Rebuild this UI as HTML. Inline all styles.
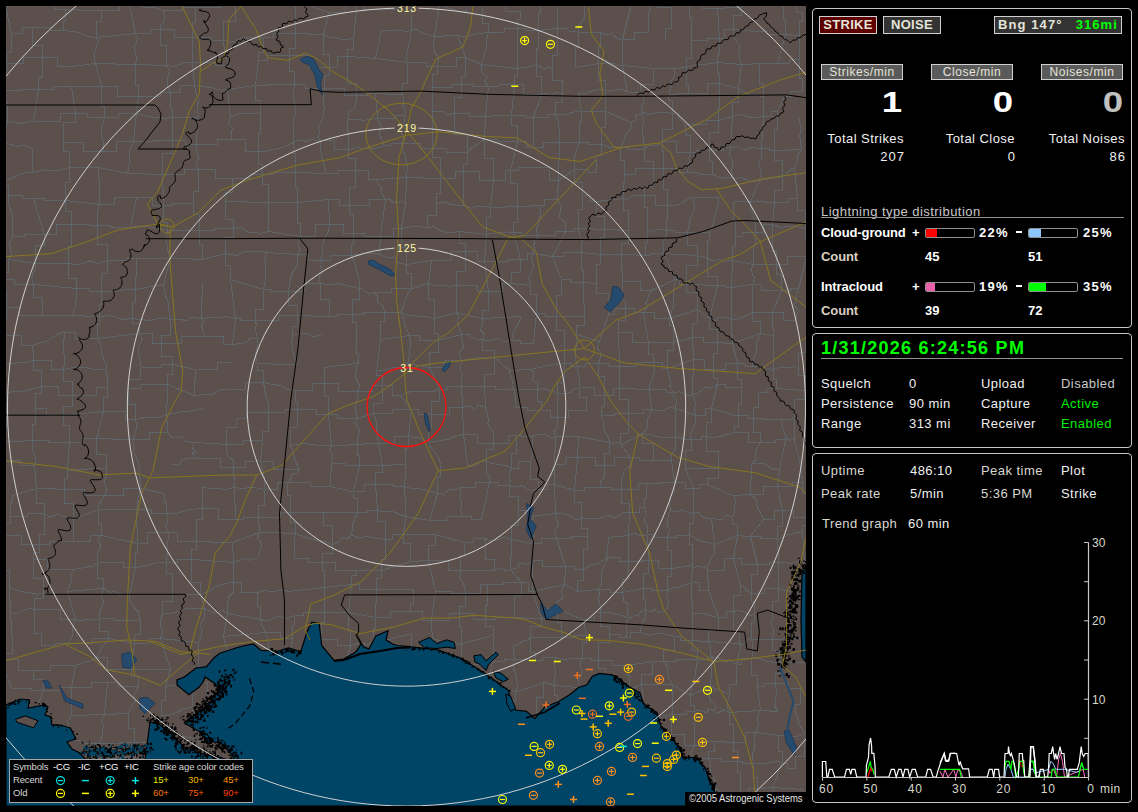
<!DOCTYPE html><html><head><meta charset="utf-8"><style>
*{margin:0;padding:0}
body{background:#000;width:1138px;height:812px;overflow:hidden;position:relative;font-family:"Liberation Sans",sans-serif}
.box{position:absolute;border:1px solid #c8c8c8;border-radius:4px;box-sizing:border-box}
.btn{position:absolute;border:1px solid #d0d0d0;box-sizing:border-box;color:#e4e4d8;text-align:center;font-size:13px;line-height:16px}
.btn.b{font-weight:bold;letter-spacing:0.3px}
.btn.s{font-size:12px;line-height:14px;letter-spacing:0.55px}
.big{position:absolute;width:60px;text-align:right;font-weight:bold;font-size:30px;line-height:30px;transform:scaleX(1.22);transform-origin:100% 0}
.t{position:absolute;font-size:13px;line-height:13px;color:#f0f0f0;letter-spacing:0.45px;white-space:nowrap}
.t.r{text-align:right}
.t.b{font-weight:bold;letter-spacing:-0.1px}
.bar{position:absolute;width:50px;height:10px;border:1px solid #909090;border-radius:2px;box-sizing:border-box;overflow:hidden}
.bar div{height:100%}
.date{position:absolute;font-size:18px;line-height:18px;font-weight:bold;color:#00ff00;letter-spacing:1.25px;white-space:nowrap}
.lg{position:absolute;font-size:9.5px;line-height:10px;white-space:nowrap;letter-spacing:-0.15px}
.gl{font-family:"Liberation Sans",sans-serif;font-size:12px;fill:#d8d8c8}
</style></head><body>
<svg width="1138" height="812" style="position:absolute;left:0;top:0">
<defs><clipPath id="mc"><rect x="6" y="6" width="800" height="800"/></clipPath></defs>
<g clip-path="url(#mc)">
<rect x="6" y="6" width="800" height="800" fill="#5c504c"/>
<path d="M5.5 6.5L32.5 2.5M5.5 6.5L11.5 33.5M11.5 33.5H22.5V27.5H32.5M11.5 33.5V52.5H6.5V63.5M6.5 63.5H23.5V57.5H42.5M6.5 63.5L7.4 70.2L4.9 76.4L4.1 81.8L1.5 90.5M1.5 90.5H21.5V89.5H38.5M1.5 90.5V102.5H7.5V122.5M7.5 122.5L14.1 121.7L20.9 123.7L26.3 122.2L33.5 121.5M7.5 122.5L0.5 143.5M0.5 143.5L7.2 143.6L17.7 146.4L23.3 145.1L32.5 148.5M0.5 143.5V164.5H0.5V178.5M0.5 178.5L8.8 179.4L18.5 175.3L24.4 172.7L32.5 172.5M0.5 178.5V185.5H8.5V195.5M8.5 195.5H22.5V198.5H33.5M8.5 195.5L8.7 204.0L12.8 217.3L13.0 224.2L12.5 236.5M12.5 236.5H24.5V234.5H44.5M12.5 236.5L9.6 243.6L10.9 250.0L11.6 254.7L8.5 259.5M8.5 259.5L35.5 263.5M8.5 259.5V272.5H1.5V279.5M1.5 279.5H14.5V284.5H33.5M1.5 279.5V290.5H6.5V307.5M6.5 307.5H19.5V315.5H42.5M6.5 307.5V319.5H1.5V335.5M1.5 335.5H21.5V345.5H32.5M1.5 335.5L0.5 363.5M0.5 363.5L9.0 363.9L17.2 362.8L27.3 362.6L33.5 360.5M0.5 363.5V383.5H5.5V393.5M5.5 393.5L13.2 391.5L22.9 391.1L34.7 388.3L41.5 386.5M5.5 393.5V402.5H6.5V415.5M6.5 415.5L5.5 441.5M5.5 441.5H23.5V440.5H32.5M5.5 441.5L3.6 448.7L4.5 452.9L3.3 456.6L5.5 460.5M5.5 460.5H20.5V465.5H34.5M12.5 495.5L36.5 488.5M12.5 495.5V502.5H10.5V516.5M10.5 516.5H27.5V513.5H44.5M10.5 516.5V523.5H3.5V535.5M3.5 535.5H21.5V544.5H39.5M3.5 535.5V547.5H3.5V557.5M3.5 557.5V570.5H9.5V587.5M9.5 587.5L20.2 591.4L28.7 592.6L36.8 594.2L43.5 593.5M9.5 587.5V600.5H10.5V612.5M10.5 612.5L17.1 613.9L20.4 611.1L30.8 607.9L34.5 609.5M10.5 612.5L12.5 643.5M12.5 643.5V653.5H0.5V659.5M0.5 659.5H18.5V670.5H33.5M0.5 659.5L11.5 688.5M11.5 688.5H31.5V690.5H43.5M12.5 712.5H22.5V708.5H36.5M12.5 712.5V729.5H0.5V740.5M0.5 740.5L8.4 740.9L16.9 742.8L22.4 746.2L31.5 745.5M0.5 740.5V748.5H9.5V760.5M9.5 760.5L14.9 760.7L22.8 762.3L28.4 763.8L34.5 766.5M9.5 760.5V770.5H0.5V786.5M0.5 786.5H20.5V793.5H34.5M0.5 786.5L3.7 792.1L7.8 800.7L8.1 809.3L12.5 817.5M32.5 2.5H54.5V9.5H65.5M32.5 27.5H51.5V30.5H63.5M32.5 27.5V45.5H42.5V57.5M42.5 57.5H57.5V66.5H70.5M42.5 57.5V77.5H38.5V89.5M38.5 89.5H53.5V86.5H71.5M38.5 89.5L33.5 121.5M33.5 121.5H60.5V113.5H75.5M32.5 148.5L32.5 172.5M32.5 172.5L44.0 169.7L49.2 170.9L62.2 169.9L69.5 167.5M33.5 198.5H44.5V200.5H65.5M33.5 198.5L44.5 234.5M44.5 234.5H56.5V224.5H71.5M44.5 234.5V245.5H35.5V263.5M35.5 263.5H52.5V263.5H68.5M35.5 263.5L35.1 271.0L32.4 272.6L31.9 278.3L33.5 284.5M33.5 284.5L76.5 288.5M33.5 284.5V297.5H42.5V315.5M42.5 315.5H61.5V315.5H72.5M32.5 345.5L42.2 342.1L47.0 341.2L58.9 333.4L64.5 332.5M32.5 345.5V350.5H33.5V360.5M33.5 360.5H51.5V369.5H63.5M33.5 360.5V370.5H41.5V386.5M41.5 386.5H58.5V395.5H72.5M41.5 386.5V393.5H35.5V408.5M35.5 408.5H46.5V415.5H63.5M35.5 408.5V424.5H32.5V440.5M32.5 440.5H48.5V442.5H69.5M32.5 440.5L32.6 447.0L33.3 452.2L36.1 457.9L34.5 465.5M34.5 465.5L36.5 488.5M36.5 488.5H55.5V489.5H64.5M36.5 488.5V503.5H44.5V513.5M44.5 513.5L50.0 517.2L57.9 514.5L67.2 517.2L73.5 519.5M44.5 513.5V534.5H39.5V544.5M39.5 544.5H49.5V541.5H73.5M39.5 544.5V552.5H33.5V559.5M33.5 559.5H47.5V569.5H74.5M33.5 559.5V578.5H43.5V593.5M43.5 593.5V598.5H34.5V609.5M34.5 609.5H60.5V619.5H75.5M34.5 609.5V633.5H41.5V645.5M41.5 645.5H55.5V643.5H68.5M33.5 670.5H50.5V665.5H75.5M33.5 670.5V679.5H43.5V690.5M43.5 690.5H61.5V687.5H71.5M43.5 690.5L36.5 708.5M36.5 708.5L36.3 719.3L35.5 725.4L34.3 735.3L31.5 745.5M31.5 745.5L64.5 740.5M31.5 745.5V754.5H34.5V766.5M34.5 766.5L47.1 769.4L56.2 765.8L66.8 766.8L76.5 769.5M34.5 793.5H49.5V787.5H73.5M34.5 793.5L38.2 798.6L35.1 803.6L36.0 808.8L39.5 811.5M39.5 811.5L49.9 812.8L58.7 814.2L65.0 813.9L73.5 815.5M65.5 9.5H78.5V10.5H101.5M65.5 9.5V21.5H63.5V30.5M63.5 30.5L71.8 31.3L78.9 32.4L89.0 36.7L96.5 37.5M70.5 66.5L95.5 63.5M71.5 86.5L101.5 86.5M71.5 86.5L75.5 113.5M75.5 113.5H87.5V117.5H104.5M75.5 113.5V122.5H63.5V142.5M63.5 142.5H83.5V151.5H103.5M63.5 142.5V151.5H69.5V167.5M69.5 167.5H81.5V167.5H98.5M69.5 167.5V182.5H65.5V200.5M65.5 200.5L99.5 204.5M65.5 200.5V211.5H71.5V224.5M71.5 224.5H89.5V225.5H97.5M71.5 224.5V246.5H68.5V263.5M68.5 263.5L79.0 264.9L90.0 260.8L98.0 263.7L107.5 260.5M68.5 263.5V278.5H76.5V288.5M76.5 288.5H89.5V291.5H101.5M76.5 288.5L76.6 294.3L75.8 302.7L74.5 308.5L72.5 315.5M72.5 315.5H85.5V316.5H99.5M64.5 332.5H75.5V338.5H97.5M64.5 332.5L63.9 339.9L63.6 351.4L65.0 359.8L63.5 369.5M63.5 369.5L74.8 367.2L86.1 367.6L93.5 369.4L106.5 369.5M63.5 369.5V381.5H72.5V395.5M72.5 395.5H96.5V387.5H107.5M72.5 395.5V406.5H63.5V415.5M63.5 415.5L103.5 411.5M63.5 415.5V425.5H69.5V442.5M69.5 442.5H82.5V438.5H96.5M69.5 442.5L67.5 470.5M67.5 470.5L78.3 469.7L86.3 469.2L96.5 468.1L106.5 468.5M67.5 470.5V478.5H64.5V489.5M64.5 489.5H84.5V495.5H104.5M64.5 489.5V503.5H73.5V519.5M73.5 519.5L98.5 509.5M73.5 519.5V532.5H73.5V541.5M73.5 541.5H90.5V535.5H101.5M74.5 569.5L79.9 568.5L84.6 567.4L91.9 566.6L97.5 562.5M74.5 569.5L70.3 574.6L72.3 579.3L69.8 584.6L67.5 591.5M67.5 591.5L103.5 588.5M67.5 591.5L75.5 619.5M75.5 619.5L83.1 620.9L87.0 619.5L94.6 620.1L99.5 618.5M75.5 619.5L72.5 626.5L72.3 631.7L72.7 635.7L68.5 643.5M68.5 643.5H92.5V638.5H108.5M75.5 665.5L80.9 663.5L84.3 662.1L93.2 660.3L96.5 657.5M75.5 665.5L71.5 687.5M71.5 687.5H91.5V682.5H107.5M71.5 687.5V707.5H71.5V715.5M71.5 715.5L104.5 714.5M71.5 715.5L67.6 720.8L69.0 729.0L67.9 733.7L64.5 740.5M64.5 740.5H82.5V743.5H99.5M64.5 740.5V756.5H76.5V769.5M76.5 769.5H88.5V758.5H95.5M73.5 787.5H83.5V782.5H101.5M73.5 787.5L74.7 793.3L73.4 802.5L71.1 810.1L73.5 815.5M73.5 815.5H92.5V810.5H106.5M101.5 10.5H119.5V0.5H128.5M101.5 10.5V21.5H96.5V37.5M96.5 37.5L135.5 33.5M96.5 37.5L98.7 42.6L94.6 51.1L94.0 59.3L95.5 63.5M95.5 63.5H114.5V64.5H135.5M95.5 63.5L101.5 86.5M101.5 86.5H117.5V96.5H138.5M101.5 86.5V106.5H104.5V117.5M104.5 117.5H118.5V113.5H136.5M104.5 117.5L102.0 127.0L101.8 136.2L104.0 143.4L103.5 151.5M103.5 151.5H116.5V141.5H133.5M98.5 167.5L127.5 173.5M98.5 167.5V178.5H99.5V204.5M99.5 204.5H114.5V197.5H136.5M99.5 204.5L98.1 209.6L97.4 215.3L97.3 219.5L97.5 225.5M97.5 225.5H110.5V227.5H130.5M97.5 225.5V244.5H107.5V260.5M107.5 260.5H126.5V258.5H136.5M107.5 260.5V273.5H101.5V291.5M101.5 291.5L110.6 291.8L119.5 290.5L126.6 289.5L135.5 289.5M101.5 291.5V304.5H99.5V316.5M99.5 316.5L109.7 315.6L113.6 316.5L121.9 319.5L132.5 318.5M99.5 316.5V324.5H97.5V338.5M97.5 338.5L139.5 333.5M97.5 338.5L101.0 346.0L101.5 354.3L106.2 364.2L106.5 369.5M106.5 369.5V376.5H107.5V387.5M107.5 387.5V397.5H103.5V411.5M103.5 411.5H125.5V419.5H135.5M103.5 411.5L96.5 438.5M96.5 438.5H112.5V439.5H132.5M96.5 438.5V454.5H106.5V468.5M106.5 468.5L106.5 475.7L103.9 481.8L107.0 489.6L104.5 495.5M104.5 495.5H123.5V488.5H140.5M104.5 495.5L103.7 496.6L100.1 503.3L98.6 503.9L98.5 509.5M98.5 509.5H124.5V509.5H136.5M98.5 509.5V523.5H101.5V535.5M101.5 535.5L137.5 543.5M101.5 535.5L98.3 539.9L101.0 547.2L97.0 553.4L97.5 562.5M97.5 562.5H123.5V567.5H135.5M97.5 562.5V578.5H103.5V588.5M103.5 588.5L110.6 592.2L114.2 591.8L122.4 594.6L129.5 594.5M103.5 588.5L100.9 596.0L103.8 602.2L99.4 613.1L99.5 618.5M99.5 618.5H114.5V620.5H140.5M99.5 618.5V631.5H108.5V638.5M108.5 638.5L134.5 643.5M108.5 638.5L104.9 644.3L102.5 645.8L99.5 652.2L96.5 657.5M96.5 657.5H107.5V669.5H131.5M107.5 682.5H118.5V686.5H138.5M107.5 682.5L104.5 714.5M104.5 714.5H116.5V713.5H128.5M104.5 714.5L101.9 720.2L103.1 726.9L102.6 733.9L99.5 743.5M99.5 743.5H121.5V742.5H134.5M99.5 743.5L99.8 748.4L95.3 752.6L94.7 753.1L95.5 758.5M95.5 758.5H120.5V757.5H133.5M95.5 758.5V766.5H101.5V782.5M101.5 782.5L112.8 780.2L118.1 781.4L127.7 780.6L138.5 782.5M101.5 782.5L101.1 787.8L104.2 795.9L103.5 803.8L106.5 810.5M106.5 810.5H122.5V809.5H138.5M128.5 0.5L135.7 2.2L143.5 7.4L155.2 7.5L163.5 10.5M128.5 0.5L135.5 33.5M135.5 33.5H150.5V29.5H160.5M135.5 33.5L137.5 39.0L134.4 48.0L136.8 58.2L135.5 64.5M135.5 64.5L166.5 65.5M135.5 64.5V85.5H138.5V96.5M138.5 96.5H160.5V92.5H170.5M138.5 96.5L136.5 113.5M136.5 113.5L147.8 116.5L154.9 117.4L166.0 118.2L172.5 117.5M136.5 113.5L133.5 141.5M133.5 141.5H153.5V140.5H172.5M133.5 141.5L129.8 150.1L129.4 156.6L129.5 164.0L127.5 173.5M127.5 173.5L162.5 174.5M136.5 197.5H152.5V205.5H163.5M136.5 197.5L130.5 227.5M130.5 227.5L138.9 225.8L146.5 226.5L157.4 228.6L167.5 230.5M136.5 258.5H156.5V258.5H170.5M136.5 258.5V276.5H135.5V289.5M135.5 289.5L163.5 284.5M135.5 289.5V302.5H132.5V318.5M132.5 318.5L141.8 319.7L149.8 320.4L163.3 317.8L170.5 319.5M132.5 318.5V323.5H139.5V333.5M139.5 333.5H152.5V343.5H161.5M139.5 333.5L142.1 339.8L138.0 348.2L140.0 360.6L140.5 367.5M140.5 367.5H161.5V364.5H172.5M140.5 367.5V379.5H128.5V388.5M128.5 388.5H140.5V384.5H167.5M128.5 388.5V404.5H135.5V419.5M135.5 419.5L144.9 417.5L149.1 417.9L159.9 417.7L166.5 414.5M135.5 419.5L136.6 425.4L136.4 428.4L134.6 435.2L132.5 439.5M132.5 439.5H149.5V432.5H167.5M132.5 439.5L134.3 446.8L133.8 452.2L138.3 462.2L139.5 468.5M139.5 468.5V478.5H140.5V488.5M140.5 488.5L164.5 493.5M140.5 488.5L136.5 509.5M136.5 509.5H151.5V513.5H166.5M136.5 509.5L137.5 543.5M137.5 543.5H147.5V532.5H168.5M137.5 543.5V552.5H135.5V567.5M135.5 567.5L144.6 566.0L150.0 564.3L160.7 562.3L166.5 562.5M135.5 567.5L129.5 594.5M129.5 594.5H144.5V594.5H172.5M129.5 594.5L130.1 601.9L133.6 607.2L138.3 611.8L140.5 620.5M140.5 620.5V634.5H134.5V643.5M134.5 643.5H149.5V638.5H160.5M134.5 643.5L131.5 669.5M131.5 669.5H143.5V669.5H170.5M131.5 669.5V676.5H138.5V686.5M138.5 686.5L133.9 695.4L135.7 700.6L130.1 707.9L128.5 713.5M128.5 713.5V728.5H134.5V742.5M134.5 742.5H159.5V733.5H171.5M134.5 742.5V750.5H133.5V757.5M133.5 757.5H155.5V757.5H169.5M133.5 757.5V769.5H138.5V782.5M138.5 782.5L144.1 781.3L148.0 782.3L157.4 784.7L161.5 785.5M138.5 782.5V794.5H138.5V809.5M138.5 809.5L168.5 811.5M163.5 10.5H182.5V7.5H195.5M163.5 10.5L164.1 15.8L163.9 22.3L160.8 25.5L160.5 29.5M160.5 29.5H174.5V37.5H192.5M160.5 29.5V45.5H166.5V65.5M166.5 65.5L173.9 66.5L178.9 64.7L184.8 62.3L192.5 62.5M166.5 65.5L169.6 71.3L167.9 77.1L167.7 86.4L170.5 92.5M170.5 92.5H180.5V85.5H194.5M170.5 92.5V108.5H172.5V117.5M172.5 117.5H182.5V117.5H198.5M172.5 117.5V126.5H172.5V140.5M172.5 140.5H185.5V144.5H196.5M172.5 140.5V153.5H162.5V174.5M162.5 174.5H184.5V169.5H198.5M162.5 174.5V189.5H163.5V205.5M163.5 205.5H172.5V203.5H193.5M163.5 205.5V222.5H167.5V230.5M167.5 230.5L199.5 230.5M167.5 230.5L166.4 239.0L167.0 244.8L167.7 249.5L170.5 258.5M170.5 258.5H192.5V259.5H202.5M170.5 258.5L163.5 284.5M163.5 284.5L165.1 294.6L167.8 300.3L168.9 310.3L170.5 319.5M170.5 319.5L179.2 319.6L187.4 320.6L191.7 317.0L201.5 318.5M170.5 319.5V335.5H161.5V343.5M161.5 343.5H181.5V336.5H203.5M161.5 343.5V356.5H172.5V364.5M172.5 364.5L195.5 369.5M172.5 364.5V374.5H167.5V384.5M167.5 384.5L194.5 395.5M167.5 384.5V402.5H166.5V414.5M166.5 414.5L175.3 413.1L183.5 411.3L193.0 410.9L203.5 408.5M166.5 414.5V421.5H167.5V432.5M167.5 432.5L171.8 437.4L182.7 436.9L186.0 441.6L194.5 442.5M172.5 464.5L179.6 465.2L182.0 459.6L187.3 458.7L194.5 458.5M164.5 493.5V502.5H166.5V513.5M166.5 513.5L176.6 513.6L184.2 510.8L193.3 509.1L202.5 508.5M166.5 513.5L168.1 517.4L167.8 521.2L165.7 527.2L168.5 532.5M168.5 532.5H177.5V541.5H196.5M168.5 532.5L166.5 562.5M166.5 562.5H177.5V559.5H191.5M166.5 562.5V573.5H172.5V594.5M172.5 594.5L200.5 594.5M172.5 594.5V601.5H162.5V613.5M162.5 613.5L171.7 613.4L185.0 608.9L192.4 608.8L204.5 608.5M162.5 613.5L161.0 619.5L160.8 625.9L162.5 631.1L160.5 638.5M160.5 638.5L198.5 642.5M160.5 638.5L170.5 669.5M170.5 669.5L165.5 686.5M165.5 686.5L193.5 682.5M165.5 686.5V700.5H161.5V715.5M161.5 715.5L167.8 715.5L178.8 711.5L182.5 708.4L192.5 707.5M161.5 715.5V727.5H171.5V733.5M171.5 733.5L198.5 739.5M171.5 733.5V747.5H169.5V757.5M169.5 757.5H178.5V759.5H198.5M169.5 757.5V772.5H161.5V785.5M161.5 785.5L168.5 782.8L178.4 784.2L185.5 784.1L193.5 784.5M161.5 785.5V796.5H168.5V811.5M168.5 811.5H179.5V820.5H202.5M195.5 7.5H221.5V0.5H235.5M195.5 7.5V22.5H192.5V37.5M192.5 37.5H211.5V40.5H223.5M192.5 37.5V48.5H192.5V62.5M192.5 62.5H215.5V65.5H229.5M192.5 62.5L194.5 85.5M194.5 85.5L202.6 86.7L211.4 87.6L220.8 90.3L227.5 89.5M194.5 85.5L196.1 94.0L198.5 99.2L197.4 108.9L198.5 117.5M198.5 117.5L196.2 125.5L197.4 132.2L196.0 139.7L196.5 144.5M196.5 144.5H217.5V139.5H231.5M196.5 144.5L195.9 148.7L198.5 158.2L195.8 165.4L198.5 169.5M198.5 169.5H215.5V178.5H232.5M198.5 169.5V191.5H193.5V203.5M193.5 203.5V214.5H199.5V230.5M199.5 230.5H214.5V228.5H233.5M199.5 230.5V244.5H202.5V259.5M202.5 259.5L225.5 253.5M202.5 282.5V296.5H201.5V318.5M201.5 318.5L210.5 317.7L221.0 317.6L224.6 316.5L235.5 318.5M201.5 318.5L203.7 320.7L201.2 326.2L204.4 334.0L203.5 336.5M203.5 336.5H223.5V344.5H232.5M195.5 369.5H217.5V362.5H231.5M195.5 369.5V380.5H194.5V395.5M194.5 395.5L202.9 394.7L211.2 394.9L220.8 389.6L231.5 389.5M194.5 442.5L226.5 444.5M194.5 442.5L192.4 447.7L196.2 452.2L192.2 452.3L194.5 458.5M194.5 458.5H220.5V467.5H233.5M202.5 487.5L211.3 488.5L217.8 488.2L224.3 489.5L234.5 487.5M202.5 487.5L202.5 508.5M202.5 508.5H218.5V519.5H235.5M202.5 508.5V519.5H196.5V541.5M196.5 541.5H210.5V542.5H232.5M196.5 541.5V549.5H191.5V559.5M191.5 559.5L233.5 562.5M191.5 559.5V582.5H200.5V594.5M200.5 594.5L209.3 590.8L216.2 586.4L226.1 583.3L233.5 582.5M200.5 594.5L204.5 608.5M204.5 608.5L211.8 612.0L217.6 613.5L221.5 609.8L227.5 613.5M204.5 608.5L204.8 617.6L200.8 623.0L201.7 634.6L198.5 642.5M198.5 642.5L198.5 666.5M198.5 666.5L231.5 665.5M198.5 666.5L193.5 682.5M193.5 682.5H207.5V695.5H226.5M193.5 682.5L192.5 707.5M192.5 707.5H215.5V711.5H232.5M192.5 707.5V722.5H198.5V739.5M198.5 739.5L206.6 741.0L214.7 741.9L222.5 739.7L232.5 739.5M198.5 739.5V747.5H198.5V759.5M198.5 759.5H214.5V762.5H230.5M198.5 759.5V772.5H193.5V784.5M193.5 784.5H211.5V790.5H236.5M193.5 784.5L196.8 794.0L199.8 803.7L198.0 809.7L202.5 820.5M202.5 820.5L232.5 817.5M235.5 0.5V21.5H223.5V40.5M223.5 40.5L231.7 42.1L243.6 37.8L255.9 37.7L263.5 37.5M223.5 40.5L223.8 45.3L225.5 53.5L227.1 60.1L229.5 65.5M227.5 89.5L255.5 85.5M227.5 89.5L230.5 117.5M230.5 117.5L235.9 114.2L247.7 113.1L254.1 113.9L260.5 112.5M230.5 117.5L228.6 124.9L232.6 128.5L231.0 131.6L231.5 139.5M231.5 139.5H245.5V151.5H258.5M232.5 178.5H250.5V174.5H262.5M232.5 178.5V192.5H225.5V201.5M225.5 201.5H247.5V202.5H268.5M225.5 201.5V219.5H233.5V228.5M233.5 228.5L241.6 227.7L248.5 232.3L261.0 233.2L268.5 231.5M233.5 228.5V237.5H225.5V253.5M225.5 253.5L236.4 255.5L245.0 251.7L254.9 251.0L266.5 252.5M225.5 253.5V265.5H230.5V279.5M230.5 279.5L263.5 289.5M230.5 279.5L235.5 318.5M235.5 318.5H241.5V320.5H255.5M235.5 318.5L232.5 344.5M232.5 344.5L237.4 343.9L246.7 342.6L250.0 338.3L257.5 338.5M231.5 389.5H245.5V382.5H263.5M236.5 418.5H246.5V412.5H268.5M236.5 418.5V427.5H226.5V444.5M226.5 444.5H243.5V440.5H262.5M226.5 444.5L226.2 450.4L227.8 455.7L233.3 460.6L233.5 467.5M233.5 467.5H245.5V461.5H260.5M233.5 467.5V477.5H234.5V487.5M234.5 487.5L244.2 489.0L248.1 487.0L256.9 487.9L264.5 489.5M234.5 487.5V505.5H235.5V519.5M235.5 519.5H243.5V517.5H258.5M232.5 542.5L259.5 532.5M232.5 542.5L233.5 562.5M233.5 562.5L242.0 559.8L243.5 558.1L250.2 560.3L258.5 557.5M233.5 562.5V569.5H233.5V582.5M233.5 582.5H241.5V592.5H257.5M233.5 582.5L233.5 591.9L228.7 597.0L227.2 605.7L227.5 613.5M227.5 613.5L260.5 619.5M227.5 613.5L223.5 636.5M223.5 636.5L265.5 632.5M223.5 636.5L231.5 665.5M231.5 665.5H247.5V670.5H268.5M231.5 665.5L230.1 675.4L227.9 680.2L229.6 690.3L226.5 695.5M226.5 695.5L256.5 694.5M232.5 711.5L237.6 712.9L249.3 712.5L252.5 713.3L261.5 713.5M232.5 711.5V720.5H232.5V739.5M232.5 739.5L268.5 735.5M232.5 739.5L230.5 762.5M230.5 762.5H240.5V770.5H262.5M230.5 762.5L231.5 767.7L233.3 774.3L233.1 781.4L236.5 790.5M236.5 790.5H254.5V788.5H265.5M236.5 790.5L232.5 817.5M232.5 817.5H247.5V818.5H268.5M268.5 0.5L276.0 1.2L279.7 -1.0L288.4 2.2L295.5 0.5M263.5 37.5H273.5V33.5H295.5M263.5 37.5V52.5H258.5V60.5M258.5 60.5H267.5V55.5H289.5M258.5 60.5L255.5 85.5M255.5 85.5H267.5V84.5H294.5M255.5 85.5V100.5H260.5V112.5M260.5 112.5V133.5H258.5V151.5M258.5 151.5L266.0 151.1L276.9 149.0L284.0 147.0L293.5 142.5M258.5 151.5V164.5H262.5V174.5M262.5 174.5H272.5V172.5H295.5M262.5 174.5V184.5H268.5V202.5M268.5 202.5H285.5V202.5H297.5M268.5 202.5V222.5H268.5V231.5M268.5 231.5L300.5 236.5M266.5 252.5L297.5 254.5M266.5 252.5L264.9 261.1L265.3 269.7L265.0 282.1L263.5 289.5M263.5 289.5H271.5V291.5H288.5M263.5 289.5V309.5H255.5V320.5M255.5 320.5H278.5V315.5H297.5M255.5 320.5L256.3 325.3L255.2 327.6L256.7 335.9L257.5 338.5M257.5 338.5L257.6 344.5L255.9 352.4L255.4 355.9L257.5 363.5M257.5 363.5H272.5V364.5H296.5M257.5 363.5V370.5H263.5V382.5M263.5 382.5L272.1 384.4L280.1 385.5L287.3 389.4L295.5 390.5M263.5 382.5L265.2 392.4L266.6 397.7L268.6 403.9L268.5 412.5M268.5 412.5H285.5V409.5H297.5M268.5 412.5V431.5H262.5V440.5M262.5 440.5L260.5 461.5M260.5 461.5H273.5V469.5H299.5M260.5 461.5L262.6 469.1L263.9 475.2L264.7 483.0L264.5 489.5M264.5 489.5H277.5V482.5H287.5M264.5 489.5V505.5H258.5V517.5M258.5 517.5H280.5V512.5H290.5M258.5 517.5V525.5H259.5V532.5M259.5 532.5H283.5V533.5H295.5M259.5 532.5L257.6 538.8L261.5 542.9L260.5 548.8L258.5 557.5M257.5 592.5L265.0 590.6L272.3 591.7L282.6 589.8L288.5 591.5M257.5 592.5V606.5H260.5V619.5M260.5 619.5L268.1 620.8L278.0 616.4L286.2 618.3L294.5 615.5M260.5 619.5L261.7 621.7L261.3 624.7L263.9 628.9L265.5 632.5M265.5 632.5H280.5V638.5H292.5M265.5 632.5L267.8 640.7L269.4 651.7L266.9 659.8L268.5 670.5M268.5 670.5H280.5V661.5H289.5M268.5 670.5L256.5 694.5M256.5 694.5L297.5 693.5M256.5 694.5V704.5H261.5V713.5M261.5 713.5H275.5V708.5H288.5M268.5 735.5H289.5V740.5H298.5M268.5 735.5V757.5H262.5V770.5M262.5 770.5H275.5V759.5H297.5M262.5 770.5L265.5 788.5M265.5 788.5H273.5V785.5H292.5M265.5 788.5V803.5H268.5V818.5M295.5 0.5L328.5 12.5M295.5 0.5L295.5 33.5M295.5 33.5H308.5V34.5H323.5M295.5 33.5V48.5H289.5V55.5M289.5 55.5H309.5V67.5H329.5M289.5 55.5V71.5H294.5V84.5M294.5 84.5H305.5V88.5H324.5M294.5 84.5L292.9 94.4L294.4 103.8L296.2 110.7L293.5 120.5M293.5 120.5V128.5H293.5V142.5M293.5 142.5L298.3 139.7L304.9 141.7L312.2 139.8L320.5 140.5M293.5 142.5V153.5H295.5V172.5M295.5 172.5L326.5 173.5M295.5 172.5V187.5H297.5V202.5M297.5 202.5L328.5 199.5M297.5 202.5V223.5H300.5V236.5M300.5 236.5H315.5V224.5H329.5M300.5 236.5L298.7 243.2L298.7 247.1L300.5 249.8L297.5 254.5M297.5 254.5H308.5V260.5H321.5M297.5 254.5L297.4 264.7L292.1 273.1L290.0 281.7L288.5 291.5M288.5 291.5H304.5V283.5H320.5M288.5 291.5V305.5H297.5V315.5M297.5 315.5H310.5V316.5H329.5M297.5 315.5V326.5H292.5V335.5M292.5 335.5L300.3 333.3L307.5 333.8L314.0 337.0L322.5 334.5M292.5 335.5L291.8 343.4L292.6 348.6L293.6 354.9L296.5 364.5M295.5 390.5H312.5V383.5H324.5M295.5 390.5V402.5H297.5V409.5M297.5 409.5H316.5V414.5H328.5M297.5 409.5V427.5H290.5V445.5M290.5 445.5L300.9 443.9L308.8 443.9L321.4 446.0L331.5 445.5M290.5 445.5L293.1 452.2L294.6 459.2L297.4 465.4L299.5 469.5M299.5 469.5L297.5 473.0L292.2 474.0L291.3 478.0L287.5 482.5M287.5 482.5H310.5V486.5H330.5M287.5 482.5V495.5H290.5V512.5M290.5 512.5L323.5 512.5M290.5 512.5V522.5H295.5V533.5M295.5 533.5L306.0 537.6L315.5 540.1L325.6 541.5L332.5 544.5M295.5 533.5L294.3 541.4L294.6 546.3L294.8 551.6L294.5 558.5M294.5 558.5H308.5V562.5H322.5M288.5 591.5L324.5 587.5M294.5 615.5H303.5V612.5H324.5M294.5 615.5V625.5H292.5V638.5M292.5 638.5L289.5 661.5M289.5 661.5H310.5V664.5H330.5M289.5 661.5V677.5H297.5V693.5M297.5 693.5H316.5V689.5H330.5M297.5 693.5V698.5H288.5V708.5M288.5 708.5L297.8 710.3L307.2 714.1L313.6 717.1L321.5 717.5M288.5 708.5V725.5H298.5V740.5M298.5 740.5L331.5 735.5M298.5 740.5V753.5H297.5V759.5M297.5 759.5H310.5V764.5H319.5M297.5 759.5L292.5 785.5M292.5 785.5H309.5V789.5H326.5M292.5 785.5V799.5H298.5V812.5M298.5 812.5H310.5V816.5H332.5M328.5 12.5H345.5V0.5H357.5M328.5 12.5L323.5 34.5M323.5 34.5L329.9 37.5L337.7 38.2L344.7 39.8L353.5 38.5M323.5 34.5V54.5H329.5V67.5M329.5 67.5H337.5V56.5H347.5M329.5 67.5V75.5H324.5V88.5M324.5 88.5H344.5V95.5H356.5M324.5 88.5L323.1 99.6L324.4 107.0L323.2 116.8L320.5 123.5M320.5 123.5L318.3 127.1L319.6 132.6L318.0 137.5L320.5 140.5M320.5 140.5H334.5V149.5H348.5M320.5 140.5L320.2 149.6L322.2 157.6L324.6 167.5L326.5 173.5M326.5 173.5H338.5V170.5H355.5M328.5 199.5H339.5V205.5H349.5M328.5 199.5L329.5 224.5M329.5 224.5H343.5V233.5H353.5M329.5 224.5L328.4 231.5L323.3 240.9L322.5 249.9L321.5 260.5M321.5 260.5H330.5V255.5H351.5M321.5 260.5L319.5 264.2L322.1 269.9L319.0 277.7L320.5 283.5M320.5 283.5L330.3 284.9L339.4 283.6L351.4 286.7L359.5 288.5M320.5 283.5V299.5H329.5V316.5M329.5 316.5H337.5V314.5H352.5M324.5 367.5L333.5 366.1L339.9 365.7L349.7 364.6L358.5 362.5M324.5 367.5V373.5H324.5V383.5M324.5 383.5H338.5V391.5H357.5M324.5 383.5V396.5H328.5V414.5M328.5 414.5H337.5V418.5H357.5M328.5 414.5L331.5 445.5M331.5 445.5H349.5V444.5H357.5M331.5 445.5L329.5 449.7L332.1 454.0L332.3 458.2L331.5 463.5M331.5 463.5H345.5V465.5H359.5M331.5 463.5V470.5H330.5V486.5M330.5 486.5L334.6 487.6L344.5 489.5L348.9 491.6L353.5 491.5M323.5 512.5H343.5V512.5H357.5M323.5 512.5V525.5H332.5V544.5M332.5 544.5L339.1 542.0L343.0 537.4L347.5 539.1L351.5 534.5M332.5 544.5V553.5H322.5V562.5M322.5 562.5H335.5V570.5H356.5M322.5 562.5V570.5H324.5V587.5M324.5 587.5L351.5 584.5M324.5 587.5V604.5H324.5V612.5M324.5 612.5H336.5V612.5H348.5M324.5 612.5V622.5H321.5V639.5M321.5 639.5H337.5V645.5H350.5M321.5 639.5V656.5H330.5V664.5M330.5 664.5H341.5V661.5H346.5M330.5 664.5V679.5H330.5V689.5M330.5 689.5H336.5V691.5H347.5M330.5 689.5L328.8 694.6L327.2 701.9L325.2 711.1L321.5 717.5M321.5 717.5H337.5V709.5H356.5M321.5 717.5V723.5H331.5V735.5M331.5 735.5L346.5 738.5M331.5 735.5V745.5H319.5V764.5M319.5 764.5L354.5 769.5M319.5 764.5V779.5H326.5V789.5M326.5 789.5H335.5V783.5H346.5M332.5 816.5H341.5V810.5H348.5M357.5 0.5H363.5V9.5H376.5M357.5 0.5L353.5 38.5M353.5 38.5V49.5H347.5V56.5M347.5 56.5L375.5 58.5M347.5 56.5V83.5H356.5V95.5M356.5 95.5H367.5V93.5H375.5M356.5 95.5L356.5 100.4L354.0 109.4L349.0 111.1L347.5 119.5M347.5 119.5L357.3 119.5L363.6 120.3L368.3 119.6L377.5 118.5M347.5 119.5V131.5H348.5V149.5M348.5 149.5L357.8 147.6L364.3 148.9L376.8 148.2L384.5 145.5M348.5 149.5V158.5H355.5V170.5M355.5 170.5H368.5V179.5H376.5M355.5 170.5V187.5H349.5V205.5M349.5 205.5H369.5V199.5H385.5M349.5 205.5V214.5H353.5V233.5M353.5 233.5H364.5V236.5H380.5M353.5 233.5V244.5H351.5V255.5M351.5 255.5L359.4 254.1L366.0 253.8L373.7 253.3L379.5 254.5M351.5 255.5L355.0 263.9L357.6 274.4L359.0 279.5L359.5 288.5M359.5 288.5L361.1 287.9L364.5 291.3L369.4 293.6L373.5 292.5M359.5 288.5V299.5H352.5V314.5M352.5 314.5H363.5V312.5H384.5M352.5 314.5V322.5H356.5V341.5M356.5 341.5L356.8 349.1L355.4 351.9L358.7 354.9L358.5 362.5M358.5 362.5L356.1 367.6L355.9 378.4L360.0 386.3L357.5 391.5M357.5 391.5H372.5V385.5H382.5M357.5 391.5L358.2 398.6L355.9 403.2L355.4 411.4L357.5 418.5M357.5 418.5L373.5 413.5M357.5 418.5L355.6 423.0L359.6 430.1L358.0 438.4L357.5 444.5M357.5 444.5H364.5V443.5H378.5M357.5 444.5V455.5H359.5V465.5M359.5 465.5H370.5V465.5H382.5M359.5 465.5L353.5 491.5M353.5 491.5H364.5V484.5H375.5M353.5 491.5V498.5H357.5V512.5M357.5 512.5H367.5V510.5H377.5M357.5 512.5L355.1 519.0L352.3 525.2L352.7 527.4L351.5 534.5M351.5 534.5L358.0 537.8L367.1 536.6L374.9 538.0L385.5 539.5M356.5 570.5H369.5V570.5H381.5M356.5 570.5V575.5H351.5V584.5M351.5 584.5H359.5V589.5H376.5M351.5 584.5L348.5 612.5M348.5 612.5L375.5 617.5M348.5 612.5V630.5H350.5V645.5M350.5 645.5L356.5 643.7L360.7 642.4L365.5 644.4L373.5 643.5M350.5 645.5L346.5 661.5M346.5 661.5L347.5 691.5M347.5 691.5H359.5V685.5H374.5M347.5 691.5V697.5H356.5V709.5M356.5 709.5H369.5V708.5H383.5M356.5 709.5V728.5H346.5V738.5M346.5 738.5H366.5V738.5H379.5M346.5 738.5L349.9 745.5L351.7 753.3L350.9 761.3L354.5 769.5M354.5 769.5L361.3 768.5L372.0 768.0L380.5 767.6L386.5 765.5M354.5 769.5L353.5 775.1L351.0 777.3L348.7 780.2L346.5 783.5M346.5 783.5V797.5H348.5V810.5M348.5 810.5L358.2 808.5L365.0 812.1L375.0 812.9L384.5 812.5M376.5 9.5H397.5V0.5H412.5M381.5 30.5L389.6 30.8L396.5 30.0L406.4 31.6L411.5 29.5M381.5 30.5L375.5 58.5M375.5 58.5L407.5 62.5M375.5 93.5H386.5V94.5H402.5M375.5 93.5L377.5 118.5M377.5 118.5H395.5V115.5H404.5M377.5 118.5L381.2 127.4L379.0 134.3L381.7 139.3L384.5 145.5M384.5 145.5H391.5V143.5H401.5M376.5 179.5L406.5 177.5M376.5 179.5L379.9 186.8L382.1 188.4L381.3 192.9L385.5 199.5M385.5 199.5L389.6 199.0L393.4 202.9L402.1 201.4L405.5 204.5M385.5 199.5L380.5 236.5M380.5 236.5H393.5V228.5H401.5M380.5 236.5L379.5 254.5M379.5 254.5L385.5 257.0L395.2 257.3L397.7 262.7L406.5 264.5M373.5 292.5H391.5V288.5H411.5M373.5 292.5L377.0 295.3L377.5 302.9L382.9 305.5L384.5 312.5M384.5 312.5H391.5V312.5H400.5M384.5 312.5V321.5H380.5V339.5M380.5 339.5L409.5 335.5M380.5 339.5L376.5 370.5M376.5 370.5L383.6 370.5L392.5 367.6L401.8 367.5L407.5 363.5M376.5 370.5V375.5H382.5V385.5M382.5 385.5H392.5V395.5H400.5M382.5 385.5V403.5H373.5V413.5M373.5 413.5H392.5V409.5H411.5M373.5 413.5L375.8 419.1L376.6 426.6L377.4 434.0L378.5 443.5M378.5 443.5H394.5V436.5H408.5M378.5 443.5L382.5 465.5M382.5 465.5H391.5V464.5H405.5M382.5 465.5V472.5H375.5V484.5M375.5 484.5H393.5V486.5H404.5M375.5 484.5L377.5 510.5M377.5 510.5L383.3 511.5L392.6 511.4L398.3 513.8L405.5 516.5M377.5 510.5V521.5H385.5V539.5M385.5 539.5H392.5V534.5H403.5M385.5 539.5V559.5H381.5V570.5M381.5 570.5L410.5 561.5M381.5 570.5V578.5H376.5V589.5M376.5 589.5L413.5 589.5M376.5 589.5L375.5 617.5M375.5 617.5H390.5V611.5H410.5M375.5 617.5V628.5H373.5V643.5M373.5 643.5L411.5 633.5M373.5 643.5V652.5H384.5V668.5M384.5 668.5H392.5V658.5H401.5M384.5 668.5V680.5H374.5V685.5M374.5 685.5L382.5 689.4L394.3 689.2L399.4 687.7L409.5 691.5M374.5 685.5V700.5H383.5V708.5M383.5 708.5V729.5H379.5V738.5M379.5 738.5H391.5V740.5H411.5M386.5 765.5L391.1 761.9L396.2 762.0L399.1 761.9L401.5 760.5M386.5 765.5V779.5H385.5V786.5M385.5 786.5H396.5V783.5H402.5M385.5 786.5V797.5H384.5V812.5M384.5 812.5H390.5V808.5H405.5M412.5 0.5V9.5H411.5V29.5M411.5 29.5L416.2 29.2L422.6 33.4L426.9 34.1L434.5 36.5M411.5 29.5L410.0 40.2L408.3 47.3L406.4 56.3L407.5 62.5M407.5 62.5H426.5V66.5H437.5M407.5 62.5V83.5H402.5V94.5M402.5 94.5L404.1 100.1L402.9 104.1L405.6 111.7L404.5 115.5M404.5 115.5L404.8 121.1L400.6 131.5L403.7 137.6L401.5 143.5M401.5 143.5H420.5V148.5H432.5M401.5 143.5L403.8 151.8L406.3 161.2L407.2 167.5L406.5 177.5M406.5 177.5H423.5V178.5H440.5M406.5 177.5L405.5 204.5M405.5 204.5L401.5 228.5M401.5 228.5L406.0 227.8L414.4 226.0L423.0 227.1L427.5 227.5M401.5 228.5V247.5H406.5V264.5M406.5 264.5L431.5 260.5M406.5 264.5V273.5H411.5V288.5M411.5 288.5L416.3 287.5L420.0 286.1L426.3 283.3L428.5 284.5M411.5 288.5L407.8 293.7L405.7 299.5L404.5 304.5L400.5 312.5M400.5 312.5L408.2 315.1L416.8 316.1L424.0 316.1L434.5 318.5M400.5 312.5L402.6 315.9L405.2 325.8L406.1 328.3L409.5 335.5M409.5 335.5H419.5V340.5H438.5M409.5 335.5L410.9 343.9L408.9 351.4L409.7 355.3L407.5 363.5M407.5 363.5L429.5 367.5M400.5 395.5L409.5 392.0L419.1 391.2L430.4 391.8L439.5 389.5M400.5 395.5L411.5 409.5M411.5 409.5H418.5V414.5H431.5M411.5 409.5L408.5 436.5M408.5 436.5L411.9 437.0L420.0 438.0L424.7 440.7L428.5 441.5M408.5 436.5V448.5H405.5V464.5M405.5 464.5V479.5H404.5V486.5M404.5 486.5L412.7 488.9L420.4 488.9L428.2 490.4L437.5 493.5M404.5 486.5V496.5H405.5V516.5M405.5 516.5L429.5 520.5M405.5 516.5L406.2 519.5L404.6 523.1L404.1 527.7L403.5 534.5M403.5 534.5H417.5V534.5H435.5M403.5 534.5V543.5H410.5V561.5M410.5 561.5L428.5 560.5M413.5 589.5V603.5H410.5V611.5M410.5 611.5H422.5V620.5H431.5M411.5 633.5V648.5H401.5V658.5M401.5 658.5L409.5 691.5M409.5 691.5L415.3 691.9L419.4 695.1L424.1 691.4L428.5 694.5M409.5 691.5L402.5 712.5M402.5 712.5H424.5V714.5H434.5M402.5 712.5V728.5H411.5V740.5M411.5 740.5H427.5V735.5H434.5M411.5 740.5L401.5 760.5M401.5 760.5H417.5V770.5H439.5M401.5 760.5L403.2 767.0L404.0 770.1L401.2 777.3L402.5 783.5M402.5 783.5L414.0 787.1L420.7 788.2L431.1 788.9L438.5 790.5M402.5 783.5L405.5 808.5M405.5 808.5H412.5V818.5H428.5M439.5 4.5L458.5 11.5M439.5 4.5L434.5 36.5M434.5 36.5H442.5V35.5H457.5M434.5 36.5L433.5 46.0L434.6 53.2L439.0 57.1L437.5 66.5M437.5 66.5H456.5V57.5H465.5M437.5 66.5V74.5H432.5V87.5M432.5 87.5H451.5V84.5H461.5M432.5 87.5L432.5 111.5M432.5 111.5L440.2 111.1L444.0 112.1L446.8 114.7L454.5 113.5M432.5 111.5L432.5 148.5M432.5 148.5H446.5V152.5H467.5M432.5 148.5V157.5H440.5V178.5M440.5 178.5H455.5V171.5H463.5M440.5 178.5V193.5H436.5V203.5M436.5 203.5L444.0 201.9L449.8 204.1L456.5 205.3L463.5 205.5M436.5 203.5V215.5H427.5V227.5M427.5 227.5L434.0 226.7L442.4 231.8L450.9 232.4L459.5 231.5M431.5 260.5H451.5V251.5H465.5M431.5 260.5L428.5 284.5M428.5 284.5L436.4 285.4L440.9 285.3L449.1 286.2L456.5 285.5M428.5 284.5V299.5H434.5V318.5M434.5 318.5L456.5 312.5M434.5 318.5V333.5H438.5V340.5M438.5 340.5L461.5 334.5M438.5 340.5V352.5H429.5V367.5M429.5 367.5H444.5V360.5H461.5M429.5 367.5L439.5 389.5M439.5 389.5H447.5V386.5H461.5M439.5 389.5V401.5H431.5V414.5M431.5 414.5H449.5V407.5H462.5M431.5 414.5V427.5H428.5V441.5M428.5 441.5L437.1 441.1L448.3 439.2L455.3 436.3L463.5 434.5M428.5 441.5L430.0 446.6L434.9 451.8L439.3 459.0L440.5 464.5M440.5 464.5V476.5H437.5V493.5M437.5 493.5L443.7 494.2L448.7 489.9L456.0 489.3L460.5 487.5M437.5 493.5L429.5 520.5M429.5 520.5H446.5V516.5H462.5M435.5 534.5L464.5 542.5M435.5 534.5V545.5H428.5V560.5M428.5 560.5H448.5V570.5H460.5M428.5 560.5L435.5 591.5M435.5 591.5H451.5V593.5H465.5M435.5 591.5L431.5 620.5M431.5 620.5H449.5V613.5H459.5M431.5 620.5V631.5H432.5V638.5M432.5 638.5L439.8 640.7L449.1 643.5L454.2 642.4L461.5 644.5M432.5 638.5L429.5 646.5L429.4 655.2L427.8 661.5L428.5 670.5M428.5 670.5H445.5V664.5H461.5M428.5 670.5L429.2 677.8L428.0 682.1L429.3 687.0L428.5 694.5M428.5 694.5L460.5 694.5M428.5 694.5V707.5H434.5V714.5M434.5 714.5H447.5V707.5H458.5M434.5 714.5V725.5H434.5V735.5M434.5 735.5H449.5V744.5H464.5M434.5 735.5L436.9 745.3L438.6 752.9L438.9 759.8L439.5 770.5M439.5 770.5H453.5V765.5H464.5M439.5 770.5L438.5 790.5M438.5 790.5H451.5V786.5H464.5M428.5 818.5H447.5V807.5H462.5M458.5 11.5H466.5V5.5H482.5M457.5 35.5L464.0 36.9L471.0 35.0L478.6 33.4L488.5 32.5M457.5 35.5L465.5 57.5M465.5 57.5L481.5 64.5M465.5 57.5V76.5H461.5V84.5M461.5 84.5H472.5V86.5H488.5M461.5 84.5V97.5H454.5V113.5M454.5 113.5H469.5V116.5H485.5M454.5 113.5V134.5H467.5V152.5M467.5 152.5L471.5 147.8L478.2 144.1L479.3 142.3L484.5 139.5M467.5 152.5V164.5H463.5V171.5M463.5 171.5H479.5V180.5H493.5M463.5 171.5V183.5H463.5V205.5M463.5 205.5L472.0 208.2L475.1 206.3L484.6 206.4L490.5 207.5M459.5 231.5L486.5 234.5M459.5 231.5V243.5H465.5V251.5M465.5 251.5H477.5V261.5H484.5M465.5 251.5V271.5H456.5V285.5M456.5 285.5H477.5V291.5H488.5M456.5 285.5L456.5 312.5M456.5 312.5L460.7 314.0L468.5 315.5L475.4 317.2L482.5 318.5M456.5 312.5L458.5 316.9L457.5 322.2L459.4 328.6L461.5 334.5M461.5 334.5L469.2 334.6L471.0 337.1L474.8 338.9L482.5 339.5M461.5 334.5L461.9 340.4L464.0 346.6L459.1 352.0L461.5 360.5M461.5 360.5L470.9 359.0L479.9 357.3L484.9 358.6L494.5 357.5M461.5 360.5L460.5 369.0L462.2 374.4L461.9 378.6L461.5 386.5M461.5 386.5L484.5 386.5M461.5 386.5V395.5H462.5V407.5M462.5 407.5L469.0 405.7L475.0 409.4L477.6 405.1L485.5 407.5M462.5 407.5L463.5 434.5M463.5 434.5H477.5V443.5H493.5M463.5 434.5L467.5 465.5M467.5 465.5L472.1 466.4L478.3 463.5L480.8 461.5L486.5 461.5M460.5 487.5H475.5V482.5H489.5M460.5 487.5L459.9 496.8L461.4 503.6L460.8 511.2L462.5 516.5M462.5 516.5H471.5V519.5H481.5M464.5 542.5H473.5V538.5H485.5M464.5 542.5V555.5H460.5V570.5M460.5 570.5H475.5V570.5H494.5M460.5 570.5L459.7 578.3L462.1 580.9L464.5 586.7L465.5 593.5M465.5 593.5H480.5V584.5H487.5M465.5 593.5V606.5H459.5V613.5M459.5 613.5H473.5V619.5H485.5M459.5 613.5V626.5H461.5V644.5M461.5 644.5L471.2 640.8L477.8 639.8L487.4 636.9L493.5 634.5M461.5 644.5L461.5 664.5M461.5 664.5H482.5V661.5H492.5M461.5 664.5V682.5H460.5V694.5M460.5 694.5H475.5V684.5H487.5M460.5 694.5V698.5H458.5V707.5M458.5 707.5L493.5 720.5M458.5 707.5L464.5 744.5M464.5 744.5H472.5V740.5H483.5M464.5 765.5L483.5 769.5M464.5 765.5V773.5H464.5V786.5M464.5 786.5L466.4 785.9L471.4 786.8L477.4 781.8L481.5 783.5M464.5 786.5V800.5H462.5V807.5M462.5 807.5L467.3 810.7L475.8 810.3L485.6 810.8L491.5 811.5M482.5 5.5H505.5V11.5H520.5M482.5 5.5V23.5H488.5V32.5M488.5 32.5H504.5V28.5H517.5M488.5 32.5L486.1 42.1L486.6 46.9L483.5 56.2L481.5 64.5M481.5 64.5L517.5 68.5M481.5 64.5L481.1 72.3L487.4 76.4L484.9 81.8L488.5 86.5M488.5 86.5H498.5V84.5H514.5M488.5 86.5L485.5 116.5M485.5 116.5L493.2 115.8L498.7 115.0L505.8 115.4L511.5 115.5M485.5 116.5V126.5H484.5V139.5M484.5 139.5H497.5V141.5H517.5M484.5 139.5V158.5H493.5V180.5M493.5 180.5H505.5V170.5H510.5M493.5 180.5L490.5 207.5M490.5 207.5H505.5V206.5H517.5M490.5 207.5V217.5H486.5V234.5M486.5 234.5L495.7 232.8L501.3 232.7L506.8 231.9L513.5 232.5M486.5 234.5L484.5 261.5M484.5 261.5H508.5V259.5H520.5M484.5 261.5L488.5 291.5M488.5 291.5H502.5V283.5H511.5M488.5 291.5V310.5H482.5V318.5M482.5 318.5L520.5 316.5M482.5 318.5L482.4 325.0L480.2 329.9L484.3 333.8L482.5 339.5M482.5 339.5L489.8 341.1L496.9 338.1L504.4 341.5L511.5 340.5M482.5 339.5V350.5H494.5V357.5M494.5 357.5L509.5 370.5M494.5 357.5V374.5H484.5V386.5M484.5 386.5H495.5V389.5H514.5M484.5 386.5L485.5 407.5M485.5 407.5L488.4 418.6L487.8 423.7L493.2 432.1L493.5 443.5M493.5 443.5H508.5V435.5H516.5M493.5 443.5V449.5H486.5V461.5M486.5 461.5L492.6 463.7L496.8 464.3L506.9 465.7L511.5 468.5M486.5 461.5V475.5H489.5V482.5M489.5 482.5H498.5V485.5H509.5M489.5 482.5L481.5 519.5M485.5 538.5L490.1 541.0L496.8 540.2L504.3 536.9L511.5 539.5M485.5 538.5V559.5H494.5V570.5M494.5 570.5L498.2 568.0L501.4 569.0L507.9 571.1L510.5 569.5M487.5 584.5H502.5V582.5H521.5M487.5 584.5V605.5H485.5V619.5M485.5 619.5H495.5V617.5H514.5M485.5 619.5V626.5H493.5V634.5M493.5 634.5V653.5H492.5V661.5M492.5 661.5H504.5V659.5H514.5M492.5 661.5L491.3 668.4L489.2 675.2L490.0 680.3L487.5 684.5M487.5 684.5L515.5 691.5M487.5 684.5L493.5 720.5M493.5 720.5L513.5 716.5M493.5 720.5V730.5H483.5V740.5M483.5 740.5L518.5 739.5M483.5 740.5V757.5H483.5V769.5M483.5 769.5H494.5V768.5H515.5M481.5 783.5L481.9 789.6L485.6 795.4L488.4 803.8L491.5 811.5M491.5 811.5H502.5V809.5H521.5M520.5 11.5V19.5H517.5V28.5M517.5 28.5H525.5V30.5H538.5M517.5 28.5L517.5 68.5M517.5 68.5L536.5 65.5M517.5 68.5V76.5H514.5V84.5M514.5 84.5H523.5V94.5H541.5M514.5 84.5L511.5 115.5M511.5 115.5H525.5V117.5H533.5M511.5 115.5V125.5H517.5V141.5M517.5 141.5H526.5V147.5H533.5M517.5 141.5L510.5 170.5M510.5 170.5H518.5V167.5H536.5M510.5 170.5V183.5H517.5V206.5M517.5 206.5H530.5V205.5H538.5M517.5 206.5V222.5H513.5V232.5M513.5 232.5H521.5V235.5H538.5M513.5 232.5L520.5 259.5M520.5 259.5H527.5V253.5H532.5M520.5 259.5V272.5H511.5V283.5M511.5 283.5L530.5 285.5M520.5 316.5L519.7 321.0L514.5 330.2L513.4 332.1L511.5 340.5M511.5 340.5H520.5V343.5H533.5M509.5 370.5L531.5 369.5M509.5 370.5L510.2 375.6L512.9 381.1L511.8 385.6L514.5 389.5M514.5 389.5H528.5V389.5H537.5M514.5 389.5V395.5H515.5V407.5M515.5 407.5H527.5V410.5H541.5M516.5 435.5H521.5V436.5H532.5M516.5 435.5V453.5H511.5V468.5M511.5 468.5H518.5V461.5H530.5M511.5 468.5L510.0 471.8L509.4 477.2L510.3 479.4L509.5 485.5M509.5 485.5L515.6 487.3L522.4 485.5L529.1 490.3L538.5 489.5M509.5 485.5V496.5H518.5V510.5M518.5 510.5H527.5V515.5H533.5M518.5 510.5V525.5H511.5V539.5M511.5 539.5L531.5 543.5M511.5 539.5V557.5H510.5V569.5M510.5 569.5L517.7 567.9L519.1 562.8L528.7 564.5L532.5 560.5M510.5 569.5L521.5 582.5M521.5 582.5H528.5V591.5H532.5M521.5 582.5V595.5H514.5V617.5M514.5 617.5H523.5V618.5H541.5M513.5 645.5L517.0 645.6L522.3 641.5L527.6 639.8L530.5 637.5M513.5 645.5V654.5H514.5V659.5M514.5 659.5H529.5V660.5H535.5M514.5 659.5L513.1 666.8L515.7 674.3L517.7 686.0L515.5 691.5M515.5 691.5L521.4 690.6L531.3 686.8L536.8 685.5L543.5 682.5M515.5 691.5V700.5H513.5V716.5M513.5 716.5L521.0 715.6L523.3 716.6L529.1 716.0L536.5 717.5M513.5 716.5L512.8 720.6L515.9 728.1L515.6 734.6L518.5 739.5M518.5 739.5L543.5 734.5M515.5 768.5H526.5V767.5H536.5M515.5 768.5V775.5H517.5V789.5M517.5 789.5L519.6 787.2L526.5 787.8L528.2 785.2L530.5 785.5M521.5 809.5H528.5V808.5H542.5M540.5 1.5H547.5V3.5H557.5M540.5 1.5V12.5H538.5V30.5M538.5 30.5L557.5 28.5M538.5 30.5V48.5H536.5V65.5M536.5 65.5L538.4 65.3L543.6 69.5L548.2 66.7L552.5 68.5M536.5 65.5V76.5H541.5V94.5M541.5 94.5L546.0 92.9L549.7 95.4L556.2 92.6L562.5 93.5M541.5 94.5L533.5 117.5M533.5 117.5H547.5V114.5H555.5M533.5 117.5V129.5H533.5V147.5M533.5 147.5H543.5V142.5H559.5M536.5 167.5H549.5V180.5H558.5M538.5 205.5H544.5V199.5H557.5M538.5 205.5L540.8 211.1L539.3 221.4L536.1 230.0L538.5 235.5M538.5 235.5H555.5V231.5H565.5M538.5 235.5L534.8 240.6L533.7 246.1L535.4 249.7L532.5 253.5M532.5 253.5L552.5 256.5M532.5 253.5L531.3 259.1L534.0 267.3L528.7 278.0L530.5 285.5M530.5 285.5V294.5H536.5V313.5M536.5 313.5H545.5V316.5H556.5M536.5 313.5L533.5 343.5M531.5 369.5L538.1 367.8L548.0 365.6L557.7 363.6L564.5 363.5M531.5 369.5L533.6 372.4L532.6 381.0L538.3 383.2L537.5 389.5M537.5 389.5L544.3 388.7L546.0 389.3L553.5 391.8L557.5 393.5M537.5 389.5V401.5H541.5V410.5M541.5 410.5H550.5V417.5H557.5M532.5 436.5L536.0 434.9L545.0 434.4L551.5 438.4L555.5 436.5M532.5 436.5L532.7 445.1L531.5 448.3L532.9 454.1L530.5 461.5M530.5 461.5V479.5H538.5V489.5M538.5 489.5H547.5V484.5H554.5M533.5 515.5L539.8 516.1L544.0 513.9L548.4 514.6L555.5 513.5M533.5 515.5L530.7 523.8L530.8 531.3L533.6 535.8L531.5 543.5M531.5 543.5H541.5V538.5H556.5M532.5 560.5H542.5V566.5H565.5M532.5 560.5V576.5H532.5V591.5M532.5 591.5L564.5 584.5M532.5 591.5L541.5 618.5M541.5 618.5H547.5V608.5H557.5M541.5 618.5V626.5H530.5V637.5M530.5 637.5H543.5V637.5H561.5M530.5 637.5V652.5H535.5V660.5M535.5 660.5H542.5V657.5H555.5M543.5 682.5L544.0 682.2L548.9 683.8L552.8 685.1L554.5 685.5M543.5 682.5V697.5H536.5V717.5M536.5 717.5H546.5V719.5H557.5M536.5 717.5V723.5H543.5V734.5M543.5 734.5L550.6 735.2L551.5 735.6L557.7 734.2L562.5 735.5M543.5 734.5V748.5H536.5V767.5M536.5 767.5H550.5V759.5H557.5M536.5 767.5L534.9 770.8L532.8 776.5L531.0 781.1L530.5 785.5M530.5 785.5H542.5V787.5H565.5M530.5 785.5V800.5H542.5V808.5M542.5 808.5L562.5 817.5M557.5 3.5H576.5V0.5H586.5M557.5 3.5V11.5H557.5V28.5M557.5 28.5L564.9 27.9L569.7 31.5L573.5 31.2L578.5 32.5M557.5 28.5V55.5H552.5V68.5M552.5 68.5V80.5H562.5V93.5M562.5 93.5V102.5H555.5V114.5M555.5 114.5L562.8 114.4L568.6 113.9L572.5 112.1L581.5 111.5M555.5 114.5L558.1 120.1L559.6 130.8L559.1 137.1L559.5 142.5M559.5 142.5H567.5V142.5H579.5M559.5 142.5L558.5 180.5M558.5 180.5L574.5 169.5M558.5 180.5V186.5H557.5V199.5M557.5 199.5L561.3 206.5L559.1 217.3L565.7 223.0L565.5 231.5M565.5 231.5H574.5V228.5H578.5M565.5 231.5L552.5 256.5M552.5 256.5H563.5V252.5H581.5M552.5 256.5L561.5 279.5M561.5 279.5H570.5V282.5H583.5M561.5 279.5V295.5H556.5V316.5M556.5 316.5L584.5 316.5M556.5 316.5V330.5H564.5V340.5M564.5 340.5V351.5H564.5V363.5M564.5 363.5H571.5V366.5H577.5M564.5 363.5V382.5H557.5V393.5M557.5 393.5L563.8 393.2L570.6 392.9L572.1 390.2L579.5 387.5M557.5 393.5V403.5H557.5V417.5M557.5 417.5H568.5V410.5H586.5M557.5 417.5L557.0 422.5L557.7 427.5L553.9 431.5L555.5 436.5M555.5 436.5H571.5V436.5H578.5M555.5 436.5V451.5H554.5V464.5M554.5 464.5H565.5V457.5H577.5M554.5 464.5L554.5 484.5M554.5 484.5L574.5 490.5M554.5 484.5L555.5 513.5M555.5 513.5L559.6 513.4L569.2 515.1L575.1 519.7L581.5 518.5M555.5 513.5L556.1 518.5L558.4 525.4L553.9 531.9L556.5 538.5M556.5 538.5H571.5V536.5H587.5M556.5 538.5L565.5 566.5M565.5 566.5H574.5V569.5H583.5M565.5 566.5V577.5H564.5V584.5M564.5 584.5L577.5 591.5M564.5 584.5L561.1 591.5L563.4 598.1L557.0 601.4L557.5 608.5M557.5 608.5L565.9 612.4L571.3 614.7L578.2 617.7L583.5 620.5M557.5 608.5V622.5H561.5V637.5M561.5 637.5H574.5V635.5H586.5M555.5 657.5L563.3 659.7L571.3 658.7L576.2 658.1L582.5 658.5M555.5 657.5L554.4 666.0L555.2 671.2L554.8 679.5L554.5 685.5M554.5 685.5L579.5 687.5M554.5 685.5V695.5H557.5V719.5M557.5 719.5H566.5V712.5H574.5M557.5 719.5V729.5H562.5V735.5M562.5 735.5L578.5 738.5M562.5 735.5V745.5H557.5V759.5M557.5 759.5L560.6 757.7L566.5 760.6L574.9 758.1L577.5 759.5M557.5 759.5L565.5 787.5M565.5 787.5L571.5 788.5L571.2 790.4L578.0 785.8L579.5 788.5M562.5 817.5H569.5V816.5H576.5M586.5 0.5L589.2 -1.6L594.9 -0.3L594.6 1.5L599.5 0.5M586.5 0.5L584.2 6.6L584.8 17.5L578.3 26.5L578.5 32.5M578.5 32.5L600.5 32.5M578.5 32.5V47.5H575.5V67.5M575.5 67.5L598.5 63.5M578.5 93.5L587.6 92.9L591.7 90.9L601.2 89.4L605.5 90.5M578.5 93.5L581.5 111.5M581.5 111.5H593.5V111.5H605.5M581.5 111.5V121.5H579.5V142.5M579.5 142.5H588.5V144.5H601.5M579.5 142.5L576.8 149.5L574.7 156.3L575.0 164.8L574.5 169.5M574.5 169.5H588.5V172.5H596.5M574.5 169.5V182.5H582.5V195.5M582.5 195.5H589.5V201.5H596.5M582.5 195.5V209.5H578.5V228.5M578.5 228.5H593.5V229.5H604.5M578.5 228.5L579.7 235.6L582.2 240.8L581.7 246.8L581.5 252.5M581.5 252.5L600.5 254.5M581.5 252.5V270.5H583.5V282.5M583.5 282.5L596.5 283.5M583.5 282.5V304.5H584.5V316.5M584.5 316.5V325.5H576.5V334.5M576.5 334.5L599.5 341.5M576.5 334.5L577.1 342.8L575.6 349.4L576.0 360.9L577.5 366.5M577.5 366.5H585.5V363.5H598.5M577.5 366.5L577.0 369.8L579.4 378.2L579.7 383.3L579.5 387.5M579.5 387.5H594.5V395.5H604.5M579.5 387.5V397.5H586.5V410.5M578.5 436.5L609.5 442.5M578.5 436.5L577.5 457.5M577.5 457.5H595.5V465.5H604.5M577.5 457.5L574.5 490.5M574.5 490.5H584.5V487.5H601.5M574.5 490.5V502.5H581.5V518.5M581.5 518.5L599.5 518.5M581.5 518.5V528.5H587.5V536.5M587.5 536.5V549.5H583.5V569.5M583.5 569.5L590.8 565.1L597.2 564.0L602.6 560.6L608.5 557.5M583.5 569.5V580.5H577.5V591.5M577.5 591.5L597.5 589.5M583.5 620.5H594.5V612.5H600.5M583.5 620.5L586.5 635.5M586.5 635.5V642.5H582.5V658.5M582.5 658.5H591.5V660.5H598.5M582.5 658.5L579.7 664.3L582.2 671.6L578.3 681.0L579.5 687.5M574.5 712.5L577.5 711.3L585.9 713.7L592.7 711.7L596.5 714.5M574.5 712.5V728.5H578.5V738.5M578.5 738.5H592.5V735.5H601.5M577.5 759.5L582.7 761.9L590.2 763.0L596.7 764.5L602.5 766.5M577.5 759.5L578.7 769.1L580.6 775.5L577.1 781.3L579.5 788.5M579.5 788.5L587.5 787.5L589.1 791.3L599.9 789.2L603.5 790.5M579.5 788.5V801.5H576.5V816.5M576.5 816.5L585.3 816.3L590.0 817.3L599.2 818.1L603.5 818.5M600.5 32.5L604.1 34.2L612.1 33.9L617.4 38.7L622.5 39.5M600.5 32.5V46.5H598.5V63.5M598.5 63.5H614.5V65.5H622.5M598.5 63.5V80.5H605.5V90.5M605.5 90.5L610.5 91.2L615.6 89.3L624.1 89.9L627.5 92.5M605.5 90.5L605.5 111.5M605.5 111.5L631.5 122.5M605.5 111.5V127.5H601.5V144.5M601.5 144.5L608.2 146.8L609.4 148.5L613.5 146.6L620.5 147.5M601.5 144.5V155.5H596.5V172.5M596.5 201.5L623.5 198.5M596.5 201.5V216.5H604.5V229.5M604.5 229.5H618.5V230.5H628.5M604.5 229.5V237.5H600.5V254.5M600.5 254.5H607.5V254.5H621.5M600.5 254.5V264.5H596.5V283.5M596.5 283.5V293.5H608.5V314.5M608.5 314.5H614.5V308.5H625.5M608.5 314.5L599.5 341.5M599.5 341.5L597.1 349.0L600.3 351.2L600.4 356.3L598.5 363.5M598.5 363.5H609.5V366.5H619.5M598.5 363.5V376.5H604.5V395.5M604.5 395.5H613.5V388.5H619.5M604.5 395.5V406.5H601.5V415.5M601.5 415.5H614.5V413.5H628.5M601.5 415.5L603.3 422.8L604.3 431.2L608.2 437.3L609.5 442.5M609.5 442.5L613.3 443.2L616.3 442.4L619.2 443.1L620.5 444.5M609.5 442.5V453.5H604.5V465.5M604.5 465.5H614.5V457.5H630.5M604.5 465.5L604.7 471.9L604.1 477.0L600.5 482.2L601.5 487.5M601.5 487.5H611.5V489.5H621.5M599.5 518.5L607.6 514.7L614.7 517.9L622.8 513.0L629.5 512.5M608.5 537.5L628.5 535.5M608.5 537.5L608.3 542.7L607.6 549.3L606.6 554.9L608.5 557.5M608.5 557.5H619.5V561.5H628.5M608.5 557.5L603.5 567.3L601.0 575.4L602.0 582.9L597.5 589.5M597.5 589.5H610.5V592.5H622.5M597.5 589.5L599.7 593.8L598.7 599.0L600.6 607.7L600.5 612.5M600.5 612.5L609.6 612.4L617.0 614.4L619.8 614.9L629.5 618.5M600.5 612.5V626.5H609.5V634.5M609.5 634.5H619.5V637.5H625.5M609.5 634.5V642.5H598.5V660.5M598.5 660.5H612.5V665.5H627.5M598.5 660.5V668.5H605.5V685.5M605.5 685.5H619.5V693.5H629.5M605.5 685.5L604.5 691.4L599.6 700.1L601.2 709.6L596.5 714.5M596.5 714.5L601.2 713.3L606.9 716.0L613.2 712.8L619.5 712.5M596.5 714.5L601.5 735.5M601.5 735.5L627.5 735.5M601.5 735.5V745.5H602.5V766.5M602.5 766.5L620.5 757.5M602.5 766.5V780.5H603.5V790.5M603.5 790.5L611.6 793.5L612.7 794.4L622.2 795.7L626.5 795.5M603.5 790.5V806.5H603.5V818.5M603.5 818.5H620.5V808.5H631.5M631.5 3.5H641.5V4.5H649.5M631.5 3.5L622.5 39.5M622.5 39.5H634.5V32.5H648.5M622.5 39.5V48.5H622.5V65.5M622.5 65.5L653.5 68.5M622.5 65.5L627.5 92.5M627.5 92.5H636.5V92.5H640.5M631.5 122.5L636.3 118.8L635.8 115.3L640.9 114.6L641.5 111.5M631.5 122.5L630.7 128.8L626.2 134.7L622.4 143.6L620.5 147.5M620.5 147.5H628.5V149.5H644.5M620.5 147.5V160.5H624.5V174.5M624.5 174.5H635.5V168.5H653.5M624.5 174.5V182.5H623.5V198.5M623.5 198.5L626.8 199.5L633.6 195.6L640.6 195.6L644.5 195.5M623.5 198.5V210.5H628.5V230.5M628.5 230.5V243.5H621.5V254.5M621.5 254.5H636.5V255.5H645.5M621.5 254.5V271.5H622.5V281.5M622.5 281.5H640.5V290.5H651.5M622.5 281.5V300.5H625.5V308.5M625.5 308.5H634.5V312.5H643.5M625.5 308.5V320.5H618.5V332.5M618.5 332.5H632.5V342.5H648.5M618.5 332.5L619.5 366.5M619.5 366.5H636.5V362.5H653.5M619.5 366.5V381.5H619.5V388.5M619.5 388.5L649.5 389.5M619.5 388.5V399.5H628.5V413.5M628.5 413.5H643.5V409.5H651.5M628.5 413.5V433.5H620.5V444.5M620.5 444.5L627.3 441.8L630.5 439.5L636.2 437.1L642.5 433.5M620.5 444.5L630.5 457.5M630.5 457.5H639.5V460.5H653.5M630.5 457.5L630.2 465.2L623.8 471.4L621.5 481.7L621.5 489.5M621.5 489.5H638.5V483.5H646.5M621.5 489.5V503.5H629.5V512.5M629.5 512.5H639.5V507.5H644.5M629.5 512.5L628.5 535.5M628.5 535.5L635.5 533.0L638.3 535.5L645.1 535.3L647.5 534.5M628.5 535.5V549.5H628.5V561.5M628.5 561.5H642.5V560.5H648.5M628.5 561.5V579.5H622.5V592.5M622.5 592.5L643.5 588.5M622.5 592.5L623.8 601.5L628.1 604.0L627.1 611.9L629.5 618.5M629.5 618.5L634.5 614.7L638.2 616.1L641.1 611.3L645.5 610.5M629.5 618.5L626.6 621.8L626.5 628.9L627.7 633.0L625.5 637.5M625.5 637.5H630.5V632.5H640.5M627.5 665.5L652.5 661.5M627.5 665.5V675.5H629.5V693.5M629.5 693.5L632.8 690.4L633.6 687.9L639.8 685.1L641.5 684.5M619.5 712.5H627.5V720.5H646.5M619.5 712.5V725.5H627.5V735.5M627.5 735.5H635.5V744.5H642.5M627.5 735.5L627.5 738.7L622.9 748.2L620.7 750.2L620.5 757.5M620.5 757.5L646.5 762.5M626.5 795.5H634.5V787.5H651.5M626.5 795.5V804.5H631.5V808.5M631.5 808.5H635.5V814.5H640.5M649.5 4.5H656.5V7.5H671.5M649.5 4.5V13.5H648.5V32.5M653.5 68.5H664.5V68.5H674.5M653.5 68.5V84.5H640.5V92.5M640.5 92.5L643.0 96.3L643.5 102.0L642.1 104.7L641.5 111.5M641.5 111.5L647.8 114.4L656.5 112.8L666.1 112.1L672.5 113.5M641.5 111.5L643.6 120.1L642.2 130.9L643.5 139.9L644.5 149.5M644.5 149.5L647.2 146.1L651.6 145.6L656.5 145.7L662.5 141.5M644.5 149.5V161.5H653.5V168.5M653.5 168.5H657.5V168.5H663.5M653.5 168.5V186.5H644.5V195.5M644.5 195.5H655.5V205.5H667.5M644.5 195.5V207.5H647.5V229.5M647.5 229.5L651.6 232.2L657.6 229.3L661.1 229.1L666.5 230.5M647.5 229.5V242.5H645.5V255.5M645.5 255.5H650.5V253.5H662.5M651.5 290.5L659.4 286.7L661.9 286.4L668.5 282.3L675.5 279.5M651.5 290.5L649.2 294.5L646.0 303.6L647.5 306.1L643.5 312.5M643.5 312.5H654.5V318.5H669.5M643.5 312.5L648.5 342.5M648.5 342.5H661.5V342.5H673.5M648.5 342.5V354.5H653.5V362.5M653.5 362.5H662.5V368.5H667.5M653.5 362.5L654.6 367.6L652.8 377.4L649.7 384.8L649.5 389.5M649.5 389.5H666.5V392.5H673.5M649.5 389.5L651.5 409.5M651.5 409.5L657.4 410.3L664.7 410.1L670.8 407.3L675.5 408.5M651.5 409.5L650.5 413.9L647.2 419.1L647.1 428.2L642.5 433.5M642.5 433.5L649.8 434.8L660.4 437.3L669.7 437.3L675.5 437.5M642.5 433.5V443.5H653.5V460.5M653.5 460.5L671.5 460.5M646.5 483.5H661.5V482.5H674.5M646.5 483.5V498.5H644.5V507.5M644.5 507.5L646.3 515.2L644.2 520.3L648.0 526.3L647.5 534.5M647.5 534.5H654.5V537.5H667.5M647.5 534.5V544.5H648.5V560.5M648.5 560.5H658.5V568.5H671.5M648.5 560.5V573.5H643.5V588.5M643.5 588.5H651.5V590.5H667.5M643.5 588.5V599.5H645.5V610.5M645.5 610.5L653.1 611.5L653.9 609.0L659.6 612.4L666.5 610.5M645.5 610.5L645.6 617.7L642.6 621.1L641.0 627.8L640.5 632.5M640.5 632.5L648.7 635.2L658.0 633.4L665.6 634.2L674.5 636.5M652.5 661.5H657.5V661.5H663.5M652.5 661.5V674.5H641.5V684.5M641.5 684.5H654.5V684.5H672.5M641.5 684.5L646.5 720.5M646.5 720.5L672.5 714.5M646.5 720.5L642.5 744.5M642.5 744.5H656.5V734.5H671.5M642.5 744.5V751.5H646.5V762.5M646.5 762.5L653.1 763.8L655.5 759.5L659.5 758.6L663.5 759.5M646.5 762.5L647.1 767.9L650.9 774.7L648.1 782.1L651.5 787.5M651.5 787.5H661.5V788.5H666.5M651.5 787.5V801.5H640.5V814.5M640.5 814.5H651.5V814.5H662.5M671.5 7.5V28.5H665.5V40.5M674.5 68.5L686.5 67.5M674.5 68.5L674.1 75.8L670.0 83.7L671.5 86.7L668.5 94.5M668.5 94.5H676.5V93.5H688.5M668.5 94.5V100.5H672.5V113.5M672.5 113.5L677.8 113.9L678.1 117.1L684.3 123.3L685.5 124.5M672.5 113.5V129.5H662.5V141.5M662.5 141.5H676.5V152.5H690.5M662.5 141.5V151.5H663.5V168.5M663.5 168.5H679.5V172.5H687.5M663.5 168.5V189.5H667.5V205.5M667.5 205.5L673.7 205.6L681.4 203.7L688.5 198.4L693.5 197.5M667.5 205.5V219.5H666.5V230.5M666.5 230.5H675.5V232.5H687.5M666.5 230.5L666.6 235.5L662.6 242.6L664.1 248.0L662.5 253.5M662.5 253.5L697.5 255.5M662.5 253.5L667.9 260.3L669.1 265.0L671.4 272.3L675.5 279.5M675.5 279.5H679.5V284.5H686.5M675.5 279.5L673.7 290.8L673.6 301.1L673.1 306.8L669.5 318.5M669.5 318.5L697.5 309.5M669.5 318.5V325.5H673.5V342.5M673.5 342.5L692.5 337.5M673.5 342.5V350.5H667.5V368.5M667.5 368.5L693.5 359.5M667.5 368.5L668.3 374.1L671.2 382.7L669.8 386.1L673.5 392.5M673.5 392.5L678.9 391.9L680.6 392.1L688.1 396.0L692.5 394.5M673.5 392.5L673.4 397.8L676.9 400.4L675.7 404.7L675.5 408.5M675.5 408.5L695.5 415.5M675.5 408.5V427.5H675.5V437.5M675.5 437.5H681.5V439.5H691.5M675.5 437.5L675.4 443.9L675.8 448.3L671.4 455.4L671.5 460.5M671.5 460.5L674.5 482.5M674.5 482.5H685.5V488.5H693.5M674.5 482.5L674.9 491.0L671.0 495.9L669.8 505.1L670.5 510.5M670.5 510.5L676.5 512.2L681.8 509.9L690.0 513.4L693.5 512.5M670.5 510.5L668.3 515.9L666.8 524.8L669.8 529.6L667.5 537.5M667.5 537.5H676.5V535.5H689.5M667.5 537.5V550.5H671.5V568.5M671.5 568.5L692.5 565.5M671.5 568.5V576.5H667.5V590.5M667.5 590.5L674.3 586.8L678.4 588.3L683.2 585.7L691.5 582.5M667.5 590.5L666.3 596.7L669.1 600.8L667.4 606.0L666.5 610.5M674.5 636.5H680.5V640.5H692.5M674.5 636.5V650.5H663.5V661.5M663.5 661.5H676.5V659.5H697.5M663.5 661.5L667.1 665.7L667.7 671.1L668.6 678.0L672.5 684.5M672.5 684.5L690.5 695.5M672.5 684.5V694.5H672.5V714.5M672.5 714.5H686.5V711.5H694.5M672.5 714.5V721.5H671.5V734.5M671.5 734.5H684.5V745.5H694.5M671.5 734.5V748.5H663.5V759.5M663.5 759.5H680.5V769.5H689.5M663.5 759.5L666.4 766.0L663.1 773.7L667.8 782.1L666.5 788.5M666.5 788.5L672.8 790.1L676.7 793.9L680.4 795.2L685.5 795.5M666.5 788.5L667.2 793.2L662.9 801.9L662.7 807.0L662.5 814.5M662.5 814.5H682.5V810.5H690.5M689.5 3.5H702.5V8.5H717.5M689.5 3.5V17.5H691.5V40.5M691.5 40.5H707.5V38.5H719.5M691.5 40.5V58.5H686.5V67.5M686.5 67.5L694.8 64.7L700.2 64.7L710.7 63.6L717.5 62.5M686.5 67.5V85.5H688.5V93.5M688.5 93.5H707.5V83.5H719.5M685.5 124.5H706.5V120.5H718.5M685.5 124.5V135.5H690.5V152.5M690.5 152.5H696.5V150.5H709.5M690.5 152.5L687.5 172.5M687.5 172.5H698.5V174.5H712.5M693.5 197.5H704.5V197.5H718.5M693.5 197.5L694.5 208.6L691.0 217.1L689.5 222.3L687.5 232.5M687.5 232.5H702.5V232.5H709.5M687.5 232.5V245.5H697.5V255.5M697.5 255.5L698.2 256.7L700.5 256.6L704.3 257.0L707.5 258.5M697.5 255.5V265.5H686.5V284.5M686.5 284.5H704.5V285.5H717.5M686.5 284.5V292.5H697.5V309.5M697.5 309.5L709.5 318.5M697.5 309.5V323.5H692.5V337.5M692.5 337.5H703.5V342.5H717.5M692.5 337.5V348.5H693.5V359.5M693.5 359.5H704.5V369.5H713.5M693.5 359.5V377.5H692.5V394.5M692.5 394.5L697.8 393.1L705.5 387.0L710.4 388.3L717.5 384.5M692.5 394.5L695.1 401.9L695.3 404.6L694.6 408.2L695.5 415.5M695.5 415.5H705.5V408.5H711.5M695.5 415.5L695.8 421.2L694.2 426.8L690.1 433.6L691.5 439.5M691.5 439.5H701.5V436.5H706.5M691.5 439.5V450.5H685.5V468.5M685.5 468.5H696.5V468.5H718.5M685.5 468.5L693.5 488.5M693.5 488.5H699.5V484.5H707.5M693.5 488.5V501.5H693.5V512.5M693.5 512.5L699.3 512.9L701.1 515.8L707.4 518.9L711.5 518.5M693.5 512.5V523.5H689.5V535.5M689.5 535.5L693.9 537.2L700.1 540.9L709.7 542.9L714.5 544.5M689.5 535.5V544.5H692.5V565.5M692.5 565.5L694.8 567.8L697.7 566.2L705.9 567.8L707.5 570.5M692.5 565.5L691.5 582.5M691.5 582.5H699.5V590.5H708.5M691.5 582.5V601.5H692.5V613.5M692.5 613.5L698.9 613.2L704.3 613.6L713.1 616.5L718.5 617.5M692.5 613.5L692.5 640.5M692.5 640.5H698.5V641.5H708.5M692.5 640.5V650.5H697.5V659.5M697.5 659.5H707.5V657.5H712.5M697.5 659.5L695.8 670.7L694.5 679.7L691.6 685.0L690.5 695.5M690.5 695.5L710.5 686.5M690.5 695.5V705.5H694.5V711.5M694.5 711.5L699.0 709.9L706.7 712.8L708.1 708.9L714.5 710.5M694.5 711.5V734.5H694.5V745.5M694.5 745.5H700.5V741.5H714.5M694.5 745.5L691.4 752.5L692.1 759.1L692.8 765.4L689.5 769.5M689.5 769.5H700.5V758.5H708.5M689.5 769.5V779.5H685.5V795.5M685.5 795.5H702.5V788.5H715.5M717.5 8.5H725.5V7.5H741.5M717.5 8.5L719.5 38.5M719.5 38.5H724.5V29.5H733.5M719.5 38.5V54.5H717.5V62.5M717.5 62.5L741.5 64.5M717.5 62.5V73.5H719.5V83.5M719.5 83.5L738.5 88.5M719.5 83.5V107.5H718.5V120.5M718.5 120.5L732.5 116.5M718.5 120.5V132.5H709.5V150.5M709.5 150.5H723.5V147.5H730.5M709.5 150.5V161.5H712.5V174.5M712.5 174.5L717.7 177.0L722.3 178.2L729.9 177.0L733.5 178.5M718.5 197.5L718.1 204.9L715.8 214.0L713.4 223.1L709.5 232.5M709.5 232.5V240.5H707.5V258.5M707.5 258.5L712.7 261.1L719.6 259.6L724.9 261.2L732.5 260.5M707.5 258.5V276.5H717.5V285.5M717.5 285.5H725.5V287.5H731.5M717.5 285.5L709.5 318.5M709.5 318.5L716.1 320.6L718.8 317.1L725.9 317.5L731.5 319.5M709.5 318.5V329.5H717.5V342.5M717.5 342.5H724.5V343.5H732.5M717.5 342.5V353.5H713.5V369.5M713.5 369.5H725.5V363.5H737.5M713.5 369.5V378.5H717.5V384.5M717.5 384.5H725.5V387.5H741.5M717.5 384.5L711.5 408.5M711.5 408.5L718.7 411.0L724.7 411.8L731.6 415.0L738.5 415.5M711.5 408.5V422.5H706.5V436.5M706.5 436.5L713.0 437.8L719.1 436.6L725.1 435.1L734.5 432.5M706.5 436.5V451.5H718.5V468.5M718.5 468.5V478.5H707.5V484.5M707.5 484.5L716.7 488.8L719.8 489.1L728.0 494.0L734.5 495.5M711.5 518.5L717.3 519.1L723.9 519.0L725.6 515.6L732.5 516.5M711.5 518.5L714.5 544.5M714.5 544.5L737.5 535.5M714.5 544.5L714.6 553.4L711.4 558.0L707.6 565.8L707.5 570.5M707.5 570.5H724.5V558.5H733.5M707.5 570.5V578.5H708.5V590.5M708.5 590.5L718.5 617.5M718.5 617.5H726.5V611.5H733.5M718.5 617.5V630.5H708.5V641.5M708.5 641.5L739.5 643.5M708.5 641.5L709.9 644.2L710.9 650.3L710.3 653.3L712.5 657.5M712.5 657.5L718.2 657.8L725.6 662.5L729.1 660.3L736.5 664.5M712.5 657.5L710.5 686.5M710.5 686.5L729.5 694.5M710.5 686.5L709.1 692.0L710.2 700.7L715.9 705.6L714.5 710.5M714.5 710.5L716.4 713.4L721.4 711.1L723.3 709.9L729.5 712.5M714.5 741.5H725.5V742.5H733.5M714.5 741.5V751.5H708.5V758.5M708.5 758.5H721.5V761.5H737.5M708.5 758.5L710.6 763.7L710.7 772.8L715.6 781.6L715.5 788.5M715.5 788.5L720.7 792.6L729.0 793.9L733.7 791.9L740.5 795.5M715.5 788.5V801.5H707.5V808.5M707.5 808.5L728.5 815.5M741.5 7.5L742.9 5.6L747.1 3.8L752.9 3.1L756.5 4.5M741.5 7.5V15.5H733.5V29.5M733.5 29.5L756.5 31.5M733.5 29.5L733.9 37.9L739.5 44.9L738.9 54.5L741.5 64.5M741.5 64.5H752.5V63.5H759.5M741.5 64.5L738.5 88.5M738.5 88.5L744.1 91.9L748.8 94.9L756.0 95.7L763.5 96.5M738.5 88.5V102.5H732.5V116.5M732.5 116.5L738.8 114.2L748.2 116.9L756.5 117.6L763.5 116.5M732.5 116.5L730.5 147.5M730.5 147.5L735.8 146.7L744.5 149.9L752.6 147.7L761.5 148.5M730.5 147.5L729.4 155.1L733.3 162.3L731.4 170.8L733.5 178.5M733.5 178.5L741.6 177.7L744.3 178.9L750.6 181.7L759.5 180.5M733.5 201.5H742.5V201.5H750.5M733.5 201.5V220.5H735.5V236.5M735.5 236.5H742.5V232.5H755.5M735.5 236.5V246.5H732.5V260.5M732.5 260.5L753.5 264.5M732.5 260.5L731.5 287.5M731.5 287.5L752.5 284.5M731.5 287.5V299.5H731.5V319.5M731.5 319.5L736.3 319.4L742.7 317.6L744.8 315.9L752.5 312.5M731.5 319.5V334.5H732.5V343.5M732.5 343.5L760.5 333.5M732.5 343.5L737.5 363.5M737.5 363.5H745.5V366.5H752.5M737.5 363.5V379.5H741.5V387.5M741.5 387.5V404.5H738.5V415.5M738.5 415.5H748.5V418.5H753.5M738.5 415.5V426.5H734.5V432.5M734.5 432.5H748.5V442.5H760.5M734.5 495.5L750.5 494.5M734.5 495.5L735.8 502.4L734.0 507.7L734.3 513.4L732.5 516.5M732.5 516.5V524.5H737.5V535.5M737.5 535.5H742.5V536.5H750.5M737.5 535.5L733.5 558.5M733.5 558.5H741.5V564.5H757.5M733.5 558.5L740.5 585.5M740.5 585.5L744.8 587.3L745.7 590.6L747.1 590.7L751.5 593.5M740.5 585.5V595.5H733.5V611.5M733.5 611.5L738.3 610.3L744.1 611.9L749.9 615.5L754.5 614.5M733.5 611.5V631.5H739.5V643.5M739.5 643.5L741.7 644.6L743.3 643.9L749.6 638.3L751.5 639.5M739.5 643.5L740.9 646.7L738.6 655.8L738.1 661.4L736.5 664.5M736.5 664.5H741.5V658.5H751.5M736.5 664.5V684.5H729.5V694.5M729.5 694.5L728.1 699.1L727.6 704.1L727.7 707.6L729.5 712.5M729.5 712.5L760.5 710.5M729.5 712.5V724.5H733.5V742.5M733.5 742.5H745.5V732.5H755.5M733.5 742.5V751.5H737.5V761.5M737.5 761.5H742.5V763.5H753.5M737.5 761.5V772.5H740.5V795.5M740.5 795.5H748.5V788.5H757.5M740.5 795.5L735.3 799.5L734.5 804.2L733.8 809.7L728.5 815.5M728.5 815.5L761.5 808.5M756.5 4.5H769.5V1.5H783.5M756.5 31.5H766.5V34.5H785.5M759.5 63.5H767.5V63.5H777.5M759.5 63.5V83.5H763.5V96.5M763.5 96.5L763.5 116.5M763.5 116.5H771.5V111.5H777.5M763.5 116.5L761.5 148.5M761.5 148.5H769.5V150.5H774.5M761.5 148.5L761.8 158.6L758.3 163.0L761.3 173.1L759.5 180.5M759.5 180.5L782.5 176.5M759.5 180.5L750.5 201.5M750.5 201.5H764.5V202.5H774.5M750.5 201.5L750.8 210.7L753.5 215.8L755.7 226.8L755.5 232.5M755.5 232.5H763.5V224.5H772.5M755.5 232.5V245.5H753.5V264.5M753.5 264.5L776.5 264.5M753.5 264.5L751.0 269.4L752.6 275.6L754.7 277.0L752.5 284.5M752.5 284.5H761.5V290.5H781.5M752.5 284.5V303.5H752.5V312.5M752.5 312.5H764.5V312.5H772.5M752.5 312.5V321.5H760.5V333.5M760.5 333.5L773.5 335.5M760.5 333.5L756.8 342.9L757.0 351.1L754.3 355.9L752.5 366.5M752.5 366.5L756.0 366.4L762.5 366.2L767.2 368.5L773.5 369.5M758.5 392.5H766.5V388.5H776.5M758.5 392.5V407.5H753.5V418.5M753.5 418.5H762.5V419.5H781.5M753.5 418.5V432.5H760.5V442.5M760.5 442.5H775.5V439.5H785.5M760.5 442.5L757.6 446.9L755.5 452.2L755.2 460.3L751.5 463.5M751.5 463.5L760.2 463.0L765.3 464.1L773.8 470.0L779.5 469.5M751.5 463.5V480.5H750.5V494.5M750.5 494.5H763.5V486.5H777.5M750.5 494.5L755.7 498.6L757.2 506.8L759.7 511.7L763.5 519.5M763.5 519.5H774.5V510.5H782.5M763.5 519.5L750.5 536.5M750.5 536.5H760.5V538.5H777.5M750.5 536.5L757.5 564.5M757.5 564.5H769.5V562.5H778.5M757.5 564.5V574.5H751.5V593.5M751.5 593.5H764.5V588.5H778.5M751.5 593.5V601.5H754.5V614.5M754.5 614.5V622.5H751.5V639.5M751.5 639.5H758.5V639.5H772.5M751.5 639.5L752.8 643.5L752.2 648.2L752.4 656.2L751.5 658.5M751.5 658.5L760.0 658.2L763.2 660.6L772.6 662.1L779.5 662.5M751.5 658.5V675.5H757.5V686.5M757.5 686.5H764.5V683.5H775.5M757.5 686.5L760.5 710.5M760.5 710.5H769.5V711.5H777.5M760.5 710.5L756.9 717.0L758.1 721.8L758.5 725.0L755.5 732.5M755.5 732.5L778.5 735.5M755.5 732.5L753.9 741.6L755.2 746.2L752.2 755.0L753.5 763.5M753.5 763.5L763.0 763.8L766.0 763.3L777.5 761.4L782.5 763.5M753.5 763.5V777.5H757.5V788.5M757.5 788.5H763.5V787.5H772.5M757.5 788.5V801.5H761.5V808.5M761.5 808.5L769.6 805.9L773.5 806.5L778.9 806.5L785.5 807.5M783.5 1.5H796.5V12.5H802.5M783.5 1.5V19.5H785.5V34.5M785.5 34.5H791.5V35.5H799.5M785.5 34.5L777.5 63.5M777.5 63.5H789.5V59.5H799.5M784.5 96.5H790.5V91.5H802.5M784.5 96.5L777.5 111.5M777.5 111.5V129.5H774.5V150.5M774.5 150.5H790.5V149.5H801.5M774.5 150.5V160.5H782.5V176.5M782.5 176.5L786.8 173.7L790.5 170.1L790.5 168.7L794.5 168.5M782.5 176.5V190.5H774.5V202.5M774.5 202.5H788.5V198.5H797.5M774.5 202.5L772.5 224.5M772.5 224.5L780.4 227.4L788.0 226.5L798.7 226.9L805.5 228.5M772.5 224.5V251.5H776.5V264.5M776.5 264.5H787.5V256.5H806.5M776.5 264.5V274.5H781.5V290.5M781.5 290.5H790.5V288.5H798.5M781.5 290.5L772.5 312.5M772.5 312.5H783.5V320.5H795.5M772.5 312.5V327.5H773.5V335.5M773.5 335.5V358.5H773.5V369.5M773.5 369.5L781.3 366.8L785.9 368.1L793.9 366.6L798.5 368.5M773.5 369.5V379.5H776.5V388.5M776.5 388.5L805.5 390.5M781.5 419.5L784.1 419.5L787.6 419.7L793.6 418.8L794.5 417.5M781.5 419.5L782.7 426.5L782.6 429.0L785.5 435.0L785.5 439.5M785.5 439.5L786.4 437.7L789.7 440.1L793.4 439.7L794.5 440.5M785.5 439.5L779.5 469.5M779.5 469.5L777.5 486.5M777.5 486.5H792.5V482.5H802.5M777.5 486.5L782.5 510.5M782.5 510.5H793.5V517.5H807.5M782.5 510.5V526.5H777.5V538.5M777.5 538.5L781.3 538.0L788.5 534.9L798.6 532.0L802.5 532.5M777.5 538.5L778.5 562.5M778.5 562.5L785.1 562.3L792.2 564.1L796.2 561.8L804.5 562.5M778.5 562.5V571.5H778.5V588.5M778.5 588.5L803.5 595.5M778.5 588.5V601.5H772.5V618.5M772.5 618.5L770.4 621.9L773.7 628.3L773.3 632.6L772.5 639.5M772.5 639.5H783.5V638.5H804.5M772.5 639.5V650.5H779.5V662.5M779.5 662.5L804.5 662.5M779.5 662.5V673.5H775.5V683.5M775.5 683.5H788.5V688.5H800.5M775.5 683.5L776.0 688.4L776.2 695.5L774.9 706.3L777.5 711.5M778.5 735.5L785.0 735.1L790.6 736.4L797.8 736.1L804.5 733.5M778.5 735.5V751.5H782.5V763.5M782.5 763.5H787.5V768.5H795.5M782.5 763.5L778.2 771.2L777.3 776.6L773.9 783.5L772.5 787.5M772.5 787.5L803.5 789.5M772.5 787.5L774.7 794.7L779.5 798.7L782.5 803.8L785.5 807.5M785.5 807.5H791.5V808.5H795.5M802.5 12.5V21.5H799.5V35.5M799.5 35.5V42.5H799.5V59.5M799.5 59.5V78.5H802.5V91.5M798.5 117.5L801.2 127.8L799.7 135.3L800.4 141.3L801.5 149.5M801.5 149.5L798.5 153.3L797.7 156.6L797.8 161.3L794.5 168.5M794.5 168.5L797.5 198.5M797.5 198.5V210.5H805.5V228.5M805.5 228.5V239.5H806.5V256.5M806.5 256.5L798.5 288.5M798.5 288.5L796.3 297.1L794.6 305.8L798.4 310.3L795.5 320.5M805.5 336.5V352.5H798.5V368.5M798.5 368.5V375.5H805.5V390.5M805.5 390.5V399.5H794.5V417.5M794.5 417.5V424.5H794.5V440.5M794.5 440.5L801.5 469.5M801.5 469.5V477.5H802.5V482.5M802.5 482.5V493.5H807.5V517.5M807.5 517.5V525.5H802.5V532.5M802.5 532.5L804.5 562.5M803.5 595.5V603.5H806.5V608.5M806.5 608.5L804.5 638.5M804.5 638.5V648.5H804.5V662.5M800.5 688.5V704.5H795.5V711.5M795.5 711.5L797.1 715.8L799.1 724.7L802.2 729.1L804.5 733.5M804.5 733.5V756.5H795.5V768.5M803.5 789.5V800.5H795.5V808.5" fill="none" stroke="#5f6468" stroke-width="1" shape-rendering="crispEdges"/>
<polygon points="6.0,705.0 20.0,699.0 29.5,700.0 28.0,708.0 45.0,705.0 48.0,707.0 45.0,715.0 50.6,716.6 52.0,725.0 60.5,725.0 70.3,728.0 73.0,733.0 76.0,739.0 67.0,742.0 72.0,749.0 80.0,753.0 86.0,760.0 145.0,760.0 150.0,722.0 159.0,724.0 170.0,733.0 184.0,747.0 200.0,753.0 214.0,756.0 236.0,762.0 228.7,750.8 221.3,743.4 206.5,740.5 199.1,731.6 184.3,722.8 191.7,716.8 206.5,706.5 219.8,688.8 214.0,683.0 205.0,677.0 203.5,681.4 199.0,687.3 188.8,694.7 177.0,685.0 177.0,680.0 184.3,677.0 196.0,668.0 206.5,666.6 214.0,657.7 219.8,653.3 240.5,646.5 253.4,644.0 261.2,650.4 279.0,651.0 288.5,648.0 300.8,651.7 306.9,632.0 311.8,622.1 319.2,623.4 321.7,645.5 334.0,660.3 343.8,659.0 356.1,651.7 361.0,644.3 356.1,634.4 363.5,646.7 369.0,649.0 375.8,636.0 388.1,630.8 386.0,640.0 393.0,644.3 397.9,645.5 410.0,646.7 418.5,647.8 436.9,649.7 461.5,658.3 486.1,674.3 498.0,683.0 508.3,690.3 511.0,700.0 515.6,710.0 526.4,711.4 534.8,718.4 544.7,707.2 558.7,701.5 570.0,694.5 578.4,687.5 586.9,684.7 592.5,676.2 599.5,673.4 612.2,674.8 620.6,680.5 630.4,687.5 640.0,693.0 643.5,703.9 656.7,712.7 661.0,725.9 672.2,738.3 682.0,750.9 682.0,756.6 697.5,758.0 705.9,769.2 710.1,781.9 714.4,790.3 716.0,806.0 6.0,806.0" fill="#004466" stroke="#000" stroke-width="1.2"/>
<polygon points="806.0,565.0 802.0,573.0 801.0,620.0 802.0,657.0 806.0,662.0" fill="#004466" stroke="#000" stroke-width="1.2"/>
<polygon points="418.5,642.3 429.5,637.4 436.9,643.5 446.7,639.8 454.1,642.3 455.4,648.5 446.7,647.2 436.9,648.5 424.6,647.8" fill="#004466" stroke="#000" stroke-width="1"/>
<polygon points="473.8,655.8 481.2,654.6 486.1,660.8 496.0,652.1 498.4,654.6 488.6,664.4 486.1,670.6 480.0,664.4 475.0,662.0" fill="#004466" stroke="#000" stroke-width="1"/>
<polygon points="493.5,671.8 500.9,673.0 508.3,679.2 503.3,681.7 496.0,678.0" fill="#004466" stroke="#000" stroke-width="1"/>
<polygon points="505.8,694.0 510.7,696.4 515.6,708.7 510.7,711.2 507.0,703.8" fill="#004466" stroke="#000" stroke-width="1"/>
<path d="M161.3 717.2h1.3v1.7h-1.3zM172.6 733.2h1.0v0.9h-1.0zM195.9 756.0h0.8v1.6h-0.8zM194.3 758.5h2.5v0.9h-2.5zM142.6 715.7h1.5v1.2h-1.5zM177.1 737.2h1.6v1.7h-1.6zM164.2 729.2h1.7v1.4h-1.7zM152.7 713.8h2.0v1.2h-2.0zM214.6 753.6h1.4v2.2h-1.4zM195.8 748.4h2.4v2.1h-2.4zM161.9 726.5h2.4v1.8h-2.4zM186.4 746.5h2.3v1.6h-2.3zM155.2 722.1h2.1v1.5h-2.1zM169.6 737.3h1.8v1.5h-1.8zM179.4 740.6h2.1v2.7h-2.1zM182.4 747.5h1.8v2.7h-1.8zM190.0 749.9h1.2v1.8h-1.2zM206.9 752.8h1.3v1.8h-1.3zM216.8 754.9h2.4v2.5h-2.4zM196.1 746.7h1.9v1.6h-1.9zM155.8 715.7h1.2v1.8h-1.2zM176.1 742.7h1.8v2.0h-1.8zM184.6 747.1h1.2v1.1h-1.2zM187.6 740.9h2.3v2.4h-2.3zM168.1 723.5h1.0v0.8h-1.0zM150.0 714.7h1.0v2.0h-1.0zM172.3 733.3h1.8v1.1h-1.8zM165.4 725.0h1.4v1.7h-1.4zM147.7 720.1h1.2v1.0h-1.2zM203.9 754.1h2.0v2.4h-2.0zM152.3 717.8h2.2v1.1h-2.2zM190.1 745.7h1.2v2.7h-1.2zM196.2 752.1h2.0v1.6h-2.0zM181.0 749.7h0.9v1.4h-0.9zM213.6 752.6h2.4v1.4h-2.4zM209.2 750.9h1.3v0.8h-1.3zM210.9 755.6h2.6v1.9h-2.6zM166.6 716.7h2.1v1.8h-2.1zM170.9 736.2h2.1v1.6h-2.1zM165.7 728.0h1.4v1.7h-1.4zM174.6 726.0h0.8v1.2h-0.8zM175.6 731.0h1.4v1.2h-1.4zM194.1 741.8h1.5v2.5h-1.5zM180.6 750.1h1.2v2.2h-1.2zM158.3 726.8h1.2v2.2h-1.2zM186.3 743.7h1.4v1.4h-1.4zM196.9 748.7h2.5v1.1h-2.5zM182.5 744.4h0.9v2.4h-0.9zM199.5 749.3h2.0v2.3h-2.0zM170.0 733.2h1.0v1.3h-1.0zM198.2 751.0h1.7v1.3h-1.7zM198.1 751.6h2.1v1.0h-2.1zM157.4 720.6h1.3v2.7h-1.3zM176.2 738.1h1.3v2.2h-1.3zM158.7 719.0h2.6v2.5h-2.6zM167.4 733.8h1.0v2.0h-1.0zM161.5 719.0h1.4v1.9h-1.4zM175.7 739.4h2.5v2.6h-2.5zM213.5 756.3h2.0v2.7h-2.0zM179.4 738.6h1.3v1.8h-1.3zM168.3 732.0h1.3v2.7h-1.3zM173.2 734.0h2.6v1.5h-2.6zM166.9 733.2h2.4v2.5h-2.4zM165.8 734.1h1.9v1.9h-1.9zM167.2 727.7h0.9v1.8h-0.9zM158.1 721.8h1.4v2.3h-1.4zM179.9 739.1h1.8v2.3h-1.8zM156.1 719.1h2.3v2.7h-2.3zM199.6 754.6h1.8v2.5h-1.8zM169.0 728.6h2.5v0.9h-2.5zM174.0 727.3h2.5v2.4h-2.5zM194.1 748.8h1.6v1.1h-1.6zM191.4 747.6h0.9v2.6h-0.9zM195.2 751.4h2.4v1.7h-2.4zM171.8 737.6h0.8v2.0h-0.8zM173.3 735.9h1.5v1.1h-1.5zM156.9 728.3h1.6v1.6h-1.6zM185.4 747.3h1.8v1.8h-1.8zM183.0 749.9h2.2v1.3h-2.2zM176.2 741.1h1.6v1.9h-1.6zM209.3 752.9h2.0v0.9h-2.0zM146.5 719.1h1.1v2.3h-1.1zM202.9 759.1h2.4v1.5h-2.4zM191.3 744.8h2.4v2.5h-2.4zM209.0 753.7h1.3v1.2h-1.3zM182.8 743.7h2.1v2.2h-2.1zM168.5 732.4h2.2v0.9h-2.2zM214.3 750.3h1.3v2.5h-1.3zM214.7 759.3h2.4v2.1h-2.4zM184.2 752.2h2.6v1.5h-2.6zM197.1 753.4h1.4v1.0h-1.4zM208.7 753.9h1.9v1.6h-1.9zM156.1 724.0h2.2v0.8h-2.2zM160.7 724.9h2.0v2.0h-2.0zM202.1 756.3h1.8v1.3h-1.8zM183.6 751.1h2.3v2.3h-2.3zM208.1 753.7h2.4v2.3h-2.4zM180.7 746.8h1.0v2.3h-1.0zM156.7 717.0h2.6v2.2h-2.6zM214.6 757.9h1.9v1.4h-1.9zM176.5 744.5h0.8v1.6h-0.8zM175.0 741.6h2.3v2.1h-2.3zM176.5 737.9h1.2v0.8h-1.2zM160.7 724.8h2.4v1.8h-2.4zM206.5 756.5h1.6v2.2h-1.6zM212.3 756.9h2.0v1.8h-2.0zM174.7 733.4h1.6v1.6h-1.6zM198.4 751.0h2.5v2.2h-2.5zM178.4 735.6h2.0v2.0h-2.0zM170.5 732.3h2.6v2.3h-2.6zM202.8 747.4h2.0v1.5h-2.0zM163.9 721.5h1.8v1.1h-1.8zM197.3 753.8h0.9v1.8h-0.9zM191.9 752.3h2.0v0.8h-2.0zM184.4 739.6h1.6v2.1h-1.6zM185.4 748.9h2.5v1.3h-2.5zM156.0 716.0h1.5v1.8h-1.5zM196.8 755.0h2.2v2.3h-2.2zM164.1 727.0h1.9v1.1h-1.9zM200.2 749.8h1.2v2.6h-1.2zM192.6 748.9h2.5v2.0h-2.5zM163.5 733.4h2.3v1.2h-2.3zM191.1 755.4h1.6v2.5h-1.6zM191.5 748.6h1.8v1.1h-1.8zM157.5 719.0h2.2v1.3h-2.2zM192.3 747.1h1.0v1.6h-1.0zM180.4 741.9h0.9v1.9h-0.9zM205.6 755.1h2.1v2.3h-2.1zM208.8 752.6h2.4v1.0h-2.4zM194.0 751.2h1.7v1.5h-1.7zM160.8 730.0h1.7v1.9h-1.7zM162.0 722.7h1.9v2.5h-1.9zM219.6 756.7h2.4v1.4h-2.4zM165.7 730.8h1.6v2.5h-1.6zM200.3 757.6h0.8v1.1h-0.8zM192.3 749.6h1.0v1.7h-1.0zM202.4 753.1h0.9v2.4h-0.9zM151.5 720.2h1.0v0.9h-1.0zM187.0 742.3h2.4v2.1h-2.4zM166.6 728.2h2.0v1.3h-2.0zM157.2 717.3h1.5v2.0h-1.5zM181.0 744.2h1.5v1.6h-1.5zM164.6 722.6h2.1v2.2h-2.1zM193.7 745.0h1.3v2.7h-1.3zM165.0 719.3h2.4v0.9h-2.4zM156.5 716.7h1.5v2.7h-1.5zM147.9 717.6h1.0v1.6h-1.0zM192.8 749.2h1.8v1.0h-1.8zM199.6 752.9h1.5v2.2h-1.5zM172.9 735.3h2.3v2.4h-2.3zM165.8 731.5h1.9v1.4h-1.9zM172.0 723.6h1.9v1.0h-1.9zM178.4 751.4h2.2v2.4h-2.2zM184.5 747.8h2.4v1.4h-2.4zM156.5 726.1h1.0v1.5h-1.0zM189.2 746.9h2.0v1.4h-2.0zM165.9 732.5h2.2v1.8h-2.2zM185.0 748.7h1.4v1.4h-1.4zM157.5 719.0h2.5v2.6h-2.5zM214.9 747.5h2.6v2.3h-2.6zM153.4 721.4h2.7v2.3h-2.7zM191.8 746.2h2.6v2.0h-2.6zM164.1 737.8h1.8v1.1h-1.8zM157.1 718.4h2.5v1.2h-2.5zM173.9 735.0h1.0v1.8h-1.0zM168.0 730.1h2.0v1.8h-2.0zM160.3 722.9h2.0v1.1h-2.0zM206.6 754.4h2.4v2.1h-2.4zM170.6 726.3h2.4v2.5h-2.4zM172.9 733.0h2.6v2.3h-2.6zM198.3 738.8h1.3v1.2h-1.3zM195.5 746.7h1.7v1.6h-1.7zM206.3 749.6h0.9v2.4h-0.9zM177.8 741.5h2.1v0.8h-2.1zM154.6 728.4h2.2v2.6h-2.2zM177.3 741.5h1.8v1.8h-1.8zM203.6 752.0h2.0v1.4h-2.0zM163.3 730.1h1.8v2.7h-1.8zM152.4 714.7h2.2v1.9h-2.2zM165.0 738.5h2.5v2.1h-2.5zM212.2 751.1h1.5v1.7h-1.5zM194.5 756.5h1.7v1.4h-1.7zM179.0 740.8h1.6v0.8h-1.6zM159.9 730.6h1.9v1.3h-1.9zM213.6 759.2h2.2v2.1h-2.2zM176.0 733.4h2.2v1.7h-2.2zM211.5 753.3h1.0v2.6h-1.0zM166.3 727.0h1.7v2.6h-1.7zM172.3 728.9h1.0v2.0h-1.0zM209.6 753.6h1.5v2.6h-1.5zM215.2 757.4h1.6v2.1h-1.6zM156.6 724.3h1.7v2.3h-1.7zM204.2 748.8h1.0v1.5h-1.0zM188.2 752.5h2.5v1.0h-2.5zM205.4 756.0h2.5v1.2h-2.5zM173.8 745.8h2.7v1.3h-2.7zM182.0 737.9h1.2v2.2h-1.2zM169.6 732.1h2.7v2.0h-2.7zM211.0 753.9h1.8v1.6h-1.8zM197.3 749.2h1.3v2.1h-1.3zM175.7 737.8h1.9v1.9h-1.9zM206.2 753.7h1.1v1.6h-1.1zM165.8 726.5h1.2v1.5h-1.2zM174.8 743.5h1.1v2.5h-1.1zM190.0 749.0h1.4v2.1h-1.4zM190.5 741.0h1.4v1.7h-1.4zM171.0 733.0h1.3v1.0h-1.3zM179.8 738.9h2.1v1.2h-2.1zM155.3 722.1h1.6v0.8h-1.6zM148.6 722.1h1.0v1.2h-1.0zM193.4 748.6h1.9v1.8h-1.9zM149.5 719.4h1.3v2.3h-1.3zM191.6 749.3h2.2v1.0h-2.2zM168.8 732.1h0.9v1.1h-0.9zM178.0 733.5h1.3v2.1h-1.3zM163.2 728.5h2.6v1.5h-2.6zM194.8 747.3h2.0v2.5h-2.0zM171.7 731.4h1.8v1.9h-1.8zM175.0 747.6h2.0v1.8h-2.0zM150.4 718.8h1.2v1.6h-1.2zM181.5 746.3h1.8v1.7h-1.8zM176.4 737.7h2.0v1.8h-2.0zM184.5 738.8h2.1v0.9h-2.1zM167.5 728.7h2.5v1.1h-2.5zM206.1 760.6h2.4v1.4h-2.4zM209.0 759.9h1.5v1.6h-1.5zM154.6 719.8h2.1v2.3h-2.1zM193.4 747.0h2.5v2.0h-2.5zM165.7 731.6h1.7v2.3h-1.7zM177.2 750.3h1.6v2.0h-1.6zM151.5 719.1h2.1v0.8h-2.1zM153.2 719.7h1.8v1.5h-1.8zM173.8 727.9h2.0v2.3h-2.0zM200.4 759.4h1.3v1.9h-1.3zM174.5 738.3h2.5v1.4h-2.5zM201.8 758.3h2.7v2.3h-2.7zM149.5 720.3h1.4v2.4h-1.4zM174.2 733.1h1.8v0.9h-1.8zM191.4 747.3h2.0v1.7h-2.0zM167.9 723.0h0.8v2.5h-0.8zM173.7 732.7h2.2v1.0h-2.2zM175.0 731.0h2.3v1.7h-2.3zM171.4 739.7h2.2v1.2h-2.2zM171.3 736.6h2.6v2.4h-2.6zM157.8 723.8h0.8v0.9h-0.8zM161.5 719.1h2.3v1.3h-2.3zM165.8 721.8h2.6v0.8h-2.6zM169.5 731.1h2.5v1.8h-2.5zM179.3 735.2h2.7v2.5h-2.7zM187.5 750.5h2.3v2.6h-2.3zM213.0 758.8h1.8v1.6h-1.8zM203.6 750.1h2.1v2.1h-2.1zM185.7 747.5h2.3v1.0h-2.3zM184.2 750.7h2.0v1.7h-2.0zM212.3 755.4h2.6v1.4h-2.6zM162.5 731.4h2.7v2.1h-2.7zM165.2 730.2h1.8v1.6h-1.8zM157.3 725.6h1.2v2.4h-1.2zM173.9 737.0h2.4v2.3h-2.4zM185.7 744.0h1.1v1.3h-1.1zM189.4 719.6h1.0v2.4h-1.0zM197.8 708.4h2.0v2.0h-2.0zM209.7 708.8h1.5v2.2h-1.5zM191.0 720.2h1.6v1.3h-1.6zM231.9 676.8h1.4v1.5h-1.4zM186.1 716.4h1.2v0.8h-1.2zM220.6 695.5h2.7v2.1h-2.7zM228.2 679.7h2.2v2.5h-2.2zM199.0 708.8h2.7v2.6h-2.7zM223.4 676.7h1.7v1.8h-1.7zM215.2 698.4h2.4v1.5h-2.4zM195.2 714.2h1.9v2.5h-1.9zM197.3 711.2h1.4v2.1h-1.4zM225.8 681.5h2.5v1.4h-2.5zM186.8 715.6h1.8v2.0h-1.8zM206.1 708.1h1.8v2.6h-1.8zM212.1 710.6h2.2v2.5h-2.2zM222.2 683.3h2.0v1.3h-2.0zM222.4 685.3h1.8v2.4h-1.8zM222.5 695.7h1.6v2.2h-1.6zM226.0 677.6h2.1v1.0h-2.1zM194.6 721.0h0.8v1.3h-0.8zM196.8 716.4h2.1v1.5h-2.1zM229.5 676.3h0.9v1.5h-0.9zM205.9 704.9h1.4v0.9h-1.4zM213.3 691.8h2.5v2.2h-2.5zM191.5 711.7h1.2v2.1h-1.2zM221.3 694.1h2.5v1.0h-2.5zM203.5 708.5h1.1v2.6h-1.1zM216.7 685.9h0.8v1.9h-0.8zM225.0 682.2h1.1v1.0h-1.1zM193.4 707.0h2.6v2.7h-2.6zM218.0 688.0h1.9v2.0h-1.9zM195.3 710.8h1.6v1.8h-1.6zM232.5 675.2h1.0v2.2h-1.0zM222.7 688.9h1.2v1.2h-1.2zM206.4 702.9h2.0v1.2h-2.0zM196.8 716.4h1.6v1.8h-1.6zM211.4 706.6h1.8v1.1h-1.8zM226.8 675.6h1.8v2.6h-1.8zM203.4 717.8h1.5v0.8h-1.5zM204.9 711.5h2.4v2.1h-2.4zM224.2 676.1h1.7v1.2h-1.7zM210.1 707.1h1.5v2.6h-1.5zM226.2 675.7h1.9v1.5h-1.9zM212.1 695.1h1.0v1.0h-1.0zM229.4 673.9h2.6v2.1h-2.6zM224.1 669.5h2.2v1.7h-2.2zM209.3 695.5h1.3v1.8h-1.3zM218.4 697.8h2.6v2.4h-2.6zM219.1 695.1h1.3v1.6h-1.3zM207.2 706.7h2.4v1.0h-2.4zM218.5 693.5h1.6v0.9h-1.6zM235.3 671.5h2.0v1.0h-2.0zM219.3 696.4h2.1v1.6h-2.1zM213.5 705.5h2.6v2.2h-2.6zM219.2 678.7h1.3v2.5h-1.3zM211.0 695.1h2.7v2.3h-2.7zM210.4 708.3h0.9v1.9h-0.9zM193.7 721.1h1.7v1.6h-1.7zM206.6 708.0h1.7v2.6h-1.7zM217.1 686.4h2.2v2.4h-2.2zM218.2 683.8h2.1v2.7h-2.1zM209.4 707.9h2.2v2.5h-2.2zM204.4 707.5h2.6v2.2h-2.6zM213.3 701.9h1.0v2.3h-1.0zM199.9 718.8h1.9v1.2h-1.9zM199.4 718.1h1.6v1.3h-1.6zM205.4 705.0h2.6v0.9h-2.6zM221.0 674.9h2.1v2.2h-2.1zM209.5 697.0h1.3v1.8h-1.3zM233.6 678.8h1.1v2.2h-1.1zM191.9 716.6h2.3v2.4h-2.3zM226.2 684.9h1.7v1.4h-1.7zM218.6 670.9h1.5v1.8h-1.5zM207.6 697.8h1.4v2.0h-1.4zM202.6 698.1h0.9v2.4h-0.9zM213.9 685.2h2.0v1.5h-2.0zM198.6 718.4h1.5v1.8h-1.5zM195.0 710.3h1.4v1.2h-1.4zM212.6 702.0h2.6v1.0h-2.6zM192.3 717.1h1.4v0.9h-1.4zM214.4 702.6h1.4v2.5h-1.4zM184.4 720.6h2.6v1.4h-2.6zM225.6 682.1h2.1v1.5h-2.1zM217.1 690.7h2.3v2.0h-2.3zM216.1 692.6h2.5v2.6h-2.5zM206.9 692.1h2.2v2.2h-2.2zM198.5 713.7h2.7v1.4h-2.7zM203.7 703.8h1.6v1.1h-1.6zM185.3 723.8h2.5v1.2h-2.5zM188.6 721.0h1.5v1.5h-1.5zM195.0 713.8h1.6v1.8h-1.6zM222.7 683.8h1.3v2.0h-1.3zM219.9 690.8h1.0v1.1h-1.0zM221.8 689.6h1.3v1.5h-1.3zM220.8 693.2h1.4v1.5h-1.4zM199.8 713.4h2.4v1.6h-2.4zM200.5 716.6h2.4v1.4h-2.4zM194.7 710.0h2.7v1.5h-2.7zM209.1 697.3h2.4v1.9h-2.4zM195.9 702.8h2.7v2.4h-2.7zM208.2 701.2h0.9v1.0h-0.9zM192.8 728.6h2.1v2.5h-2.1zM223.6 685.0h0.8v1.0h-0.8zM217.5 695.3h2.1v1.0h-2.1zM186.6 719.7h2.5v1.3h-2.5zM209.3 699.3h1.8v0.9h-1.8zM228.5 681.5h1.8v2.1h-1.8zM195.0 720.2h1.1v1.0h-1.1zM225.4 681.3h1.2v1.5h-1.2zM211.0 700.4h2.2v1.8h-2.2zM191.0 720.0h2.4v2.0h-2.4zM219.2 688.1h1.6v1.6h-1.6zM216.7 688.8h1.9v1.7h-1.9zM220.2 678.1h1.2v2.1h-1.2zM200.9 709.2h1.8v1.2h-1.8zM217.1 682.1h2.0v2.2h-2.0zM200.0 710.3h2.3v2.4h-2.3zM193.3 714.4h1.2v1.0h-1.2zM202.4 706.9h2.6v2.7h-2.6zM187.6 718.3h1.2v2.4h-1.2zM199.9 718.6h1.9v1.6h-1.9zM213.1 692.3h2.1v1.0h-2.1zM200.1 718.8h1.2v1.4h-1.2zM205.3 706.1h2.6v1.2h-2.6zM195.1 706.1h1.7v1.7h-1.7zM213.6 693.5h1.2v1.7h-1.2zM217.1 685.7h1.4v1.1h-1.4zM208.3 704.3h2.0v2.1h-2.0zM190.1 713.8h1.2v2.4h-1.2zM226.5 691.2h1.2v1.4h-1.2zM217.5 698.0h1.5v1.6h-1.5zM214.1 696.2h1.9v1.1h-1.9zM220.6 680.0h0.9v1.9h-0.9zM187.3 714.5h2.3v2.5h-2.3zM220.5 692.3h2.6v1.2h-2.6zM205.0 706.4h2.1v1.8h-2.1zM221.1 688.5h2.1v1.1h-2.1zM202.3 709.8h2.6v1.5h-2.6zM209.6 701.6h1.2v1.8h-1.2zM203.3 719.6h2.1v0.9h-2.1zM197.1 713.1h1.0v1.8h-1.0zM210.9 696.9h2.1v2.2h-2.1zM225.8 687.1h1.0v1.1h-1.0zM212.2 690.5h2.0v2.6h-2.0zM223.7 679.1h2.1v1.6h-2.1zM221.8 687.3h1.7v2.6h-1.7zM211.4 701.1h2.0v1.0h-2.0zM190.6 720.5h2.0v2.3h-2.0zM180.6 716.8h0.8v1.4h-0.8zM200.0 715.5h2.7v2.2h-2.7zM197.2 718.4h2.0v1.6h-2.0zM214.4 694.5h0.9v1.9h-0.9zM190.4 715.2h1.4v2.5h-1.4zM227.5 683.3h2.5v1.6h-2.5zM194.5 721.5h0.9v1.2h-0.9zM226.4 684.8h1.8v1.3h-1.8zM208.6 709.8h1.8v1.6h-1.8zM193.1 721.3h1.7v1.5h-1.7zM182.9 718.7h1.6v1.6h-1.6zM190.1 714.3h1.1v1.9h-1.1zM223.9 681.8h2.1v2.7h-2.1zM202.0 706.4h1.6v1.7h-1.6zM213.3 699.8h2.2v2.6h-2.2zM194.2 713.9h1.4v2.4h-1.4zM182.4 719.3h2.1v1.3h-2.1zM195.6 716.3h1.7v2.1h-1.7zM204.1 703.0h2.6v2.2h-2.6zM205.2 696.6h2.2v2.0h-2.2zM192.0 723.8h2.0v1.7h-2.0zM191.7 719.6h2.0v2.3h-2.0zM197.0 715.3h1.5v1.1h-1.5zM200.9 705.4h1.7v2.7h-1.7zM188.3 718.9h1.9v1.6h-1.9zM206.0 699.7h2.1v2.1h-2.1zM218.8 697.0h1.0v2.6h-1.0zM210.9 689.9h1.1v2.4h-1.1zM222.2 694.6h1.6v2.5h-1.6zM213.4 698.6h0.9v1.7h-0.9zM204.0 711.7h1.7v2.5h-1.7zM191.5 716.7h1.9v1.2h-1.9zM207.8 709.7h2.4v1.9h-2.4zM196.8 711.7h1.8v1.9h-1.8zM226.9 678.2h1.1v1.3h-1.1zM195.0 711.4h1.9v1.3h-1.9zM188.6 713.6h1.1v1.6h-1.1zM210.0 701.6h1.2v2.1h-1.2zM192.7 714.1h2.3v1.1h-2.3zM221.6 685.5h1.0v2.3h-1.0zM223.7 688.7h2.4v0.8h-2.4zM190.2 721.5h1.7v1.0h-1.7zM191.3 726.6h2.5v1.7h-2.5zM190.0 721.1h1.7v0.9h-1.7zM188.6 712.9h1.3v0.9h-1.3zM192.4 721.2h1.0v1.9h-1.0zM212.4 700.2h1.4v2.3h-1.4zM224.3 688.1h2.0v2.3h-2.0zM205.7 706.1h2.6v0.9h-2.6zM230.2 684.8h1.8v2.6h-1.8zM192.5 719.3h1.5v2.6h-1.5zM201.4 716.0h0.8v0.8h-0.8zM203.2 700.0h2.2v1.1h-2.2zM205.3 710.7h1.7v1.4h-1.7zM219.3 670.3h1.0v2.4h-1.0zM186.3 723.7h1.1v1.4h-1.1zM211.6 701.1h1.0v2.6h-1.0zM208.3 701.9h1.4v1.0h-1.4zM218.6 686.0h2.0v2.4h-2.0zM222.3 689.8h1.5v1.2h-1.5zM187.5 719.1h2.1v1.5h-2.1zM214.0 694.1h1.3v1.8h-1.3zM197.1 721.7h2.2v1.1h-2.2zM198.9 704.3h1.8v1.4h-1.8zM210.8 705.6h1.6v1.0h-1.6zM218.7 690.3h1.9v2.2h-1.9zM216.6 687.2h1.2v1.1h-1.2zM194.8 717.1h1.1v1.1h-1.1zM223.9 683.8h0.8v1.6h-0.8zM203.3 707.4h0.8v2.3h-0.8zM214.4 696.9h1.3v1.3h-1.3zM220.6 693.1h2.3v1.4h-2.3zM206.2 697.5h2.3v2.7h-2.3zM224.0 680.5h1.9v1.8h-1.9zM207.0 706.3h0.8v2.6h-0.8zM189.8 717.4h2.4v1.8h-2.4zM210.3 697.7h1.2v2.3h-1.2zM203.8 710.9h2.6v2.5h-2.6zM212.2 699.9h0.9v2.3h-0.9zM217.4 681.3h2.1v1.2h-2.1zM201.7 714.6h2.5v1.8h-2.5zM224.8 690.6h2.3v2.5h-2.3zM182.5 715.8h1.8v1.3h-1.8zM219.2 690.4h2.0v1.6h-2.0zM197.0 720.3h1.2v1.4h-1.2zM224.3 688.7h1.7v1.2h-1.7zM219.8 684.7h1.6v2.1h-1.6zM195.1 717.8h1.6v1.2h-1.6zM214.3 693.0h2.1v1.4h-2.1zM207.0 714.7h1.6v2.4h-1.6zM186.8 720.2h1.5v2.7h-1.5zM204.2 703.7h2.6v2.5h-2.6zM204.5 705.8h0.8v1.2h-0.8zM204.2 705.2h2.5v0.9h-2.5zM227.7 676.4h1.9v2.6h-1.9zM195.5 721.2h2.1v2.0h-2.1zM214.8 704.7h2.5v2.2h-2.5zM212.0 704.0h1.3v1.3h-1.3zM218.5 680.8h1.1v2.5h-1.1zM233.8 672.6h2.0v1.3h-2.0zM203.8 707.8h1.1v2.3h-1.1zM224.0 690.8h1.2v1.2h-1.2zM225.4 693.5h1.9v2.0h-1.9zM220.4 680.1h2.7v0.9h-2.7zM221.9 693.6h2.0v2.0h-2.0zM221.7 692.2h2.7v1.6h-2.7zM208.4 710.9h2.0v1.2h-2.0zM208.5 710.5h2.0v1.7h-2.0zM225.0 686.1h2.0v1.6h-2.0zM220.2 688.1h1.1v1.9h-1.1zM211.6 699.7h2.5v0.9h-2.5zM222.9 687.2h2.6v2.2h-2.6zM222.3 684.7h1.0v1.0h-1.0zM203.5 701.2h2.6v2.2h-2.6zM203.2 719.4h2.5v2.4h-2.5zM224.9 673.8h1.8v1.3h-1.8zM199.9 706.3h1.4v2.2h-1.4zM225.4 677.9h0.8v1.0h-0.8zM208.4 707.8h2.0v1.9h-2.0zM201.1 713.9h1.4v0.9h-1.4zM189.9 723.9h2.4v1.1h-2.4zM215.4 688.4h2.4v2.7h-2.4zM213.7 683.5h1.5v1.9h-1.5zM223.8 683.2h1.7v2.0h-1.7zM219.4 687.5h1.6v2.2h-1.6zM201.1 700.9h2.3v1.6h-2.3zM205.3 706.9h2.1v1.8h-2.1zM216.8 698.2h2.2v2.5h-2.2zM186.9 713.2h2.4v1.1h-2.4zM206.5 704.8h1.3v2.1h-1.3zM209.0 698.0h2.1v1.1h-2.1zM207.1 708.8h2.4v2.5h-2.4zM220.4 685.7h1.7v1.5h-1.7zM221.3 680.8h2.4v1.0h-2.4zM221.7 690.0h1.3v2.4h-1.3zM190.0 723.8h1.8v1.7h-1.8zM189.0 719.9h1.6v1.8h-1.6zM196.8 706.8h1.0v1.7h-1.0zM195.6 717.1h2.0v1.1h-2.0zM210.7 705.2h1.4v2.3h-1.4zM201.8 703.2h1.6v2.7h-1.6zM205.8 704.9h1.3v1.9h-1.3zM187.7 718.8h2.3v1.2h-2.3zM207.4 707.3h2.3v1.7h-2.3zM205.0 701.3h1.6v1.4h-1.6zM209.5 705.7h2.3v1.5h-2.3zM198.4 706.8h2.3v1.4h-2.3zM232.4 668.8h2.2v2.5h-2.2zM209.3 698.7h2.5v1.3h-2.5zM201.2 711.4h0.8v1.1h-0.8zM203.7 739.7h1.9v2.0h-1.9zM206.8 734.5h1.3v1.2h-1.3zM230.3 760.9h1.7v2.0h-1.7zM199.8 732.7h1.8v2.2h-1.8zM230.3 749.7h1.9v1.4h-1.9zM202.2 730.2h2.2v2.5h-2.2zM229.8 747.8h2.3v1.6h-2.3zM235.0 756.6h1.1v1.2h-1.1zM231.1 760.3h1.4v1.8h-1.4zM211.2 745.1h1.9v2.5h-1.9zM231.3 745.5h2.7v2.1h-2.7zM209.1 731.7h2.5v1.9h-2.5zM228.5 754.7h1.9v1.3h-1.9zM206.5 726.8h1.0v2.3h-1.0zM216.2 744.2h2.3v2.5h-2.3zM199.7 732.7h2.2v1.4h-2.2zM235.9 755.0h2.7v1.4h-2.7zM200.8 734.0h1.2v1.6h-1.2zM224.0 746.4h2.4v1.4h-2.4zM237.1 756.6h1.7v1.8h-1.7zM221.5 744.6h2.0v2.6h-2.0zM215.1 745.0h1.3v1.4h-1.3zM231.6 758.6h0.8v1.6h-0.8zM226.6 745.1h2.0v0.9h-2.0zM219.7 747.2h1.5v2.1h-1.5zM229.0 750.2h2.1v2.6h-2.1zM203.3 741.7h1.4v1.5h-1.4zM207.3 744.2h1.4v1.5h-1.4zM232.9 751.9h2.2v1.4h-2.2zM206.8 737.8h1.2v1.6h-1.2zM228.7 750.2h1.4v2.4h-1.4zM217.3 740.9h1.4v2.0h-1.4zM230.5 756.2h1.0v1.8h-1.0zM207.0 733.4h1.1v1.3h-1.1zM226.7 748.4h1.5v1.0h-1.5zM209.7 738.7h1.5v1.6h-1.5zM209.5 745.8h1.1v0.8h-1.1zM240.7 751.8h1.6v2.6h-1.6zM234.7 762.1h2.4v2.1h-2.4zM219.3 745.8h1.2v0.9h-1.2zM221.5 750.2h0.9v2.5h-0.9zM232.1 745.6h2.5v1.9h-2.5zM199.4 730.3h1.4v2.1h-1.4zM214.2 746.9h2.0v1.4h-2.0zM209.4 738.0h2.3v1.5h-2.3zM199.8 737.8h1.1v2.3h-1.1zM235.5 751.8h0.8v2.0h-0.8zM234.1 755.5h1.3v1.8h-1.3zM210.3 743.1h0.8v0.9h-0.8zM203.8 737.1h2.7v2.4h-2.7zM199.1 734.8h1.4v1.5h-1.4zM222.4 745.4h1.2v1.4h-1.2zM198.4 734.6h1.5v1.0h-1.5zM201.8 741.2h2.3v1.5h-2.3zM227.7 750.2h1.5v1.7h-1.5zM222.7 751.0h1.7v1.3h-1.7zM220.4 742.2h1.6v1.6h-1.6zM235.0 754.3h2.5v2.3h-2.5zM206.2 741.1h2.3v2.1h-2.3zM233.7 751.4h2.2v1.9h-2.2zM202.0 735.3h1.1v2.3h-1.1zM201.5 734.0h2.5v1.1h-2.5zM200.6 731.2h2.4v2.1h-2.4zM234.8 752.6h2.3v0.9h-2.3zM224.2 750.7h1.0v2.2h-1.0zM236.5 758.5h1.9v2.4h-1.9zM207.7 742.6h2.0v2.2h-2.0zM212.0 744.2h1.5v1.6h-1.5zM193.6 734.7h1.6v2.2h-1.6zM202.2 732.9h2.1v1.8h-2.1zM214.3 737.8h1.1v1.0h-1.1zM231.4 748.6h1.6v2.2h-1.6zM204.7 740.6h1.9v1.4h-1.9zM203.6 733.4h1.4v2.1h-1.4zM217.3 739.0h1.3v1.2h-1.3zM196.8 732.8h1.1v1.5h-1.1zM210.8 739.6h2.7v1.7h-2.7zM217.6 746.4h2.4v1.9h-2.4zM217.1 737.0h1.6v2.2h-1.6zM232.7 758.9h1.2v2.2h-1.2zM231.5 746.4h1.3v1.2h-1.3zM209.3 745.0h2.4v2.5h-2.4zM209.0 738.7h1.6v2.2h-1.6zM206.5 737.9h1.4v1.5h-1.4zM222.3 744.3h1.4v1.6h-1.4zM219.4 746.7h2.6v1.5h-2.6zM223.0 745.0h2.1v1.0h-2.1zM233.7 754.9h2.6v1.5h-2.6zM229.2 748.8h2.1v2.0h-2.1zM229.6 757.6h2.6v2.1h-2.6zM223.5 745.6h1.5v2.2h-1.5zM224.1 747.2h2.0v2.0h-2.0zM208.0 735.5h1.0v2.6h-1.0zM201.1 741.1h1.9v1.9h-1.9zM222.3 747.6h1.1v0.9h-1.1zM227.3 745.5h2.2v1.5h-2.2zM203.3 744.8h0.9v1.8h-0.9zM207.3 737.8h1.4v1.6h-1.4zM221.5 740.6h2.4v1.0h-2.4zM209.3 741.7h2.3v2.2h-2.3zM206.0 741.4h2.2v2.3h-2.2zM226.9 749.5h1.6v1.2h-1.6zM218.6 742.4h1.3v2.3h-1.3zM202.0 726.8h2.6v1.5h-2.6zM217.8 741.5h2.7v2.1h-2.7zM211.7 738.4h1.9v2.2h-1.9zM199.6 727.3h1.7v1.8h-1.7zM218.5 746.0h0.9v1.8h-0.9zM221.1 748.2h2.6v2.5h-2.6zM204.4 732.6h0.9v1.5h-0.9zM209.7 742.1h2.6v1.4h-2.6zM231.5 753.5h2.4v1.9h-2.4zM232.7 752.4h1.5v2.3h-1.5zM236.0 754.9h2.2v1.7h-2.2zM203.6 736.0h1.2v1.1h-1.2zM217.8 739.4h1.6v2.0h-1.6zM204.8 742.2h1.6v1.1h-1.6zM232.4 753.3h1.5v1.8h-1.5zM223.1 745.4h1.2v2.3h-1.2zM201.6 737.5h1.2v1.1h-1.2zM214.8 742.7h1.0v1.1h-1.0zM219.2 743.1h1.7v1.6h-1.7zM229.6 749.8h1.6v0.9h-1.6zM235.2 760.0h1.7v1.1h-1.7zM223.1 747.3h0.9v2.2h-0.9zM209.1 737.6h2.6v1.4h-2.6zM206.5 746.1h2.0v1.5h-2.0zM198.7 727.9h1.9v0.8h-1.9zM201.5 733.7h0.9v0.9h-0.9zM226.7 746.0h2.7v1.7h-2.7zM236.2 748.9h0.9v1.4h-0.9zM224.6 745.1h1.4v2.4h-1.4zM200.5 737.6h2.1v2.6h-2.1zM204.2 733.3h2.4v1.9h-2.4zM231.7 759.4h1.2v2.3h-1.2zM217.9 744.6h2.2v2.0h-2.2zM224.4 751.4h1.1v2.2h-1.1zM194.8 733.5h2.1v1.0h-2.1zM208.9 736.9h2.5v2.5h-2.5zM220.6 739.6h1.4v1.5h-1.4zM195.2 738.7h1.0v1.9h-1.0zM206.3 737.8h1.3v0.9h-1.3zM201.4 734.2h0.8v1.2h-0.8zM235.7 762.5h1.6v2.3h-1.6zM224.2 741.8h1.2v1.1h-1.2zM202.2 733.3h0.8v2.6h-0.8zM206.3 738.3h1.7v1.2h-1.7zM227.6 750.6h2.2v2.5h-2.2zM209.1 739.6h1.0v2.4h-1.0zM223.8 743.2h1.8v1.7h-1.8zM35.4 702.3h1.0v0.9h-1.0zM50.2 713.3h1.6v1.0h-1.6zM57.7 726.7h0.9v1.0h-0.9zM99.8 747.0h1.6v1.0h-1.6zM42.0 703.1h1.7v1.7h-1.7zM14.7 699.6h1.3v1.0h-1.3zM53.7 724.5h1.7v1.3h-1.7zM43.5 703.3h1.7v1.6h-1.7zM52.9 726.2h1.2v1.0h-1.2zM43.0 704.0h0.8v1.4h-0.8zM38.5 703.0h1.1v1.8h-1.1zM28.9 700.4h1.4v1.1h-1.4zM46.4 707.9h1.4v1.7h-1.4zM18.6 700.3h1.6v1.4h-1.6zM34.3 702.3h1.3v0.8h-1.3zM76.3 733.3h1.5v1.8h-1.5zM7.4 707.1h1.6v1.2h-1.6zM98.9 748.3h1.1v1.0h-1.1zM50.8 720.4h1.8v1.1h-1.8zM7.8 704.7h1.6v1.2h-1.6zM43.8 705.7h1.2v1.0h-1.2zM13.6 702.3h1.5v0.9h-1.5zM9.9 703.0h1.8v0.9h-1.8zM57.1 724.6h1.8v1.3h-1.8zM34.9 702.0h1.2v1.0h-1.2zM95.1 745.5h0.8v1.1h-0.8zM35.5 702.7h1.7v0.9h-1.7zM13.4 701.8h1.8v1.2h-1.8zM94.5 745.6h1.5v1.3h-1.5zM17.4 702.7h1.7v1.7h-1.7zM44.4 704.8h1.4v1.6h-1.4zM55.7 724.3h1.1v1.7h-1.1zM104.9 752.0h1.8v1.5h-1.8zM11.7 702.4h1.8v1.5h-1.8zM13.9 703.5h1.4v1.5h-1.4zM98.8 749.0h1.7v0.8h-1.7zM94.6 747.4h1.6v1.7h-1.6zM60.2 725.7h1.5v1.1h-1.5zM94.9 745.5h1.3v0.8h-1.3zM8.8 702.5h1.7v1.4h-1.7zM21.1 700.8h1.3v0.8h-1.3zM88.7 743.5h1.3v1.2h-1.3zM82.2 742.4h1.3v1.8h-1.3zM18.4 701.3h1.7v1.3h-1.7zM51.0 716.7h0.9v1.7h-0.9zM28.9 702.2h1.2v1.6h-1.2zM26.5 699.1h0.9v1.3h-0.9zM43.1 706.2h1.5v0.8h-1.5zM42.3 704.2h1.5v1.3h-1.5zM14.9 703.5h1.2v1.6h-1.2zM104.1 750.9h1.4v1.1h-1.4zM94.5 748.6h1.1v1.7h-1.1zM81.5 740.7h0.9v1.6h-0.9zM46.3 709.1h0.9v0.9h-0.9zM86.2 745.0h1.2v1.4h-1.2zM45.8 707.9h1.2v1.7h-1.2zM27.0 698.9h1.1v0.8h-1.1zM10.5 703.3h1.6v1.6h-1.6zM102.6 751.7h1.3v1.4h-1.3zM100.1 746.3h0.9v1.5h-0.9zM72.5 731.0h1.6v1.1h-1.6zM97.4 749.8h1.7v1.5h-1.7zM43.5 705.5h1.4v1.8h-1.4zM94.5 748.0h1.6v1.1h-1.6zM49.5 715.7h1.3v1.5h-1.3zM65.7 729.8h1.4v1.0h-1.4zM17.4 701.0h1.7v1.4h-1.7zM44.5 705.1h1.0v1.7h-1.0zM94.9 746.2h1.0v1.1h-1.0zM102.2 751.9h1.5v1.3h-1.5zM102.3 752.1h1.0v0.9h-1.0zM9.5 704.0h0.9v1.8h-0.9zM42.3 702.5h1.5v1.5h-1.5zM103.0 749.0h1.4v1.5h-1.4zM74.1 737.6h1.0v1.6h-1.0zM52.4 724.6h1.7v1.1h-1.7zM46.9 711.0h1.1v1.2h-1.1zM51.6 717.4h0.8v1.8h-0.8zM25.4 701.4h1.6v1.0h-1.6zM58.1 726.6h1.0v1.6h-1.0z" fill="#000"/>
<path d="M123.5 743.8h2.8v2.3h-2.8zM146.9 750.7h2.8v2.1h-2.8zM144.6 752.6h1.3v1.9h-1.3zM123.1 750.2h1.4v2.7h-1.4zM136.3 755.3h1.1v2.1h-1.1zM99.2 752.1h1.2v1.2h-1.2zM148.9 747.9h2.8v1.9h-2.8zM129.6 758.0h2.2v2.8h-2.2zM140.2 753.2h1.1v1.1h-1.1zM86.7 756.5h0.8v2.2h-0.8zM103.3 758.0h1.8v1.5h-1.8zM114.4 748.9h2.8v0.8h-2.8zM132.3 749.4h2.4v1.6h-2.4zM122.0 750.1h1.2v2.8h-1.2zM96.9 743.9h2.8v1.5h-2.8zM100.8 750.9h1.0v2.4h-1.0zM135.6 749.3h2.8v1.0h-2.8zM99.9 747.0h1.5v2.7h-1.5zM117.6 752.8h1.2v1.0h-1.2zM89.1 741.0h1.1v0.9h-1.1zM143.7 749.3h1.3v2.0h-1.3zM133.3 751.0h0.9v2.7h-0.9zM79.4 752.3h1.1v2.3h-1.1zM140.6 745.5h1.0v1.7h-1.0zM95.2 749.6h1.7v2.9h-1.7zM142.3 749.4h1.8v2.3h-1.8zM113.6 753.5h1.1v1.6h-1.1zM152.0 748.8h1.8v1.5h-1.8zM88.9 758.0h2.6v1.6h-2.6zM135.1 744.7h2.2v2.4h-2.2zM106.5 749.0h1.8v2.4h-1.8zM125.9 758.1h2.2v2.0h-2.2zM82.2 751.2h2.2v1.8h-2.2zM132.5 745.0h1.5v2.1h-1.5zM132.7 747.1h2.6v2.6h-2.6zM136.7 748.7h1.9v1.9h-1.9zM98.9 745.0h1.8v2.2h-1.8zM129.7 747.9h2.4v2.0h-2.4zM122.2 752.3h2.4v2.1h-2.4zM132.1 750.4h1.7v2.2h-1.7zM96.1 747.5h0.9v1.8h-0.9zM100.3 752.6h1.5v1.2h-1.5zM100.2 752.9h1.6v2.1h-1.6zM122.3 757.5h0.8v1.6h-0.8zM100.4 752.9h2.5v1.6h-2.5zM85.1 751.0h1.9v1.5h-1.9zM127.3 748.3h1.7v2.5h-1.7zM123.7 751.4h2.0v2.0h-2.0zM149.9 749.0h1.5v2.7h-1.5zM87.6 754.8h2.1v1.1h-2.1zM126.8 747.9h1.7v1.3h-1.7zM106.1 751.4h2.8v2.7h-2.8zM121.4 759.8h1.8v1.7h-1.8zM108.5 751.6h1.4v1.8h-1.4zM89.1 749.4h1.4v2.4h-1.4zM141.2 750.4h1.4v2.7h-1.4zM134.1 752.8h1.1v2.9h-1.1zM99.7 749.5h2.1v2.1h-2.1zM135.9 754.0h1.4v1.9h-1.4zM104.3 756.1h1.8v1.6h-1.8zM130.8 749.5h1.3v1.7h-1.3zM146.0 747.2h0.8v2.4h-0.8zM106.5 748.3h2.1v1.8h-2.1zM139.7 752.3h2.6v1.2h-2.6zM103.7 750.9h2.5v2.2h-2.5zM110.3 756.7h2.7v1.1h-2.7zM110.6 748.9h1.5v1.1h-1.5zM121.9 748.8h1.3v2.5h-1.3zM134.2 749.3h2.3v2.8h-2.3zM147.6 748.9h2.6v1.3h-2.6zM130.5 748.4h1.1v1.4h-1.1zM145.6 753.9h1.7v1.1h-1.7zM125.4 750.5h1.6v0.9h-1.6zM82.6 749.4h2.6v1.1h-2.6zM109.7 755.1h1.8v2.8h-1.8zM113.1 753.4h1.1v2.1h-1.1zM120.0 747.6h2.1v1.3h-2.1zM119.1 755.8h1.9v1.1h-1.9zM95.1 756.1h1.2v2.3h-1.2zM130.3 752.7h1.0v1.1h-1.0zM122.4 757.1h1.8v1.5h-1.8zM140.5 751.0h0.9v1.1h-0.9zM143.9 747.7h1.0v2.8h-1.0zM127.3 748.3h2.1v1.5h-2.1zM96.7 756.2h1.5v1.6h-1.5zM95.2 747.6h2.5v1.7h-2.5zM133.8 749.5h2.0v2.3h-2.0zM110.1 751.8h1.2v0.9h-1.2zM135.0 750.7h0.8v1.8h-0.8zM138.2 747.5h1.8v1.0h-1.8zM95.8 754.9h1.6v2.6h-1.6zM93.7 754.8h1.1v1.4h-1.1zM98.2 752.1h2.7v1.6h-2.7zM142.0 745.2h1.8v2.8h-1.8zM90.2 749.5h2.2v2.3h-2.2zM94.7 752.7h1.3v1.0h-1.3zM113.0 750.6h1.4v1.8h-1.4zM101.6 746.5h1.1v1.3h-1.1zM131.6 748.2h1.7v2.8h-1.7zM90.0 754.3h1.7v0.9h-1.7zM123.2 749.7h1.5v1.0h-1.5zM91.8 749.6h2.7v0.9h-2.7zM103.0 753.1h0.9v1.3h-0.9zM109.7 752.2h0.9v2.8h-0.9zM92.0 751.8h1.9v1.0h-1.9zM107.6 754.7h2.7v2.0h-2.7zM138.9 750.6h1.9v1.8h-1.9zM117.0 753.4h2.3v2.7h-2.3zM97.5 754.1h1.3v1.0h-1.3zM109.2 755.2h2.5v1.5h-2.5zM94.6 753.3h1.0v1.7h-1.0zM120.9 751.2h2.3v0.9h-2.3zM96.1 755.3h1.0v1.7h-1.0zM104.2 747.5h2.7v2.2h-2.7zM129.2 748.3h2.5v2.2h-2.5zM144.3 744.6h1.4v2.5h-1.4zM109.4 752.4h1.2v1.3h-1.2zM126.9 751.2h2.4v2.0h-2.4zM87.5 752.6h1.5v2.6h-1.5zM142.8 748.4h1.7v1.6h-1.7zM109.8 752.4h2.5v2.3h-2.5zM88.0 751.6h2.3v1.7h-2.3zM144.5 748.3h1.5v2.7h-1.5zM110.0 751.9h2.4v2.7h-2.4zM122.6 749.1h1.0v2.5h-1.0zM120.0 754.1h0.9v2.0h-0.9zM117.3 747.7h1.2v1.4h-1.2zM93.9 750.7h2.4v1.3h-2.4zM106.7 761.8h2.5v2.6h-2.5zM121.9 751.1h2.5v1.8h-2.5zM87.2 753.4h2.3v2.7h-2.3zM97.7 749.0h2.2v2.6h-2.2zM124.9 746.8h0.8v1.9h-0.8zM122.8 753.2h1.5v0.9h-1.5zM101.1 754.7h2.3v1.6h-2.3zM150.0 742.7h2.2v2.2h-2.2zM119.2 746.8h2.0v2.2h-2.0zM117.0 751.4h1.0v1.5h-1.0zM121.4 744.5h1.4v2.7h-1.4zM101.3 750.7h2.4v2.2h-2.4zM149.5 746.8h2.5v2.3h-2.5zM124.1 754.1h2.7v1.3h-2.7zM143.0 749.0h0.8v1.6h-0.8zM91.1 745.8h2.7v2.1h-2.7zM112.9 754.8h2.0v2.3h-2.0zM109.8 750.0h1.4v1.4h-1.4zM125.4 748.7h2.1v2.4h-2.1zM102.6 753.7h2.5v2.6h-2.5zM127.3 751.8h1.9v2.7h-1.9zM102.5 756.7h2.8v1.2h-2.8zM89.3 755.0h2.1v1.2h-2.1zM92.0 749.2h2.2v2.3h-2.2zM81.3 752.6h2.8v1.5h-2.8zM133.5 743.7h1.3v2.2h-1.3zM136.2 750.2h1.2v1.1h-1.2zM92.8 756.0h1.0v2.4h-1.0zM133.6 744.2h2.3v2.7h-2.3zM138.8 743.6h1.0v1.0h-1.0zM89.1 755.3h1.8v2.2h-1.8zM134.6 751.8h1.9v1.6h-1.9zM88.8 750.1h2.2v1.8h-2.2zM146.9 749.5h2.4v2.3h-2.4zM106.0 754.7h1.5v2.3h-1.5zM140.6 752.0h1.8v2.2h-1.8zM131.8 748.7h1.5v2.6h-1.5zM120.6 751.1h1.3v2.2h-1.3zM88.5 753.6h1.8v2.8h-1.8zM112.4 755.3h1.0v1.5h-1.0zM141.8 750.2h1.6v0.8h-1.6zM96.8 752.9h1.9v0.9h-1.9zM101.8 751.4h1.8v1.0h-1.8zM107.0 750.5h1.9v0.9h-1.9zM109.8 747.6h2.0v2.7h-2.0zM124.6 749.3h0.8v2.4h-0.8zM115.0 746.4h2.7v1.6h-2.7zM148.2 742.6h1.1v2.4h-1.1zM122.0 748.9h1.3v1.7h-1.3zM98.6 752.5h2.2v1.1h-2.2zM93.5 752.4h1.6v2.7h-1.6zM140.9 750.6h2.5v2.8h-2.5zM123.9 751.9h2.7v2.8h-2.7zM87.5 755.4h1.4v2.4h-1.4zM108.2 749.6h1.9v2.8h-1.9zM130.3 750.9h2.1v1.6h-2.1zM103.1 752.3h2.8v1.3h-2.8zM119.9 754.4h2.3v1.1h-2.3zM114.6 749.6h2.4v1.7h-2.4zM111.4 746.0h0.9v1.8h-0.9zM84.0 754.1h0.8v1.4h-0.8zM108.3 743.9h1.6v1.9h-1.6zM137.5 746.7h2.9v1.4h-2.9zM96.0 751.4h1.7v2.3h-1.7zM111.6 755.1h1.4v1.9h-1.4zM139.2 752.5h1.8v2.0h-1.8zM96.1 752.4h1.0v1.5h-1.0zM95.9 751.4h1.4v2.4h-1.4zM130.9 756.6h2.1v1.6h-2.1zM124.2 752.7h2.6v1.7h-2.6zM142.2 751.7h0.9v2.3h-0.9zM120.9 750.1h2.5v1.8h-2.5zM144.3 751.2h1.0v2.3h-1.0zM121.2 748.4h2.8v1.0h-2.8zM87.5 750.6h0.9v1.8h-0.9zM129.8 746.5h0.9v2.1h-0.9zM142.2 754.0h1.3v1.4h-1.3zM84.3 747.8h2.7v1.8h-2.7zM94.6 754.7h2.8v1.2h-2.8zM88.8 753.1h1.7v2.1h-1.7zM126.4 751.7h1.8v2.2h-1.8zM105.6 747.1h1.1v1.4h-1.1zM108.2 748.3h2.0v2.2h-2.0zM112.3 744.4h1.4v1.0h-1.4zM96.0 757.7h1.4v2.1h-1.4zM126.6 749.5h2.4v1.5h-2.4zM86.1 747.0h2.0v0.9h-2.0zM142.5 753.3h2.3v1.3h-2.3zM109.4 752.5h0.9v2.3h-0.9zM111.1 750.1h1.4v1.2h-1.4zM146.2 742.8h1.9v1.0h-1.9zM110.7 751.8h2.0v1.4h-2.0zM82.8 751.4h2.8v1.8h-2.8zM90.8 750.3h1.9v1.0h-1.9zM143.6 749.0h1.4v1.9h-1.4zM144.1 751.1h1.9v2.7h-1.9zM103.2 745.6h1.5v2.5h-1.5zM118.5 750.9h2.8v1.8h-2.8zM116.3 748.3h1.8v1.4h-1.8zM131.4 753.9h2.4v2.1h-2.4zM94.2 757.2h2.3v1.0h-2.3zM149.3 751.6h1.0v1.7h-1.0zM124.9 748.4h2.3v1.0h-2.3zM121.0 753.3h0.9v2.3h-0.9zM92.1 748.8h2.0v2.1h-2.0zM120.7 744.4h1.4v1.5h-1.4zM142.6 752.7h1.7v2.8h-1.7zM88.9 747.1h2.3v0.8h-2.3zM141.8 756.3h2.2v1.7h-2.2zM136.1 747.2h2.3v1.9h-2.3zM124.8 745.9h1.1v1.8h-1.1zM85.6 746.2h2.5v0.9h-2.5zM116.4 750.2h1.2v2.8h-1.2zM139.0 756.6h2.2v1.6h-2.2zM125.6 752.8h0.8v2.2h-0.8zM120.9 745.9h1.7v1.4h-1.7zM127.7 753.4h2.4v1.7h-2.4zM130.4 751.0h2.5v1.1h-2.5zM93.6 752.5h1.0v1.8h-1.0zM113.3 746.9h1.9v0.9h-1.9zM135.4 745.1h2.5v2.1h-2.5zM132.6 746.1h0.8v2.6h-0.8zM147.7 751.2h1.5v1.0h-1.5zM109.8 752.9h0.8v1.7h-0.8zM102.8 748.6h1.1v2.8h-1.1zM140.3 747.7h1.6v1.7h-1.6zM114.0 751.7h2.4v2.2h-2.4zM136.6 744.6h2.6v2.7h-2.6zM130.3 752.6h2.2v2.6h-2.2zM127.5 750.8h1.5v1.3h-1.5zM127.9 747.7h1.9v2.5h-1.9zM111.4 754.4h1.6v1.1h-1.6z" fill="#000"/>
<path d="M136.5 746.4h1.3v0.8h-1.3zM120.5 751.1h1.5v2.3h-1.5zM103.3 746.6h1.6v1.8h-1.6zM129.1 754.2h2.3v1.3h-2.3zM132.7 743.8h1.4v1.0h-1.4zM136.5 746.4h1.0v1.2h-1.0zM122.4 758.3h1.9v1.2h-1.9zM120.7 756.3h2.5v1.8h-2.5zM123.1 744.0h2.7v0.9h-2.7zM104.8 750.0h1.9v1.0h-1.9zM138.6 749.7h2.1v1.4h-2.1zM94.7 752.2h1.2v2.4h-1.2zM134.7 750.5h0.8v1.4h-0.8zM139.7 747.9h1.5v1.5h-1.5zM93.3 752.0h1.6v2.2h-1.6zM112.1 750.9h2.7v2.5h-2.7zM129.8 747.6h2.4v2.3h-2.4zM111.6 751.0h1.6v1.0h-1.6zM131.3 754.0h2.3v1.1h-2.3zM88.7 755.3h1.5v1.3h-1.5zM115.2 749.3h1.6v2.5h-1.6zM122.6 753.9h1.7v1.1h-1.7zM106.0 757.5h1.4v2.1h-1.4zM149.1 748.4h1.9v1.4h-1.9zM103.3 751.7h2.6v1.4h-2.6zM83.3 752.4h0.9v2.3h-0.9zM90.5 748.7h2.6v2.4h-2.6zM91.0 759.9h2.0v1.6h-2.0zM135.6 746.2h1.7v1.0h-1.7zM110.2 755.6h2.0v1.1h-2.0zM125.5 750.9h2.0v1.7h-2.0zM137.8 746.1h1.0v2.4h-1.0zM83.7 746.8h2.5v2.5h-2.5zM110.7 744.7h1.1v2.6h-1.1zM136.5 752.2h1.6v1.3h-1.6zM135.3 752.4h2.7v1.3h-2.7zM150.1 753.5h1.3v2.6h-1.3zM112.3 750.4h1.0v2.4h-1.0zM123.9 749.8h1.1v1.5h-1.1zM93.3 751.7h2.6v2.1h-2.6zM111.1 754.6h1.0v1.8h-1.0zM112.2 750.4h0.9v1.8h-0.9zM84.0 751.7h1.3v1.1h-1.3zM118.4 751.6h1.2v1.9h-1.2zM140.4 751.0h1.4v1.3h-1.4zM121.6 745.6h1.2v1.4h-1.2zM105.1 752.7h2.7v1.8h-2.7zM125.2 745.1h2.3v1.5h-2.3zM128.7 749.6h2.0v1.5h-2.0zM93.6 753.5h1.0v2.2h-1.0zM89.8 752.7h1.8v2.3h-1.8zM91.2 748.8h1.4v1.7h-1.4zM131.7 748.4h2.1v1.0h-2.1zM92.3 751.9h2.5v2.2h-2.5zM126.5 745.0h1.3v1.6h-1.3zM100.8 747.3h2.3v1.2h-2.3zM121.6 756.2h2.2v2.7h-2.2zM126.8 744.5h1.0v1.9h-1.0zM84.9 753.3h2.6v0.9h-2.6zM146.5 748.8h2.4v0.9h-2.4zM94.3 752.1h0.8v2.4h-0.8zM87.3 750.5h1.1v1.6h-1.1zM99.1 751.5h1.9v1.9h-1.9zM121.3 750.3h1.1v2.5h-1.1zM90.3 754.0h1.9v2.6h-1.9zM134.0 749.8h1.9v1.7h-1.9zM133.8 749.0h2.3v1.7h-2.3zM139.5 748.8h2.5v2.5h-2.5zM137.3 752.3h1.1v1.5h-1.1zM138.5 750.3h1.4v1.0h-1.4zM124.7 742.1h1.0v1.5h-1.0zM97.7 748.4h1.8v2.6h-1.8zM117.9 746.0h1.5v2.7h-1.5zM131.9 746.2h2.0v2.3h-2.0zM89.4 753.2h1.9v2.2h-1.9zM92.2 751.9h2.1v2.3h-2.1zM94.7 751.4h1.0v1.5h-1.0zM93.1 744.3h1.1v1.1h-1.1zM127.8 745.6h1.7v1.0h-1.7zM117.1 751.7h1.9v2.2h-1.9zM140.7 744.5h1.3v0.8h-1.3zM151.4 752.1h1.7v0.9h-1.7zM101.0 748.6h2.0v1.0h-2.0zM132.8 754.7h1.1v2.1h-1.1zM113.4 750.6h1.8v2.4h-1.8zM90.1 752.2h2.7v2.6h-2.7zM126.0 750.2h1.0v2.1h-1.0zM141.7 749.5h1.6v1.3h-1.6zM116.1 753.6h2.5v1.7h-2.5zM146.6 749.0h2.2v2.1h-2.2zM130.9 750.1h1.7v1.8h-1.7zM95.5 752.1h1.2v1.4h-1.2zM99.2 754.0h2.1v2.5h-2.1zM97.3 747.3h1.0v2.5h-1.0zM107.8 753.8h2.6v1.2h-2.6zM105.5 750.5h2.0v1.0h-2.0zM107.3 748.3h2.0v1.3h-2.0zM128.7 749.3h2.0v2.4h-2.0zM99.3 761.2h1.4v1.6h-1.4zM112.2 751.4h2.5v1.1h-2.5zM100.0 749.5h2.1v1.8h-2.1zM91.9 754.4h1.8v1.1h-1.8zM103.7 752.0h1.4v1.5h-1.4zM125.2 745.6h2.2v1.3h-2.2zM114.5 742.7h1.3v0.8h-1.3zM80.2 751.3h1.1v2.3h-1.1zM129.9 744.3h1.0v2.3h-1.0zM95.3 754.4h1.7v0.9h-1.7zM102.6 753.7h1.0v0.8h-1.0zM96.3 755.2h2.1v2.0h-2.1zM113.0 754.3h1.2v1.1h-1.2zM90.3 750.3h1.2v1.5h-1.2zM117.2 746.2h1.9v1.2h-1.9zM142.1 746.4h1.6v1.9h-1.6zM87.0 746.1h1.5v1.7h-1.5zM103.1 750.2h1.5v2.2h-1.5zM110.9 749.6h1.9v1.4h-1.9zM120.0 750.3h2.5v1.1h-2.5zM119.0 746.5h1.4v1.7h-1.4zM155.2 750.5h2.0v1.7h-2.0zM120.5 744.9h2.7v1.8h-2.7zM101.6 757.7h1.7v0.9h-1.7zM123.9 752.1h2.0v2.0h-2.0zM120.5 745.8h2.6v2.3h-2.6zM101.6 748.8h2.6v2.0h-2.6zM113.8 757.0h1.5v0.8h-1.5zM136.4 750.0h0.9v2.0h-0.9zM111.7 750.8h1.7v1.2h-1.7zM148.6 750.7h1.2v2.7h-1.2zM108.6 753.6h1.5v2.2h-1.5zM124.3 752.2h2.4v1.9h-2.4zM118.9 759.1h1.8v2.5h-1.8zM126.6 749.4h2.5v2.4h-2.5zM93.5 754.6h2.1v1.2h-2.1zM151.1 752.6h1.7v1.4h-1.7zM121.2 752.2h2.3v0.8h-2.3zM102.1 751.2h1.9v0.9h-1.9zM88.3 751.8h1.2v1.6h-1.2zM119.3 746.1h1.7v1.6h-1.7zM144.5 744.3h2.6v2.1h-2.6zM96.0 749.3h1.4v1.6h-1.4zM84.0 752.9h1.2v1.6h-1.2zM130.5 747.5h2.2v1.6h-2.2zM104.6 753.3h1.1v2.6h-1.1zM119.4 746.0h1.8v2.0h-1.8zM88.5 753.7h1.7v0.8h-1.7zM94.4 760.6h2.4v0.9h-2.4zM107.8 752.9h1.4v2.7h-1.4zM141.9 756.0h1.0v2.0h-1.0zM86.6 748.3h2.7v1.9h-2.7zM142.6 754.9h1.2v0.9h-1.2zM150.1 750.6h1.4v1.2h-1.4zM138.9 746.6h1.9v2.4h-1.9zM84.0 746.3h2.0v1.8h-2.0zM101.0 753.9h1.5v1.3h-1.5zM134.8 751.5h2.3v1.7h-2.3zM91.7 751.1h1.5v1.6h-1.5zM117.6 758.0h1.9v1.4h-1.9zM121.5 753.1h1.9v1.3h-1.9zM146.5 754.5h1.6v1.8h-1.6z" fill="#004466"/>
<path d="M796.7 584.8h2.5v1.0h-2.5zM796.9 587.6h2.4v1.9h-2.4zM788.4 610.7h2.8v1.0h-2.8zM797.5 586.4h1.8v3.0h-1.8zM793.8 604.0h3.2v1.0h-3.2zM784.6 633.1h1.6v2.5h-1.6zM785.6 609.6h2.2v1.1h-2.2zM802.4 565.8h1.3v3.1h-1.3zM787.9 617.7h1.5v1.7h-1.5zM787.5 662.8h1.0v2.5h-1.0zM793.6 636.6h2.0v1.3h-2.0zM792.5 576.0h1.0v3.0h-1.0zM789.2 614.4h1.4v0.8h-1.4zM792.0 601.9h1.7v2.8h-1.7zM784.9 663.0h1.2v2.4h-1.2zM783.3 674.9h1.5v0.8h-1.5zM784.8 647.5h1.9v1.4h-1.9zM787.8 607.0h2.2v1.5h-2.2zM799.3 571.4h2.1v1.7h-2.1zM779.5 650.3h3.2v1.0h-3.2zM801.8 564.6h2.2v2.6h-2.2zM792.4 599.1h2.8v1.3h-2.8zM792.5 659.9h2.7v3.2h-2.7zM792.9 633.3h1.9v1.0h-1.9zM784.6 627.9h1.2v1.1h-1.2zM787.1 625.6h1.9v2.6h-1.9zM783.5 640.8h1.7v1.4h-1.7zM794.0 582.6h2.6v2.5h-2.6zM791.7 629.0h1.9v1.0h-1.9zM781.8 664.3h2.5v1.3h-2.5zM789.2 584.6h2.4v0.8h-2.4zM793.3 625.6h3.1v3.2h-3.1zM793.7 589.1h3.2v1.7h-3.2zM784.7 662.1h2.3v3.1h-2.3zM783.6 654.3h1.3v1.7h-1.3zM783.6 664.9h1.5v2.3h-1.5zM781.0 646.9h2.6v2.8h-2.6zM786.1 630.6h2.0v2.1h-2.0zM784.2 655.2h2.6v1.5h-2.6zM796.0 611.3h1.5v1.5h-1.5zM782.3 650.1h3.0v1.8h-3.0zM798.0 598.9h2.6v1.4h-2.6zM779.5 647.4h1.7v2.7h-1.7zM781.4 652.2h2.7v3.2h-2.7zM783.1 661.3h2.3v2.5h-2.3zM791.2 571.3h3.0v3.1h-3.0zM792.5 566.0h2.4v1.6h-2.4zM805.2 561.0h2.4v1.7h-2.4zM786.8 647.7h2.3v1.6h-2.3zM791.4 595.5h2.1v1.1h-2.1zM785.6 642.6h1.4v1.7h-1.4zM791.3 606.6h1.3v1.5h-1.3zM796.1 578.0h0.9v2.2h-0.9zM788.6 638.5h1.6v3.0h-1.6zM782.1 643.1h3.1v3.2h-3.1zM784.5 666.6h1.8v1.2h-1.8zM792.8 648.1h2.2v2.3h-2.2zM795.4 604.5h3.0v3.1h-3.0zM791.3 637.2h1.7v2.9h-1.7zM787.7 624.0h2.0v1.1h-2.0zM775.1 653.9h2.1v3.1h-2.1zM794.4 596.4h2.7v2.8h-2.7zM790.4 635.0h0.9v1.7h-0.9zM779.1 670.3h2.3v1.1h-2.3zM789.3 638.2h2.2v1.1h-2.2zM777.3 670.3h3.2v1.1h-3.2zM785.6 673.1h2.4v3.2h-2.4zM796.8 598.3h2.0v1.2h-2.0zM792.6 588.7h1.7v2.8h-1.7zM791.1 601.1h1.1v2.5h-1.1zM782.9 660.6h1.4v1.7h-1.4zM789.1 599.7h2.4v2.7h-2.4zM785.3 643.2h1.4v2.9h-1.4zM796.0 589.3h2.3v2.0h-2.3zM785.4 637.1h2.6v1.7h-2.6zM784.8 628.3h1.7v2.1h-1.7zM788.0 641.3h2.8v1.0h-2.8zM785.5 646.4h2.4v1.4h-2.4zM784.0 660.4h0.9v2.6h-0.9zM791.5 592.4h2.6v2.6h-2.6zM788.6 624.1h2.8v1.6h-2.8zM777.4 659.7h0.8v3.2h-0.8zM793.9 570.4h3.2v2.5h-3.2zM784.4 667.9h1.2v1.2h-1.2zM792.0 638.0h1.6v2.3h-1.6zM787.7 639.0h1.3v0.9h-1.3zM793.2 567.6h1.4v1.8h-1.4zM786.9 641.9h2.3v1.8h-2.3zM793.4 578.1h1.3v2.8h-1.3zM791.9 628.9h2.0v2.5h-2.0zM792.2 593.9h1.6v2.0h-1.6zM780.3 652.2h2.9v3.2h-2.9zM785.4 626.5h1.3v2.7h-1.3zM789.8 630.6h1.3v2.6h-1.3zM790.3 632.0h2.2v1.5h-2.2zM792.7 609.6h1.4v2.2h-1.4zM787.5 652.4h2.7v1.1h-2.7zM794.8 599.0h1.9v2.3h-1.9zM783.2 612.3h3.2v1.3h-3.2zM790.6 643.0h2.0v1.7h-2.0zM786.0 611.8h1.1v3.2h-1.1zM791.6 590.1h2.3v1.0h-2.3zM790.3 599.4h2.0v1.2h-2.0zM791.5 610.1h3.2v3.1h-3.2zM784.5 614.6h2.9v2.1h-2.9zM786.1 630.9h2.0v1.8h-2.0zM784.5 611.2h1.2v1.1h-1.2zM777.2 663.1h3.0v2.6h-3.0zM793.7 622.0h1.9v1.2h-1.9zM798.4 570.6h1.7v2.1h-1.7zM785.3 634.3h3.0v2.1h-3.0zM785.6 636.6h2.5v1.3h-2.5zM786.5 617.3h1.5v1.2h-1.5zM799.3 572.9h2.0v2.2h-2.0zM781.6 641.4h0.9v1.6h-0.9zM792.8 572.8h2.2v1.9h-2.2zM791.1 602.5h1.3v2.0h-1.3zM794.5 627.5h0.9v1.1h-0.9zM788.6 613.7h2.5v2.3h-2.5zM780.3 649.0h1.8v1.1h-1.8zM799.9 571.7h1.5v2.2h-1.5zM789.4 633.8h3.1v0.8h-3.1zM786.6 659.3h2.7v2.0h-2.7zM794.3 616.4h1.5v1.3h-1.5zM776.4 658.5h1.3v2.9h-1.3zM798.2 580.1h3.1v1.7h-3.1zM790.5 610.5h1.9v2.0h-1.9zM792.2 594.3h3.2v3.0h-3.2zM792.5 627.5h2.3v2.4h-2.3zM789.2 595.8h2.5v0.9h-2.5zM785.1 627.3h3.1v0.9h-3.1zM799.3 560.3h1.1v2.8h-1.1zM796.6 596.1h2.4v1.7h-2.4zM805.2 568.1h3.0v2.0h-3.0zM791.2 588.7h1.3v1.1h-1.3zM793.0 607.7h3.2v3.1h-3.2zM777.5 658.8h1.2v2.3h-1.2zM784.1 659.2h2.3v1.5h-2.3zM798.7 568.8h2.1v2.3h-2.1zM784.6 651.8h3.0v2.3h-3.0zM797.6 557.7h2.7v1.1h-2.7zM793.0 585.3h1.6v3.2h-1.6zM794.7 592.5h1.9v3.2h-1.9zM787.6 630.6h2.3v2.1h-2.3zM776.0 650.7h2.7v0.8h-2.7zM794.9 590.9h0.8v2.2h-0.8zM796.2 636.7h2.3v2.5h-2.3zM792.7 615.0h1.1v2.3h-1.1zM797.3 568.3h3.0v1.3h-3.0zM789.6 601.0h1.9v1.5h-1.9zM788.1 636.4h2.9v2.0h-2.9zM789.2 645.7h1.6v3.0h-1.6zM786.3 619.3h3.1v2.8h-3.1zM781.9 644.6h2.2v1.7h-2.2zM792.7 598.5h2.0v2.9h-2.0zM792.6 588.1h2.0v0.9h-2.0zM793.1 623.8h1.7v1.2h-1.7zM786.7 639.7h0.9v2.4h-0.9zM787.2 601.7h3.0v1.1h-3.0zM799.4 590.1h1.0v2.9h-1.0zM785.7 628.1h2.9v1.1h-2.9zM791.3 620.5h0.9v1.1h-0.9zM793.4 589.9h3.1v3.0h-3.1zM792.6 620.6h1.2v1.8h-1.2zM789.7 566.7h1.8v2.4h-1.8zM790.5 597.3h3.0v1.8h-3.0zM792.8 590.6h1.6v2.6h-1.6zM788.9 606.0h2.8v3.0h-2.8zM795.0 605.7h2.9v2.4h-2.9zM800.7 589.9h1.0v2.3h-1.0zM790.2 630.1h2.9v3.2h-2.9zM801.0 568.9h0.9v3.1h-0.9zM793.6 574.1h1.9v1.4h-1.9zM799.0 569.9h2.9v1.9h-2.9zM789.0 625.4h3.1v1.1h-3.1zM785.8 642.0h2.6v1.7h-2.6zM786.1 615.0h1.0v1.8h-1.0zM789.2 603.8h1.9v2.6h-1.9zM802.2 570.2h2.2v2.7h-2.2zM804.1 563.9h1.3v2.0h-1.3zM797.3 595.1h1.6v2.0h-1.6zM777.3 659.5h1.5v1.2h-1.5zM789.7 610.3h1.1v2.6h-1.1zM793.1 585.8h1.2v1.1h-1.2zM787.8 675.1h1.9v3.0h-1.9zM791.4 577.3h1.5v2.3h-1.5zM782.3 661.6h2.3v2.7h-2.3zM792.4 608.0h1.9v1.9h-1.9zM802.4 572.7h3.0v1.2h-3.0zM781.3 664.6h0.9v0.8h-0.9zM792.7 621.2h1.1v2.4h-1.1zM791.4 575.6h1.7v1.6h-1.7zM792.7 596.3h2.6v1.8h-2.6zM795.5 581.8h1.9v2.2h-1.9zM778.4 633.2h1.2v1.3h-1.2zM786.6 624.4h2.6v2.1h-2.6zM787.8 619.9h2.0v3.2h-2.0zM791.7 579.1h2.7v1.0h-2.7zM796.9 578.0h1.3v0.9h-1.3zM794.2 611.2h3.1v2.6h-3.1zM788.4 624.1h1.9v2.1h-1.9zM786.3 598.1h1.7v1.4h-1.7zM791.8 608.9h1.9v3.2h-1.9zM788.3 622.0h2.5v1.1h-2.5zM779.3 659.3h1.2v0.8h-1.2zM788.7 596.6h2.3v0.9h-2.3zM783.6 666.7h1.1v1.7h-1.1zM795.7 574.8h1.1v1.7h-1.1zM783.5 651.7h2.2v2.0h-2.2zM789.7 616.1h2.5v2.7h-2.5zM780.9 664.3h2.5v3.2h-2.5zM779.1 667.0h3.0v1.2h-3.0zM790.8 628.6h2.6v1.8h-2.6zM788.3 644.1h1.1v1.2h-1.1zM797.1 573.8h2.5v3.0h-2.5zM788.3 655.0h1.1v2.2h-1.1zM803.4 560.3h1.2v1.8h-1.2zM789.5 595.1h3.2v1.6h-3.2zM794.8 566.0h1.7v3.1h-1.7zM782.7 655.6h3.0v2.8h-3.0zM780.5 665.2h2.1v2.1h-2.1zM792.3 649.3h2.1v1.5h-2.1zM794.6 630.1h2.1v1.3h-2.1zM792.7 564.4h1.4v3.1h-1.4zM779.3 627.4h1.7v2.5h-1.7zM789.2 605.5h3.1v1.0h-3.1zM794.8 605.8h1.0v2.8h-1.0zM793.0 634.7h1.6v2.3h-1.6zM794.9 578.5h3.2v2.4h-3.2zM790.9 587.5h3.0v2.4h-3.0zM785.7 637.6h2.2v2.9h-2.2zM794.8 601.4h0.8v2.2h-0.8zM795.7 617.8h1.4v1.9h-1.4zM792.2 575.8h2.5v0.8h-2.5zM798.3 579.7h2.8v2.9h-2.8zM785.8 642.5h1.5v2.0h-1.5zM783.7 645.1h1.6v2.1h-1.6zM785.7 614.3h2.3v2.4h-2.3zM783.8 653.3h2.6v2.3h-2.6zM787.7 612.4h1.5v1.5h-1.5zM794.6 623.3h1.3v1.6h-1.3zM787.6 646.0h1.1v2.4h-1.1zM786.7 629.8h3.2v1.0h-3.2zM784.1 659.3h1.8v1.1h-1.8zM787.1 647.8h1.6v2.8h-1.6zM799.0 561.3h2.4v3.2h-2.4zM798.8 581.0h2.5v1.4h-2.5zM799.7 595.3h3.1v1.3h-3.1zM785.3 642.8h2.8v2.4h-2.8zM786.9 611.7h1.2v2.5h-1.2zM799.1 571.5h1.0v0.8h-1.0zM791.8 629.3h0.9v2.5h-0.9zM788.6 657.5h2.4v2.2h-2.4zM778.9 675.3h2.1v1.3h-2.1zM798.6 594.5h1.3v2.2h-1.3zM785.5 651.8h2.5v1.8h-2.5zM783.8 648.6h1.0v1.2h-1.0zM784.8 641.3h3.1v0.8h-3.1zM781.4 627.3h2.3v2.9h-2.3zM789.0 583.7h1.7v2.6h-1.7z" fill="#000"/>
<path d="M662.8 728.9h2.3v0.8h-2.3zM668.0 732.9h1.8v1.9h-1.8zM616.4 681.0h1.6v2.0h-1.6zM632.7 692.0h1.7v2.4h-1.7zM676.9 742.9h2.1v1.0h-2.1zM646.9 704.9h1.5v1.0h-1.5zM644.8 705.6h2.2v1.1h-2.2zM707.6 773.0h1.5v1.6h-1.5zM613.2 679.1h1.0v1.8h-1.0zM625.7 686.4h1.1v0.8h-1.1zM623.1 683.8h0.9v1.7h-0.9zM707.9 779.3h1.9v1.0h-1.9zM676.5 744.4h2.4v0.9h-2.4zM672.6 739.1h1.3v2.5h-1.3zM715.7 791.4h2.4v1.2h-2.4zM680.0 747.1h2.0v1.8h-2.0zM698.6 758.7h2.3v1.8h-2.3zM658.9 729.2h1.8v0.8h-1.8zM699.3 762.6h1.2v1.6h-1.2zM653.9 710.8h1.0v2.1h-1.0zM616.4 675.7h1.7v2.0h-1.7zM642.3 701.1h1.2v2.5h-1.2zM657.1 721.4h1.4v1.9h-1.4zM635.0 691.9h0.9v2.5h-0.9zM638.2 691.7h1.8v0.8h-1.8zM620.8 682.8h1.9v2.5h-1.9zM657.4 713.8h1.0v0.9h-1.0zM673.1 739.3h1.6v2.0h-1.6zM693.9 759.7h1.1v2.0h-1.1zM698.3 756.9h1.0v0.9h-1.0zM671.3 738.0h0.9v2.1h-0.9zM640.5 699.3h1.6v1.8h-1.6zM659.0 718.9h2.4v1.7h-2.4zM714.1 782.5h2.3v1.7h-2.3zM667.1 735.1h0.9v1.9h-0.9zM671.3 740.0h2.0v1.0h-2.0zM684.0 757.3h1.9v0.9h-1.9zM676.1 747.7h1.2v2.2h-1.2zM688.5 755.5h0.9v1.8h-0.9zM678.5 745.9h0.9v1.1h-0.9zM678.7 746.9h1.4v1.6h-1.4zM673.4 737.5h1.4v2.1h-1.4zM615.5 675.8h2.5v2.5h-2.5zM704.2 766.4h1.2v2.1h-1.2zM636.8 696.0h1.0v2.4h-1.0zM711.1 788.4h1.6v1.7h-1.6zM656.7 713.9h1.2v1.7h-1.2zM634.3 697.2h0.8v1.0h-0.8zM701.0 761.8h2.3v1.8h-2.3zM640.5 699.4h1.3v2.2h-1.3zM713.2 784.0h2.4v2.3h-2.4zM709.5 778.4h1.3v1.2h-1.3zM676.9 746.0h2.2v1.5h-2.2zM638.1 699.0h1.9v1.8h-1.9zM661.4 726.8h1.4v1.1h-1.4zM672.9 740.1h1.9v1.0h-1.9zM679.5 749.8h1.8v2.1h-1.8zM707.0 772.0h1.7v1.4h-1.7zM613.7 676.9h2.3v1.4h-2.3zM702.8 765.7h2.0v1.3h-2.0zM671.1 737.0h2.4v0.9h-2.4zM631.9 691.1h2.2v2.5h-2.2zM679.8 753.6h1.7v1.0h-1.7zM683.3 757.6h1.4v1.5h-1.4zM633.7 692.5h1.8v0.8h-1.8zM684.5 756.9h2.3v2.0h-2.3zM708.4 775.6h1.0v1.6h-1.0zM682.4 757.8h2.1v1.4h-2.1zM674.9 744.7h0.8v1.1h-0.8zM697.7 758.1h1.0v1.2h-1.0zM672.8 737.6h1.1v2.0h-1.1zM662.8 719.0h2.4v2.0h-2.4zM669.1 733.3h1.5v1.6h-1.5zM682.5 749.1h2.4v2.5h-2.4zM621.8 686.2h2.1v2.5h-2.1zM633.1 694.1h1.7v2.0h-1.7zM712.7 787.1h2.3v1.8h-2.3zM638.0 695.5h1.0v1.3h-1.0zM615.4 680.3h1.6v2.5h-1.6zM618.4 680.3h1.8v1.1h-1.8zM680.3 754.6h2.3v2.2h-2.3zM709.8 779.9h2.5v1.5h-2.5zM646.2 706.4h2.3v1.9h-2.3zM626.2 684.7h1.2v1.9h-1.2zM710.5 783.2h1.1v0.9h-1.1zM669.5 738.7h1.2v0.8h-1.2zM664.3 729.4h1.2v1.1h-1.2zM682.5 749.5h1.9v1.4h-1.9zM708.4 777.6h2.1v1.2h-2.1zM621.1 680.5h2.0v1.4h-2.0zM673.3 739.4h2.0v2.0h-2.0zM711.7 782.6h1.7v2.3h-1.7zM655.6 711.5h1.4v1.7h-1.4zM711.1 775.2h1.3v1.6h-1.3zM647.8 704.9h2.1v1.0h-2.1zM707.8 770.6h1.2v1.2h-1.2zM665.0 728.4h1.5v2.4h-1.5zM634.3 692.4h1.9v1.5h-1.9zM613.9 677.9h2.4v2.5h-2.4zM712.0 784.0h0.9v1.3h-0.9zM615.0 677.4h1.1v1.9h-1.1zM657.4 719.8h1.1v2.3h-1.1zM669.9 735.5h2.1v2.3h-2.1zM635.4 696.5h1.6v2.1h-1.6zM681.2 752.9h2.1v1.6h-2.1zM675.8 743.0h1.0v1.5h-1.0zM697.8 758.1h1.6v1.8h-1.6zM672.0 738.4h2.0v1.7h-2.0zM709.8 781.4h1.3v2.0h-1.3zM624.8 683.1h2.1v1.1h-2.1zM614.6 675.0h1.6v1.7h-1.6zM695.1 759.5h1.1v2.5h-1.1zM684.3 758.2h2.3v1.4h-2.3zM688.2 755.1h1.2v2.2h-1.2zM678.7 746.0h1.5v1.6h-1.5zM701.1 763.4h1.2v2.2h-1.2zM706.6 772.5h2.1v2.3h-2.1zM646.2 706.5h0.9v2.1h-0.9zM635.3 693.0h1.0v2.1h-1.0zM701.5 764.6h1.2v2.0h-1.2zM712.4 785.0h1.7v1.5h-1.7zM687.8 758.1h2.0v1.2h-2.0zM713.4 787.8h0.8v1.8h-0.8zM628.0 689.0h2.2v1.5h-2.2zM672.6 737.8h1.4v2.2h-1.4zM657.3 712.7h0.9v1.4h-0.9zM662.8 729.2h1.6v2.3h-1.6zM709.2 780.5h1.8v1.1h-1.8zM621.0 680.8h1.1v2.2h-1.1zM628.3 688.6h2.3v2.0h-2.3zM638.0 695.2h1.0v2.0h-1.0zM682.7 756.0h1.5v1.3h-1.5zM682.9 752.7h1.2v1.4h-1.2zM705.8 773.2h1.9v0.8h-1.9zM699.9 757.7h1.7v2.3h-1.7zM710.1 783.0h1.4v0.8h-1.4zM641.2 700.9h1.5v0.8h-1.5zM666.4 728.9h0.9v2.1h-0.9zM637.1 693.4h1.7v1.5h-1.7zM713.6 790.2h1.2v1.0h-1.2zM641.4 699.0h1.1v1.8h-1.1zM644.1 707.0h1.7v1.3h-1.7zM693.1 757.9h2.0v2.3h-2.0zM695.1 755.0h2.4v1.8h-2.4zM633.9 692.9h2.0v1.4h-2.0zM622.2 683.5h2.1v2.0h-2.1zM670.0 738.8h1.6v1.7h-1.6zM638.5 695.9h1.6v1.2h-1.6zM660.3 726.8h2.1v1.4h-2.1zM679.7 747.7h2.2v0.9h-2.2zM643.6 703.1h1.3v1.5h-1.3zM711.3 782.3h1.9v2.2h-1.9zM668.5 735.3h0.9v0.9h-0.9zM618.5 678.6h0.9v2.4h-0.9zM712.3 788.9h2.3v1.9h-2.3zM693.7 759.5h1.6v0.9h-1.6zM618.7 681.2h1.3v2.4h-1.3zM658.9 719.6h0.9v1.5h-0.9zM661.3 723.3h1.4v0.8h-1.4zM664.9 730.4h2.1v1.5h-2.1zM654.7 712.0h1.9v2.4h-1.9zM686.3 759.9h0.8v1.1h-0.8zM627.3 688.6h1.5v1.9h-1.5zM653.5 712.1h2.4v2.4h-2.4zM654.3 717.2h2.2v2.3h-2.2zM626.9 688.4h1.3v1.6h-1.3zM709.1 783.2h1.4v1.8h-1.4zM672.4 738.8h2.1v2.2h-2.1zM654.4 711.6h1.9v1.8h-1.9zM709.0 779.4h1.8v2.4h-1.8zM709.3 779.1h1.0v0.8h-1.0zM706.6 767.8h2.1v1.9h-2.1zM679.5 755.1h1.3v1.0h-1.3zM619.9 678.6h2.3v2.2h-2.3zM639.4 700.5h2.3v0.8h-2.3zM648.6 706.5h0.8v1.0h-0.8zM634.4 694.1h0.9v2.2h-0.9zM662.8 727.7h2.3v1.0h-2.3zM706.3 771.8h1.8v2.0h-1.8zM671.9 737.6h1.7v1.7h-1.7zM681.3 749.2h0.9v0.9h-0.9zM620.1 680.6h2.0v0.9h-2.0zM678.6 747.8h2.1v2.0h-2.1zM671.7 737.7h0.9v1.2h-0.9zM662.1 726.8h1.2v1.7h-1.2zM653.3 710.3h0.8v0.8h-0.8zM703.1 768.5h1.2v2.1h-1.2zM708.8 773.0h2.4v2.1h-2.4zM627.8 685.6h1.1v1.9h-1.1zM680.8 750.7h2.3v0.9h-2.3zM664.1 729.4h1.7v2.4h-1.7zM650.4 710.6h2.3v2.4h-2.3zM625.4 684.6h1.4v1.1h-1.4zM699.5 761.5h1.7v1.7h-1.7zM677.2 744.8h1.3v0.8h-1.3zM713.2 785.5h2.1v1.5h-2.1zM678.7 747.5h2.3v2.1h-2.3zM696.3 758.0h2.1v2.4h-2.1zM650.9 708.6h2.5v2.0h-2.5zM620.1 680.0h1.5v1.8h-1.5zM709.0 779.0h2.5v1.9h-2.5zM695.7 757.6h2.1v1.7h-2.1zM664.1 730.4h2.1v1.5h-2.1zM620.6 680.3h1.9v1.1h-1.9zM706.9 770.9h1.1v1.3h-1.1zM674.4 737.0h1.1v1.1h-1.1zM699.7 762.5h1.9v1.1h-1.9zM618.3 677.9h2.2v1.0h-2.2zM653.3 710.8h2.3v2.2h-2.3zM714.2 784.6h1.3v1.9h-1.3zM707.1 771.3h2.5v1.0h-2.5zM707.7 777.3h1.4v2.3h-1.4zM683.7 753.4h1.4v2.2h-1.4zM668.6 731.9h1.4v2.5h-1.4zM711.5 787.1h1.8v2.0h-1.8zM646.4 704.4h2.5v1.8h-2.5zM709.7 777.6h0.9v1.8h-0.9zM674.5 743.1h1.3v1.0h-1.3zM661.4 727.7h2.3v1.6h-2.3zM694.3 756.2h1.6v1.2h-1.6z" fill="#000"/>
<path d="M465.1 661.7h1.1v1.9h-1.1zM490.9 677.6h1.5v1.2h-1.5zM432.5 648.2h0.9v2.0h-0.9zM468.7 663.7h1.7v1.4h-1.7zM477.3 668.3h1.8v2.1h-1.8zM505.1 688.0h0.8v1.0h-0.8zM502.3 686.9h2.0v1.2h-2.0zM463.5 659.9h1.6v1.9h-1.6zM418.9 648.6h0.9v1.5h-0.9zM490.1 676.8h2.0v1.0h-2.0zM464.8 661.7h1.0v1.9h-1.0zM412.3 649.2h2.1v1.4h-2.1zM448.8 654.5h1.6v1.0h-1.6zM413.8 648.0h1.7v1.9h-1.7zM485.9 674.8h1.4v0.8h-1.4zM479.8 671.1h0.9v1.4h-0.9zM465.9 663.0h1.7v1.1h-1.7zM462.2 657.7h1.6v0.9h-1.6zM456.5 657.0h1.4v1.6h-1.4zM462.2 659.1h1.4v2.1h-1.4zM449.0 653.9h1.5v0.9h-1.5zM411.8 648.6h2.2v1.5h-2.2zM453.0 656.0h1.4v1.8h-1.4zM498.1 682.4h1.7v2.0h-1.7zM418.5 648.9h1.7v1.7h-1.7zM468.2 661.5h1.9v2.1h-1.9zM452.0 653.7h2.0v0.9h-2.0zM500.0 682.2h2.1v1.2h-2.1zM476.6 668.5h2.1v1.1h-2.1zM442.0 651.6h1.1v0.9h-1.1zM508.9 689.7h1.8v1.7h-1.8zM460.0 658.7h1.6v1.2h-1.6zM442.4 651.1h1.1v1.6h-1.1zM496.9 680.8h0.9v1.4h-0.9zM411.2 648.2h1.4v1.8h-1.4zM471.5 666.2h1.5v1.5h-1.5zM430.8 649.4h1.8v1.5h-1.8zM451.6 655.3h1.7v1.8h-1.7zM487.8 677.2h2.1v2.1h-2.1zM482.4 671.6h1.9v0.8h-1.9zM438.4 651.6h1.6v1.2h-1.6zM422.5 648.5h1.9v2.1h-1.9zM426.2 646.6h1.1v1.6h-1.1zM453.2 654.6h0.8v1.1h-0.8zM492.6 679.3h1.9v1.8h-1.9zM503.8 687.4h1.7v0.9h-1.7zM465.9 660.2h1.6v1.0h-1.6zM417.6 646.9h2.2v0.8h-2.2zM499.8 684.8h1.3v1.6h-1.3zM442.3 652.5h1.8v1.6h-1.8zM481.7 671.1h1.9v1.9h-1.9zM440.0 650.7h1.1v1.4h-1.1zM418.7 647.6h1.7v1.6h-1.7zM506.0 687.8h1.3v0.9h-1.3zM405.5 649.9h0.9v1.0h-0.9zM472.2 665.9h2.1v0.9h-2.1zM468.0 663.3h1.1v1.0h-1.1zM447.8 652.6h1.9v2.0h-1.9zM421.5 647.3h1.4v1.5h-1.4zM497.3 682.9h2.1v1.0h-2.1z" fill="#000"/>
<polygon points="15.5,719.4 25.3,715.9 38,720.8 33.7,727.8 16.9,722.2" fill="#5c504c" stroke="#000" stroke-width="1"/>
<polygon points="300.2,59.1 307.6,56.2 313.8,59.1 320.0,71.4 323.0,74.0 320.5,83.7 322.4,94.8 317.0,86.0 315.0,75.0 309.0,65.0 302.0,62.0" fill="#244a6e" stroke="#1c3550" stroke-width="0.8"/>
<polygon points="368.7,260.8 373.0,260.0 379.0,264.0 390.0,269.3 395.6,275.0 391.0,276.0 378.0,269.0 368.0,264.0" fill="#244a6e" stroke="#1c3550" stroke-width="0.8"/>
<polygon points="612.8,286.3 618.0,287.0 624.1,294.8 621.3,300.5 610.0,311.8 604.3,307.6 611.0,299.0" fill="#244a6e" stroke="#1c3550" stroke-width="0.8"/>
<polygon points="526.4,503.4 533.5,507.6 530.0,519.0 536.3,526.0 530.7,538.8 526.4,530.3 528.0,516.0" fill="#244a6e" stroke="#1c3550" stroke-width="0.8"/>
<polygon points="540.6,602.5 547.6,610.5 556.1,604.0 563.2,611.0 546.2,619.5 541.0,612.0" fill="#244a6e" stroke="#1c3550" stroke-width="0.8"/>
<polygon points="424.5,413.0 427.0,414.0 430.0,428.0 429.0,432.0 425.0,422.0" fill="#244a6e" stroke="#1c3550" stroke-width="0.8"/>
<polygon points="442.0,369.0 447.0,362.0 451.0,361.0 449.0,367.0 444.0,372.0" fill="#244a6e" stroke="#1c3550" stroke-width="0.8"/>
<polygon points="121.5,654.3 129.0,652.0 137.0,659.5 130.6,668.5 122.8,667.2" fill="#244a6e" stroke="#1c3550" stroke-width="0.8"/>
<polygon points="139.6,698.3 147.0,697.0 155.2,703.4 144.8,713.8 140.0,708.0" fill="#244a6e" stroke="#1c3550" stroke-width="0.8"/>
<polygon points="42.7,680.2 48.0,681.0 51.7,688.0 46.0,688.0" fill="#244a6e" stroke="#1c3550" stroke-width="0.8"/>
<polygon points="59.5,685.3 67.2,698.3 82.8,704.0 83.0,708.6 64.6,701.0" fill="#244a6e" stroke="#1c3550" stroke-width="0.8"/>
<polygon points="784.0,731.0 789.0,730.0 797.0,748.0 794.0,755.0 786.0,742.0" fill="#244a6e" stroke="#1c3550" stroke-width="0.8"/>
<polyline points="780.0,667.0 785.0,680.0 793.6,701.0 790.0,715.0 787.0,731.0" fill="none" stroke="#244a6e" stroke-width="2"/>
<polyline points="249.4,678.4 253.8,691.7 249.4,706.5 234.6,724.2 225.7,730.1" fill="none" stroke="#000" stroke-width="1.2" stroke-dasharray="6 3"/>
<polyline points="261,662 284.5,664.6" fill="none" stroke="#000" stroke-width="1.5" stroke-dasharray="8 4"/>
<polyline points="334,661 343.8,660 360,654 380,651 397,648 410,647.5" fill="none" stroke="#000" stroke-width="2"/>
<path d="M283.5 647.8h1.1v0.8h-1.1zM281.2 652.8h2.1v1.9h-2.1zM286.9 648.5h1.6v1.1h-1.6zM300.5 652.3h0.9v2.1h-0.9zM278.1 651.9h0.8v0.9h-0.8zM297.6 651.3h2.7v2.6h-2.7zM272.8 651.8h1.4v2.0h-1.4zM274.9 650.7h1.1v2.3h-1.1zM280.7 651.0h1.7v1.5h-1.7zM270.4 648.0h2.7v2.1h-2.7zM279.5 651.9h2.1v1.0h-2.1zM276.1 652.2h2.3v1.8h-2.3zM271.6 650.4h1.8v1.2h-1.8zM281.3 651.5h1.0v1.8h-1.0zM275.4 650.7h1.3v1.5h-1.3zM291.3 649.8h1.2v1.3h-1.2zM286.4 649.2h2.6v1.1h-2.6zM297.9 652.2h2.2v2.5h-2.2zM269.9 654.5h1.4v1.3h-1.4zM272.3 652.5h2.7v2.7h-2.7zM286.9 649.7h2.3v2.4h-2.3zM290.0 651.1h1.7v2.0h-1.7zM281.1 649.6h1.1v1.4h-1.1zM296.3 654.6h1.8v2.1h-1.8zM292.1 651.0h1.3v2.1h-1.3zM293.6 652.0h1.6v1.3h-1.6zM285.4 649.6h2.0v2.5h-2.0zM299.7 650.2h1.9v2.5h-1.9zM293.2 649.8h1.5v2.2h-1.5zM289.8 649.4h2.5v2.3h-2.5zM299.2 650.2h2.3v1.5h-2.3zM272.3 652.5h2.6v2.1h-2.6zM286.2 648.7h1.8v2.1h-1.8zM282.3 651.6h1.4v2.1h-1.4zM275.5 652.0h2.1v2.2h-2.1zM291.7 648.9h0.9v1.7h-0.9zM284.7 651.8h1.4v1.3h-1.4zM280.3 650.3h1.5v1.3h-1.5zM275.3 651.4h2.5v1.8h-2.5zM292.5 651.2h2.0v2.4h-2.0z" fill="#000"/>
<polyline points="526,718 545,712 560,703" fill="none" stroke="#000" stroke-width="1.5"/>
<path d="M182.0 6.0L199.3 41.9L200.5 64.0L199.3 93.6L189.4 110.8L182.0 135.5L174.6 152.7L157.4 192.0L147.3 204.2L158.6 225.4L167.0 226.0M170.0 226.8L170.0 260.8L172.8 297.6L175.6 331.6L182.7 371.3L181.3 391.1L175.6 400.0L161.5 428.3L153.0 470.8L141.6 493.5L130.3 547.3L127.5 598.3L126.7 626.0L132.0 651.7L134.5 675.0M5.7 256.6L51.0 253.7L85.0 242.4L119.0 229.7L158.6 224.0L172.8 226.8L198.3 212.7L221.0 190.0L248.5 179.8L297.8 165.0L340.0 157.6L367.0 147.7L406.5 135.4L438.5 131.7L487.7 136.6L517.3 137.9L549.3 157.6L580.0 161.5L622.5 147.3L659.3 143.0L707.5 119.0L738.6 96.3L778.3 80.7L806.0 72.2M241.1 6.0L256.0 29.6L263.3 49.3L268.2 57.9L288.0 60.3L305.2 53.0L317.5 59.1L332.3 71.4L350.0 81.3L364.6 91.1L389.2 110.8L406.5 130.5L428.6 157.6L443.4 177.3L460.6 199.4L482.5 226.8L505.2 235.3L522.2 239.6L536.3 252.3L542.0 283.5L556.1 309.0L567.5 323.1L584.5 348.6M241.1 6.0L228.8 19.7L227.6 44.3L223.9 57.9L211.6 64.0L200.5 71.4M473.0 6.0L470.5 27.0L463.0 46.8L436.0 59.0L428.6 73.9L421.2 91.1L411.4 108.3L406.5 130.5L399.0 157.6L396.6 199.4L398.5 232.5L395.6 275.0L397.0 303.3L401.3 337.3L404.2 365.6L405.6 388.3L407.0 400.0L418.3 428.3L438.1 470.8L418.3 513.3L390.0 553.0L361.6 581.3L333.3 595.5L310.7 604.0L305.0 630.0L310.0 640.0M588.5 7.0L591.3 34.0L604.0 51.0L599.8 73.7L602.7 96.3L591.3 110.5L597.0 124.6L614.0 147.3L622.5 147.3M525.0 235.3L567.5 190.0L596.0 160.0M659.3 143.0L670.7 153.0L676.3 167.1L687.6 181.3L701.8 189.8L721.6 188.4L764.1 178.5L806.0 172.8M716.0 188.4L730.1 209.6L744.3 223.8L760.3 241.7L770.7 280.5L806.0 307.0M584.5 348.6L615.6 320.3L638.8 311.5L685.3 283.1L724.1 259.8L739.6 254.7L760.3 241.7L806.0 222.0M5.7 460.9L56.7 466.6L99.2 475.0L136.0 473.1L150.1 477.9L220.0 475.1L256.8 475.1L282.3 465.2L299.3 445.3L327.6 414.2L347.5 405.3L373.0 396.8L390.0 385.5L404.2 374.1L418.3 365.6L440.0 362.8L496.7 357.1L553.3 351.5L584.5 348.6L624.1 362.8L677.6 368.4L716.4 371.0L755.2 373.6L801.7 340.0L806.0 337.0M256.8 475.1L245.5 499.2L237.0 521.8L230.0 536.0L215.3 553.0L209.6 584.1L195.5 630.0L190.0 650.0M404.2 371.3L432.5 343.0L450.0 331.6L468.3 314.6L496.7 260.8L508.0 238.2L525.0 235.3M584.5 357.1L564.6 371.3L553.3 388.3L547.6 400.0L525.0 428.3L505.2 451.0L465.5 468.0L438.1 470.8M584.5 357.1L598.6 377.0L610.0 400.0L627.0 422.7L638.3 434.0L629.8 470.8L632.6 513.3L649.6 553.0L658.1 592.6L663.8 609.6L681.9 636.3L713.8 662.0L718.2 686.4L731.4 710.5L744.5 736.9L753.3 769.8L755.5 806.0M638.3 434.0L646.5 439.1L677.6 457.2L708.6 466.3L755.2 472.8L799.1 487.0L806.0 493.0M5.0 661.0L64.6 644.0L90.5 642.7L126.7 640.0L155.2 641.4L181.0 651.7L210.0 654.3M64.6 644.0L90.5 656.9L106.0 669.8L134.5 675.0L160.3 685.3L181.0 667.2L196.5 654.3M150.0 641.4L181.0 654.3L219.8 646.5L253.4 641.4L284.5 638.8L305.2 625.9L315.5 623.3L331.0 624.6L360.0 633.6L395.6 626.6L424.0 618.1L450.0 618.1L474.0 615.3L516.5 618.1L526.4 620.0L543.3 627.0L564.4 632.7L581.2 639.7L606.5 640.4L640.0 643.9L681.9 653.0L713.3 661.4L744.7 659.3L784.5 654.1L806.0 650.0M806.0 537.0L801.2 561.0L786.6 592.3L786.6 644.7L782.4 665.6L795.0 676.1L806.0 697.0" fill="none" stroke="#86761f" stroke-width="1"/>
<ellipse cx="401.5" cy="134" rx="35.7" ry="30.8" fill="none" stroke="#86761f" stroke-width="1"/>
<circle cx="584.5" cy="350" r="10" fill="none" stroke="#86761f" stroke-width="1"/>
<circle cx="167" cy="226" r="7" fill="none" stroke="#86761f" stroke-width="1"/>
<polyline points="6.0,105.0 155.0,105.0 158.0,108.0 161.0,114.0 160.0,122.0 152.0,132.0 146.0,140.0 138.0,149.0 187.0,149.0" fill="none" stroke="#000" stroke-width="1" stroke-linejoin="round"/>
<polyline points="201.5,9.1 200.5,9.8 199.7,10.2 199.1,10.3 199.0,10.1 199.4,9.8 200.5,10.9 201.9,11.1 203.5,11.2 205.1,11.5 206.6,12.0 208.0,12.6 208.9,13.4 209.5,14.5 209.6,15.7 209.2,17.0 208.5,18.4 207.6,19.7 206.5,21.0 205.5,22.1 204.7,23.0 204.2,20.5 203.8,20.9 203.9,21.5 204.4,22.3 205.2,23.5 206.1,24.8 207.1,26.2 207.9,27.8 208.3,29.2 208.3,30.5 207.8,31.7 206.9,32.5 205.5,33.1 204.6,32.7 203.3,33.8 202.0,34.8 200.8,35.6 199.9,36.3 199.5,36.9 199.5,37.3 200.0,37.8 201.0,38.2 202.2,39.6 203.7,39.4 205.4,39.2 207.0,39.1 208.4,39.3 209.6,39.9 210.4,40.7 210.8,41.8 210.8,43.2 210.6,44.7 210.0,46.3 209.4,47.8 208.8,49.2 208.3,50.3 208.1,51.1 207.5,49.7 207.8,50.2 208.6,50.5 209.8,50.9 211.3,51.4 212.8,51.9 214.3,52.6 215.6,53.4 215.0,52.1 216.1,52.6 216.9,53.6 217.3,55.0 217.4,56.7 217.3,58.5 217.0,60.2 216.7,61.7 216.5,62.9 220.9,64.0 221.4,63.7 221.6,62.9 221.7,61.6 221.8,60.0 222.0,58.1 225.1,55.9 226.7,56.1 228.0,56.5 228.9,57.4 229.4,58.5 229.5,60.0 229.2,61.6 228.7,63.3 228.1,64.9 226.6,65.3 225.7,66.1 225.3,66.7 225.4,67.2 226.0,67.6 227.0,67.9 228.4,68.3 230.0,68.8 231.6,69.4 233.1,70.2 234.2,71.1 234.9,72.2 235.0,75.0 234.2,76.1 233.0,77.0 231.5,77.7 229.8,78.3 228.3,78.7 226.9,79.1 226.0,79.5 225.5,79.9 227.1,80.4 226.9,80.4 227.8,80.8 229.5,81.5 230.1,82.7 230.6,84.2 230.8,85.8 230.6,87.4 230.1,88.9 227.5,89.4 226.6,90.7 225.5,91.8 224.6,92.7 223.7,93.3 223.0,93.6 222.4,93.7 222.1,93.7 221.9,93.6 221.9,93.5 222.1,93.6 222.3,93.8 222.5,94.2 222.5,94.7 223.1,99.9 221.6,100.3 219.9,100.4 218.2,100.1 216.6,99.4 215.1,98.4 213.9,97.2 213.0,95.8 212.4,94.3 212.2,93.0 212.2,91.8 210.0,94.7 209.5,94.5 209.3,94.3 209.5,94.2 210.0,94.4 210.7,94.8 211.4,95.6 212.2,96.8 212.7,98.2 212.9,99.9 212.9,101.6 212.4,103.3 211.2,105.4 209.8,106.5 208.3,107.4 206.8,107.8 205.3,108.0 204.1,107.9 203.2,107.6 202.6,107.2 202.5,107.0 202.6,106.9 203.1,107.1 203.7,107.6 204.3,108.5 205.1,110.0 205.2,111.5 205.0,113.1 204.4,114.8 204.6,117.1 203.2,118.6 201.5,119.6 199.6,120.2 197.7,120.3 195.8,120.1 194.3,119.5 193.1,118.8 192.4,118.1 191.7,118.5 191.9,118.2 192.5,118.2 193.6,118.6 194.7,119.5 195.9,120.9 196.8,122.7 197.3,124.7 197.3,126.8 196.7,128.8 195.6,130.6 194.1,132.0 192.2,132.9 191.0,133.5 189.3,133.9 188.7,131.6 187.5,132.0 186.6,132.3 186.1,132.8 186.0,133.4 186.3,134.1 187.0,135.0 187.9,136.0 188.9,137.1 189.9,138.2 190.7,139.4 191.3,140.0 191.7,141.1 191.6,142.2 191.1,143.2 190.1,144.1 188.9,144.9 187.5,145.7 186.1,146.3 184.8,146.9 183.9,147.5 183.7,148.6 183.7,148.2 183.7,149.1 184.4,148.9 185.5,148.8 186.7,149.1 188.1,149.8 189.5,150.9 189.3,154.3 189.7,155.2 190.0,156.1 190.1,157.1 189.5,158.9 188.5,159.3 187.6,159.6 186.7,159.9 185.9,160.1 185.2,160.4 184.6,160.8 184.1,161.2 183.8,161.8 183.5,162.5 183.3,163.2 183.1,164.1 182.9,165.0 182.7,166.0 182.3,166.9 181.8,167.8 181.2,168.5 180.5,169.2 179.7,169.8 178.8,170.2 178.1,170.6 177.3,171.1 176.6,171.7 176.0,172.2 175.5,172.8 175.2,173.3 175.0,174.0 174.9,174.7 175.0,175.5 175.1,176.4 175.3,177.3 175.4,178.3 175.4,179.3 175.3,180.3 175.0,181.3 174.6,182.2 174.0,183.0 173.3,183.7 172.6,184.4 171.8,185.0 171.1,185.6 170.5,186.1 170.0,186.6 169.6,187.2 169.4,187.8 169.4,188.5 169.7,189.1 169.5,190.0 169.3,190.9 169.0,191.8 168.6,192.7 168.1,193.6 167.5,194.4 166.7,195.7 165.2,196.8 163.9,197.6 162.6,198.2 161.5,198.5 160.6,198.5 160.3,195.8 159.1,195.7 158.3,195.8 157.8,196.3 157.7,197.1 157.9,198.2 157.7,200.1 158.8,201.3 159.9,202.6 160.8,203.9 161.4,205.1 161.5,206.2 161.3,207.1 160.5,207.9 159.4,208.5 157.9,209.0 156.3,209.3 154.6,209.6 153.2,209.8 152.0,210.2 151.2,210.6 150.9,211.2 151.0,212.0 151.6,212.9 152.3,215.5 153.9,215.5 155.5,215.5 157.1,215.6 158.5,215.9 159.5,216.4 160.1,217.1 160.3,218.1 160.2,219.3 159.6,220.7 158.9,222.1 158.1,223.6 157.3,224.9 156.7,226.1 156.4,227.0 156.5,227.7 157.1,228.2 159.6,224.0 159.5,225.2 159.5,226.8 159.5,228.4 159.5,230.0 159.3,231.4 158.9,232.6 158.2,233.4 157.3,233.8 156.2,233.8 155.0,233.4 153.6,232.8 152.2,232.0 150.8,231.2 149.6,230.5 148.5,230.0 147.7,229.9 147.1,230.1 146.7,230.8 146.5,231.9 145.3,234.4 146.6,235.3 147.7,235.2 148.5,236.3 149.1,237.5 149.5,238.8 149.5,240.1 149.2,241.3 148.6,242.5 147.8,243.6 146.8,244.5 145.8,245.2 144.8,245.8 144.0,246.3 143.4,246.6 145.2,244.2 144.9,244.3 144.7,244.9 144.4,245.7 144.0,246.7 143.4,247.9 142.7,249.0 141.8,250.1 140.7,250.9 139.5,251.5 138.1,251.7 136.8,251.6 135.4,251.2 134.2,250.5 133.1,249.7 132.2,248.9 130.7,249.7 130.0,249.6 129.6,249.7 129.5,250.0 129.6,250.5 129.8,251.2 130.2,252.2 130.5,253.3 130.8,254.6 130.9,255.9 130.8,257.2 130.3,258.5 129.6,259.6 128.7,260.5 127.5,261.1 126.3,261.6 124.8,261.9 124.5,262.7 123.8,263.3 123.1,263.7 122.7,264.0 122.6,264.3 122.7,264.5 123.2,264.8 123.8,265.3 124.6,265.9 125.4,266.7 126.2,267.7 126.8,268.9 127.2,270.3 127.4,271.7 127.3,273.1 126.9,274.4 126.3,275.6 124.6,276.7 123.5,277.0 122.5,277.2 121.7,277.2 121.1,277.3 120.8,277.4 120.7,277.6 120.8,278.0 121.1,278.6 121.4,279.4 121.7,280.4 122.0,281.6 122.0,282.9 121.8,284.2 121.4,285.5 120.7,286.7 119.9,287.8 118.8,288.6 117.7,289.3 116.5,289.7 115.4,289.9 114.5,290.1 113.7,290.1 113.2,290.2 113.0,290.3 113.0,290.6 113.2,291.1 113.5,291.7 113.8,292.6 114.4,294.0 114.3,295.3 113.9,296.6 113.3,297.8 112.4,299.0 111.4,299.9 110.2,300.6 108.9,301.0 107.6,301.3 106.4,301.3 105.4,301.2 104.5,301.1 103.9,301.0 103.6,301.0 103.5,301.2 103.5,301.7 103.6,302.4 103.8,303.3 103.8,304.4 103.7,305.7 103.4,307.0 102.8,308.2 102.0,309.4 101.0,310.3 100.5,310.6 99.6,311.6 98.5,312.3 97.4,312.9 96.3,313.2 95.5,313.4 94.9,313.6 94.5,313.7 94.5,314.0 94.7,314.3 95.0,314.9 95.5,315.7 96.0,316.7 96.4,317.8 96.6,319.2 96.6,320.5 96.4,321.9 95.8,323.2 95.1,324.4 94.1,325.4 93.0,326.2 91.9,326.7 90.9,327.1 90.0,327.3 89.4,327.5 89.0,327.6 89.4,327.3 89.4,327.6 89.5,328.2 89.7,329.0 89.9,330.0 89.9,331.2 89.8,332.5 89.5,333.8 88.9,335.0 89.3,337.1 88.0,338.2 86.5,338.9 84.8,339.3 83.1,339.3 81.6,339.1 80.3,338.7 79.3,338.2 78.7,337.8 78.5,337.5 78.6,337.6 79.0,337.9 79.6,338.7 80.2,339.7 79.5,340.5 80.7,341.6 81.6,343.1 82.3,344.7 82.5,346.4 82.2,348.1 81.5,349.6 80.4,351.0 79.1,352.1 77.7,352.9 76.2,353.3 75.0,353.6 74.1,353.6 73.5,353.5 73.5,353.5 73.9,353.5 74.6,353.7 75.7,354.2 76.9,355.0 78.1,356.1 79.2,357.4 79.6,358.2 80.3,359.7 80.6,361.4 80.5,363.1 79.9,364.7 79.0,366.2 77.8,367.4 76.5,368.3 75.3,369.0 74.3,369.3 73.7,369.4 73.5,369.4 73.8,369.3 74.5,369.3 75.7,369.4 77.0,369.8 78.5,370.5 79.8,371.6 81.0,372.8 81.8,374.4 82.2,376.0 82.2,377.8 81.6,379.4 80.7,380.9 79.6,382.2 78.7,383.6 78.1,384.1 77.6,384.3 77.4,384.4 77.2,384.2 77.3,384.0 77.6,383.8 78.1,383.9 79.3,386.5 80.0,387.2 80.6,388.0 82.0,388.1 82.7,389.2 83.2,390.5 83.3,391.9 83.1,393.2 83.6,393.8 82.3,394.9 80.8,396.1 79.5,397.1 78.3,397.9 77.5,398.7 77.1,399.3 77.4,399.8 78.3,398.9 79.2,399.7 80.5,400.6 82.0,401.6 83.3,402.8 84.5,404.0 85.3,405.2 85.6,406.4 85.3,407.4 84.6,408.4 83.3,409.3 81.8,410.0 80.1,410.5 78.4,411.0 76.9,411.5 78.7,412.1 78.4,412.8 78.3,413.5 78.3,414.2 78.5,415.0 78.7,415.8 78.9,416.7 79.5,417.4 80.0,418.2 80.4,419.0 80.7,419.9 80.9,420.8 80.9,421.8 80.8,422.7 80.6,423.6 80.3,424.5 80.0,425.4 79.7,426.2 79.5,427.0 79.4,427.7 79.4,428.4 79.6,429.1 79.9,429.7 80.3,430.4 80.8,431.1 81.4,431.8 81.9,432.6 82.4,433.4 82.8,434.3 83.0,435.2 83.1,436.1 83.1,436.9 83.0,437.9 82.9,438.8 82.7,439.7 82.4,440.6 82.3,441.4 82.2,442.2 82.2,442.9 82.4,443.6 82.7,444.2 83.2,444.9 83.8,445.5 84.4,446.2 84.9,444.4 86.1,445.4 87.1,446.8 87.9,448.4 88.4,450.2 88.5,452.0 88.4,453.7 87.9,455.2 87.3,456.5 86.5,457.4 85.7,458.0 85.1,458.3 84.7,458.3 84.5,458.1 84.7,457.9 85.3,457.7 85.4,458.7 86.4,458.5 87.7,458.6 89.1,459.0 90.6,459.7 92.0,460.7 93.3,462.0 94.2,463.6 94.9,465.2 95.2,466.8 95.6,469.0 95.6,470.1 95.4,470.8 95.0,471.2 94.5,471.3 94.1,471.0 93.9,470.7 93.9,470.2 94.2,469.8 94.8,469.6 95.7,469.7 96.9,470.1 101.5,472.2 102.4,476.3 102.3,477.5 101.8,478.5 100.8,479.2 99.4,479.6 97.8,479.7 96.0,479.8 94.3,479.7 92.7,479.6 91.4,479.6 90.6,479.8 90.2,480.3 90.4,481.0 90.9,481.9 91.7,483.1 92.7,484.5 93.7,486.0 94.5,487.5 95.0,489.0 95.2,490.2 94.8,491.3 94.0,492.1 92.8,492.6 91.3,492.8 89.5,492.9 87.7,492.9 86.1,492.8 84.7,492.5 83.7,492.6 83.2,492.9 83.1,493.5 83.4,494.4 84.1,495.6 85.0,497.1 85.9,498.7 86.7,500.3 87.2,501.8 87.3,503.1 87.0,504.2 86.2,505.0 84.9,505.5 83.4,505.7 81.6,505.6 79.8,505.5 78.1,505.2 76.7,505.1 75.6,505.2 75.1,505.5 74.9,506.1 75.2,506.9 75.9,508.1 76.7,509.5 77.6,511.0 78.4,512.6 79.0,514.1 79.2,515.4 79.0,516.6 78.3,517.4 77.3,518.0 75.8,518.3 74.2,518.3 72.4,518.2 70.7,518.0 69.1,517.8 67.9,517.7 67.1,517.9 66.8,518.3 66.9,519.0 67.4,520.1 68.1,521.3 69.0,522.8 69.9,524.3 70.5,526.1 70.7,527.6 70.7,528.9 70.2,529.8 69.2,530.5 67.9,530.8 66.4,530.8 64.7,530.5 62.9,530.2 61.3,529.9 59.9,529.6 58.9,529.6 58.3,529.8 58.1,530.3 58.3,531.2 58.8,532.4 59.5,533.8 60.3,535.4 60.9,537.1 61.4,538.6 61.5,540.0 61.2,541.1 61.3,540.5 57.8,541.2 57.1,542.4 56.3,543.3 55.5,544.1 54.8,544.6 54.2,544.9 53.7,545.1 53.5,545.2 53.4,545.3 53.5,545.4 53.7,545.7 54.0,546.2 54.0,547.6 54.7,548.7 55.2,549.9 55.6,551.1 55.7,552.4 55.5,553.6 55.0,554.8 54.3,555.8 53.3,556.6 52.2,557.3 51.1,557.9 50.0,558.3 49.1,558.6 48.6,558.3 48.1,558.6 48.0,558.9 48.1,559.5 48.5,560.2 48.9,561.2 49.4,562.3 49.7,563.6 49.9,564.9 49.8,566.3 49.5,567.5 49.2,569.4 47.8,570.9 46.3,572.0 44.6,572.7 45.2,573.5 44.1,574.2 43.1,574.5 42.4,574.4 42.0,574.1 42.0,573.8 42.5,573.4 43.3,573.3 44.4,573.4 45.7,573.9 47.0,574.8 48.2,576.2 49.2,577.8 49.8,579.8 50.0,581.8 49.8,583.8 49.2,585.6 48.3,587.1 47.3,588.3 46.2,589.0 45.2,589.3 44.4,589.3 44.0,589.0 44.0,588.7 44.4,588.3 45.1,588.1 46.2,588.2 47.5,588.7 48.0,593.0" fill="none" stroke="#000" stroke-width="1" stroke-linejoin="round"/>
<polyline points="209.0,104.7 311.3,104.7 310.1,88.7 322.4,91.6 340.0,92.3 421.2,91.1 487.7,94.3 580.0,96.3 636.7,96.3 786.8,94.9 806.0,97.7" fill="none" stroke="#000" stroke-width="1" stroke-linejoin="round"/>
<polyline points="637.0,95.8 638.2,94.4 639.3,93.1 640.9,92.8 642.8,93.9 644.1,92.9 645.2,91.3 646.9,91.5 648.7,91.9 650.2,91.5 651.1,89.4 652.8,89.6 654.6,90.1 655.7,88.6 656.9,87.4 658.8,88.1 660.5,88.3 661.6,86.9 662.8,85.6 664.8,86.8 666.1,85.8 667.3,84.3 668.7,83.9 670.6,84.5 672.2,84.6 673.3,82.8 674.5,81.7 676.1,82.1 678.0,81.3 678.8,79.8 678.3,77.4 680.5,76.8 681.9,75.7 681.8,73.3 683.1,72.4 685.0,73.1 686.4,72.4 687.4,70.8 688.7,70.1 690.5,70.4 692.2,70.6 693.3,69.2 694.3,67.6 696.3,68.1 697.6,66.6 697.2,64.6 696.9,62.6 697.9,61.0 699.7,60.1 700.6,58.7 700.6,56.6 701.4,55.1 703.1,54.4 705.0,53.9 705.9,52.6 706.0,50.4 707.0,48.7 708.9,49.0 710.7,49.0 711.4,47.0 712.4,45.8 714.5,46.3 716.1,46.0 716.7,43.9 718.0,43.1 719.9,43.4 721.5,43.1 722.5,41.8 723.4,40.1 724.8,39.4 726.7,39.8 728.2,39.3 728.9,37.4 730.0,36.1 731.6,35.9 733.6,36.2 734.9,35.6 735.8,33.8 736.7,32.4 739.1,33.3 740.2,32.1 740.3,29.8 742.4,30.0 743.8,29.2 744.4,27.5 745.4,26.4 747.1,26.0 748.6,25.3 749.3,23.8 750.2,22.5 751.8,22.1 753.3,21.4 753.8,19.6 755.0,18.6 756.9,18.5 758.0,17.4 758.7,15.9 759.7,14.7 761.4,14.7 763.2,13.6 765.1,13.2 766.4,12.5 766.6,14.2 766.4,15.8 765.5,17.0 764.1,18.2 764.1,19.8 765.5,20.6 766.4,21.9 767.1,23.4 768.7,23.9 769.8,25.1 770.4,26.6 771.6,27.6 773.1,28.2 774.1,29.5 774.7,31.0 776.0,31.9 777.5,32.6 778.4,33.9 779.3,35.3 780.7,36.0 782.3,36.5 783.2,38.0 784.4,39.0 785.8,39.7 787.3,40.3 788.5,41.3 789.7,42.8 791.1,42.1 792.2,40.8 793.4,39.9 795.4,40.3 796.7,39.4 797.5,37.6 799.2,37.7 800.9,37.5 801.8,35.9 803.0,34.9 805.0,35.3 806.0,34.0" fill="none" stroke="#000" stroke-width="1" stroke-linejoin="round"/>
<polyline points="304.3,6.2 305.5,7.6 306.8,9.0 306.0,10.9 305.6,12.6 307.0,14.0 308.2,15.4 307.5,16.7 305.7,16.7 304.5,18.7 302.8,19.0 300.9,18.2 299.2,18.4 297.8,19.6 296.5,20.9 294.5,19.6 293.3,20.9 292.0,22.3 290.1,21.3 288.5,21.2 287.4,23.2 286.0,23.9 284.1,23.3 282.3,24.0 282.4,26.5 280.9,27.5 278.6,27.7 278.4,29.6 278.8,31.4 277.1,32.8 276.7,34.4 278.1,36.2 277.4,37.8 276.0,40.0 277.6,40.8 279.6,41.2 280.2,42.8 280.2,44.9 282.1,45.4 283.5,47.2 281.5,47.6 280.6,48.9 280.6,50.9 279.9,52.4 278.2,52.3 276.8,51.9 275.1,52.8 273.5,53.2 272.1,52.5 271.1,50.8 269.3,50.9 267.4,50.9 266.7,48.7 264.9,48.6 263.0,48.9 262.0,47.1 260.8,46.0 258.8,47.1 257.5,46.2 256.6,44.4 254.9,44.7 253.0,45.2 251.8,43.9 250.9,42.2 249.6,41.4 247.6,41.9 246.0,41.6 245.1,40.0 243.2,38.5 242.1,40.0 240.8,41.5 238.7,40.5 237.1,41.7 237.1,43.7 235.5,44.5 233.7,45.1 232.8,46.4 233.1,48.7 231.7,49.7 229.4,49.8 228.8,51.7 228.3,53.7 225.8,53.6 225.1,55.4" fill="none" stroke="#000" stroke-width="1" stroke-linejoin="round"/>
<polyline points="784.6,96.2 785.4,97.9 785.9,99.6 784.6,100.9 783.6,102.4 784.7,104.1 784.8,105.7 783.4,107.1 782.5,108.5 783.4,110.3 783.7,111.9 782.2,112.8 780.6,113.1 779.7,114.9 778.7,116.3 776.5,115.8 775.4,117.1 774.3,118.3 772.6,118.6 771.0,119.1 769.9,120.5 768.5,121.2 766.7,121.6 765.8,122.9 765.6,124.6 764.6,125.9 763.1,126.7 762.5,128.3 762.2,129.9 760.5,130.7 759.7,132.1 759.5,133.9 758.2,134.9 756.9,135.9 756.7,137.7 755.6,139.1 754.1,138.3 752.5,138.0 750.9,138.5 749.4,137.6 748.0,137.0 746.3,137.2 744.7,137.5 743.3,136.4 741.8,135.8 740.1,136.6 739.0,136.5 737.1,136.6 735.7,137.2 735.2,139.0 733.8,139.8 731.9,139.7 730.9,141.0 730.4,142.8 729.2,143.7 727.0,143.3 725.8,144.2 725.5,146.4 724.3,147.3 722.1,146.8 720.7,147.6 720.3,149.6 718.5,150.4 718.1,148.5 716.8,147.6 714.7,147.4 714.0,145.9 712.8,144.0 711.3,144.4 710.8,146.5 709.6,147.4 707.4,146.8 706.2,147.7 705.6,149.7 704.3,150.4 702.4,150.2 701.0,150.7 700.5,152.9 698.8,153.0 696.9,152.8 695.6,154.1 695.8,156.1 695.0,157.5 693.3,158.4 692.1,159.6 692.7,161.8 691.8,163.2 690.3,163.7 688.9,164.5 688.0,166.3 686.2,166.0 684.5,165.7 683.5,167.3 682.3,168.6 680.5,168.2 678.8,168.1 677.9,169.8 676.8,170.8 674.9,170.5 673.3,170.8 672.7,172.8 671.7,173.9 669.9,173.9 668.1,173.8 667.2,175.2 666.5,177.0 664.4,176.4 663.0,177.0 662.5,179.1 661.3,180.1 659.3,179.5 658.0,180.3 657.5,182.4 655.7,182.4 654.0,182.3 653.2,184.0 652.3,185.4 650.4,185.2 648.9,185.6 648.1,187.9 646.6,188.0 644.9,186.5 643.5,187.7 642.1,188.8 640.4,187.7 638.9,187.4 637.5,188.8 636.1,189.4 634.4,188.4 632.9,188.8 631.6,190.3 630.1,190.1 628.4,188.9 626.9,189.9 626.2,191.6 624.4,191.6 622.6,191.5 621.3,192.4 620.8,194.6 619.4,195.1 617.3,194.5 616.1,195.6 615.5,197.6 613.6,197.3 611.9,197.6 611.8,199.4 610.9,200.7 608.9,201.4 608.5,202.9 608.9,204.9 607.5,205.9 606.1,206.8 606.1,208.6 606.3,210.4 605.0,211.5 603.8,211.8 602.4,212.9 601.1,214.3 599.3,213.3 597.6,213.0 596.3,214.8 594.9,215.5 593.0,214.1 591.6,215.2 591.0,215.6 589.7,217.0 588.7,218.4 589.9,220.1 590.3,221.6 588.6,223.0 588.6,224.5 589.8,226.2 588.6,227.5 587.6,229.0 589.2,230.7 588.9,232.2 587.1,233.5 587.0,235.0 587.8,236.6 588.5,238.2 587.3,239.6" fill="none" stroke="#000" stroke-width="1" stroke-linejoin="round"/>
<polyline points="145.9,238.7 230.0,238.7 299.3,238.2 450.0,238.5 587.3,239.6 677.6,237.8 703.4,231.4 731.9,221.0 744.8,220.5 806.0,223.5" fill="none" stroke="#000" stroke-width="1" stroke-linejoin="round"/>
<polyline points="299.3,238.2 306.4,246.7 307.8,249.5 303.6,289.2 297.9,348.6 290.8,400.0 285.2,456.7 279.5,513.3 280.9,570.0 284.5,600.0 284.5,645.0" fill="none" stroke="#000" stroke-width="1" stroke-linejoin="round"/>
<polyline points="492.4,239.6 499.5,277.8 510.8,348.6 519.3,400.0 525.0,428.3 539.2,468.0 537.7,476.5 544.8,482.2 533.5,493.5 530.7,504.8 527.8,524.6 533.5,541.6 530.7,575.6 537.7,595.5 542.0,604.0 546.2,619.5" fill="none" stroke="#000" stroke-width="1" stroke-linejoin="round"/>
<polyline points="538.0,594.5 344.6,594.9 341.3,605.0 350.0,616.0 358.6,623.4 358.6,632.0 356.1,635.7" fill="none" stroke="#000" stroke-width="1" stroke-linejoin="round"/>
<polyline points="546.2,619.5 640.0,624.8 681.9,628.0 744.7,632.1 746.8,648.9 757.3,651.0 759.3,632.1 757.3,613.3 767.7,610.1 786.6,617.5 797.0,620.0" fill="none" stroke="#000" stroke-width="1" stroke-linejoin="round"/>
<polyline points="676.9,238.5 676.5,240.3 676.2,242.1 674.4,242.6 672.7,243.3 672.2,244.9 672.1,247.0 670.0,247.3 668.5,248.1 668.8,250.5 667.3,251.2 665.5,251.8 664.8,253.3 664.8,255.4 663.2,256.1 661.2,257.2 661.4,258.8 662.7,260.3 662.9,261.9 661.1,263.4 661.9,265.1 663.8,265.3 664.0,267.5 665.4,268.2 667.3,268.3 668.4,269.4 668.8,271.5 670.6,271.6 672.4,271.8 672.6,274.1 673.7,275.3 675.8,275.0 677.2,275.8 677.5,277.9 678.6,279.1 680.7,278.9 682.2,279.5 682.8,281.2 683.5,282.9 685.3,283.4 686.9,282.6 688.4,283.1 689.7,284.7 691.4,283.6 693.0,283.2 693.7,284.7 694.9,285.8 696.5,286.7 696.2,288.6 696.1,290.3 697.6,291.2 699.1,292.2 698.8,294.0 698.7,295.8 699.8,296.9 701.7,297.6 701.2,299.6 701.2,301.2 702.9,302.1 704.2,303.2 704.1,304.9 703.9,306.7 705.7,307.5 706.6,308.6 706.2,310.7 707.4,311.7 709.3,312.3 708.9,314.4 709.5,315.8 711.4,316.4 712.0,317.8 711.9,319.7 712.5,321.1 714.3,321.7 715.6,322.8 715.5,324.6 715.7,326.3 717.2,327.2 718.9,327.9 719.2,329.3 719.8,331.0 721.2,331.8 723.1,331.7 724.1,332.9 724.8,334.6 725.8,335.7 727.5,335.9 729.2,336.3 729.7,338.2 730.7,339.3 732.8,339.1 733.7,340.4 734.3,342.2 735.9,342.6 737.7,342.7 738.7,343.9 738.9,345.7 740.4,346.6 741.9,347.4 742.8,348.7 742.5,350.7 743.6,351.9 745.5,352.5 746.1,353.9 746.0,355.9 746.8,357.3 748.9,357.7 749.3,359.3 749.6,361.4 751.0,361.9 753.1,361.4 753.9,363.0 754.7,364.6 756.7,364.1 758.0,364.8 758.5,366.9 760.3,366.8 762.0,366.9 762.2,368.7 763.8,369.8 765.2,371.0 765.5,372.7 765.3,374.7 765.8,376.2 768.2,376.9 768.4,378.6 768.1,380.6 769.7,381.6 771.3,382.5 771.1,384.4 771.2,386.2 773.3,386.9 774.2,388.3 773.7,390.4 774.9,391.5 776.8,392.3 776.9,394.1 776.8,395.9 778.3,397.0 779.9,398.4 780.4,401.1 782.4,401.0 783.9,401.5 784.5,403.2 785.3,404.7 786.5,405.6 788.4,405.6 789.8,406.3 790.1,408.3 791.3,409.3 793.0,409.5 794.6,410.5 793.8,412.5 795.3,413.7 796.3,415.1 796.5,416.7 795.7,418.7 796.7,420.1 798.4,421.3 797.7,423.2 798.1,424.8 799.6,426.0 800.4,427.4 799.6,429.3 800.2,430.8 802.0,431.7 802.6,433.1 802.5,434.8 802.4,436.5 803.7,437.7 805.0,438.9 804.4,440.7 804.6,442.2 805.8,443.5 806.0,445.0" fill="none" stroke="#000" stroke-width="1" stroke-linejoin="round"/>
<polyline points="6.0,415.2 80.0,415.2" fill="none" stroke="#000" stroke-width="1" stroke-linejoin="round"/>
<polyline points="184.8,594.1 186.1,596.1 184.8,597.4 183.3,598.6 183.6,600.3 184.3,602.2 183.9,603.7 181.9,604.8 181.6,606.4 182.5,608.3 181.5,609.6 180.1,611.0 181.6,612.8 181.0,614.4 179.5,615.7 179.9,617.4 181.0,619.1 179.9,620.6 178.6,622.0 179.2,623.7 180.1,625.4 179.0,626.9 177.9,628.3 178.1,630.1 179.7,631.2 180.1,632.7 178.9,634.6 179.5,636.1 181.5,637.1 181.0,638.8 181.2,640.6 183.1,641.0 184.6,641.7 185.3,643.1 185.6,644.8 186.0,646.4 188.2,646.5 189.0,647.8 188.8,649.9 190.7,650.4 192.4,651.5 191.6,653.3 191.4,655.1 192.9,656.4 193.4,658.0 192.2,659.9 192.7,661.5 194.7,662.8 194.0,664.6" fill="none" stroke="#000" stroke-width="1" stroke-linejoin="round"/>
<polyline points="45.3,594.3 185.6,594.3" fill="none" stroke="#000" stroke-width="1" stroke-linejoin="round"/>
<path d="M418.49 248.11A159.35 159.35 0 1 1 394.51 248.11" fill="none" stroke="#d0d0d0" stroke-width="1"/>
<path d="M418.50 128.09A279.17 279.17 0 1 1 394.50 128.09" fill="none" stroke="#d0d0d0" stroke-width="1"/>
<path d="M418.50 8.18A399.00 399.00 0 1 1 394.50 8.18" fill="none" stroke="#d0d0d0" stroke-width="1"/>
<circle cx="406.5" cy="407.0" r="519.5" fill="none" stroke="#d0d0d0" stroke-width="1"/>
<circle cx="406.5" cy="407.0" r="39.5" fill="none" stroke="#ff1010" stroke-width="1.3"/>
<text x="407.0" y="371.5" text-anchor="middle" font-family="Liberation Sans" font-size="10.5" fill="#fff8a8" letter-spacing="0.8">31</text>
<text x="407.0" y="251.7" text-anchor="middle" font-family="Liberation Sans" font-size="10.5" fill="#fff8a8" letter-spacing="0.8">125</text>
<text x="407.0" y="131.8" text-anchor="middle" font-family="Liberation Sans" font-size="10.5" fill="#fff8a8" letter-spacing="0.8">219</text>
<text x="407.0" y="12.0" text-anchor="middle" font-family="Liberation Sans" font-size="10.5" fill="#fff8a8" letter-spacing="0.8">313</text>
<circle cx="524.6" cy="40.6" r="4" fill="none" stroke="#ffff00" stroke-width="1.2"/><path d="M522.1 40.6h5" stroke="#ffff00" stroke-width="1.2"/><path d="M524.6 38.1v5" stroke="#ffff00" stroke-width="1.2"/>
<circle cx="550.5" cy="44.3" r="4" fill="none" stroke="#ffff00" stroke-width="1.2"/><path d="M548.0 44.3h5" stroke="#ffff00" stroke-width="1.2"/>
<path d="M575.3 27.0h7" stroke="#ffff00" stroke-width="1.5"/>
<path d="M511.3 86.2h7" stroke="#ffff00" stroke-width="1.5"/>
<path d="M585.9 637.6h7" stroke="#ffff00" stroke-width="1.5"/><path d="M589.4 634.1v7" stroke="#ffff00" stroke-width="1.5"/>
<path d="M528.9 660.5h7" stroke="#ffff00" stroke-width="1.5"/>
<path d="M553.8 661.5h7" stroke="#ffff00" stroke-width="1.5"/>
<path d="M585.9 669.5h7" stroke="#f07020" stroke-width="1.5"/>
<path d="M573.8 675.5h7" stroke="#f07020" stroke-width="1.5"/><path d="M577.3 672.0v7" stroke="#f07020" stroke-width="1.5"/>
<circle cx="628.3" cy="668.5" r="4" fill="none" stroke="#ffc000" stroke-width="1.2"/><path d="M625.8 668.5h5" stroke="#ffc000" stroke-width="1.2"/><path d="M628.3 666.0v5" stroke="#ffc000" stroke-width="1.2"/>
<path d="M488.9 691.4h7" stroke="#ffff00" stroke-width="1.5"/><path d="M492.4 687.9v7" stroke="#ffff00" stroke-width="1.5"/>
<path d="M578.9 698.3h7" stroke="#f07020" stroke-width="1.5"/>
<path d="M542.6 705.1h7" stroke="#f07020" stroke-width="1.5"/><path d="M546.1 701.6v7" stroke="#f07020" stroke-width="1.5"/>
<circle cx="629.3" cy="693.1" r="4" fill="none" stroke="#ffff00" stroke-width="1.2"/><path d="M626.8 693.1h5" stroke="#ffff00" stroke-width="1.2"/>
<path d="M619.9 698.0h7" stroke="#ffff00" stroke-width="1.5"/><path d="M623.4 694.5v7" stroke="#ffff00" stroke-width="1.5"/>
<path d="M623.8 704.4h7" stroke="#f07020" stroke-width="1.5"/><path d="M627.3 700.9v7" stroke="#f07020" stroke-width="1.5"/>
<circle cx="609.3" cy="705.8" r="4" fill="none" stroke="#ffff00" stroke-width="1.2"/><path d="M606.8 705.8h5" stroke="#ffff00" stroke-width="1.2"/><path d="M609.3 703.3v5" stroke="#ffff00" stroke-width="1.2"/>
<circle cx="576.3" cy="710.0" r="4" fill="none" stroke="#ffff00" stroke-width="1.2"/><path d="M573.8 710.0h5" stroke="#ffff00" stroke-width="1.2"/>
<path d="M578.5 713.5h7" stroke="#ffc000" stroke-width="1.5"/><path d="M582.0 710.0v7" stroke="#ffc000" stroke-width="1.5"/>
<circle cx="592.5" cy="714.2" r="4" fill="none" stroke="#f07020" stroke-width="1.2"/><path d="M590.0 714.2h5" stroke="#f07020" stroke-width="1.2"/><path d="M592.5 711.7v5" stroke="#f07020" stroke-width="1.2"/>
<path d="M596.0 716.3h7" stroke="#ffff00" stroke-width="1.5"/>
<path d="M609.4 714.2h7" stroke="#ffc000" stroke-width="1.5"/>
<path d="M617.1 712.1h7" stroke="#ffc000" stroke-width="1.5"/><path d="M620.6 708.6v7" stroke="#ffc000" stroke-width="1.5"/>
<circle cx="631.6" cy="712.1" r="4" fill="none" stroke="#ffc000" stroke-width="1.2"/><path d="M629.1 712.1h5" stroke="#ffc000" stroke-width="1.2"/>
<circle cx="628.3" cy="716.3" r="4" fill="none" stroke="#f07020" stroke-width="1.2"/><path d="M625.8 716.3h5" stroke="#f07020" stroke-width="1.2"/>
<path d="M580.5 719.1h7" stroke="#ffc000" stroke-width="1.5"/>
<path d="M518.0 724.3h7" stroke="#ff9020" stroke-width="1.5"/>
<path d="M604.7 723.3h7" stroke="#ffc000" stroke-width="1.5"/><path d="M608.2 719.8v7" stroke="#ffc000" stroke-width="1.5"/>
<path d="M589.7 726.9h7" stroke="#ffc000" stroke-width="1.5"/><path d="M593.2 723.4v7" stroke="#ffc000" stroke-width="1.5"/>
<circle cx="534.1" cy="746.4" r="4" fill="none" stroke="#ffff00" stroke-width="1.2"/><path d="M531.6 746.4h5" stroke="#ffff00" stroke-width="1.2"/>
<circle cx="549.6" cy="744.3" r="4" fill="none" stroke="#ffc000" stroke-width="1.2"/><path d="M547.1 744.3h5" stroke="#ffc000" stroke-width="1.2"/><path d="M549.6 741.8v5" stroke="#ffc000" stroke-width="1.2"/>
<circle cx="540.5" cy="752.7" r="4" fill="none" stroke="#ffc000" stroke-width="1.2"/><path d="M538.0 752.7h5" stroke="#ffc000" stroke-width="1.2"/>
<path d="M525.0 755.3h7" stroke="#ffc000" stroke-width="1.5"/>
<circle cx="549.3" cy="765.4" r="4" fill="none" stroke="#ffff00" stroke-width="1.2"/><path d="M546.8 765.4h5" stroke="#ffff00" stroke-width="1.2"/><path d="M549.3 762.9v5" stroke="#ffff00" stroke-width="1.2"/>
<circle cx="562.5" cy="769.3" r="4" fill="none" stroke="#ffff00" stroke-width="1.2"/><path d="M560.0 769.3h5" stroke="#ffff00" stroke-width="1.2"/><path d="M562.5 766.8v5" stroke="#ffff00" stroke-width="1.2"/>
<circle cx="539.5" cy="773.1" r="4" fill="none" stroke="#ff9020" stroke-width="1.2"/><path d="M537.0 773.1h5" stroke="#ff9020" stroke-width="1.2"/>
<path d="M554.8 784.4h7" stroke="#ff9020" stroke-width="1.5"/><path d="M558.3 780.9v7" stroke="#ff9020" stroke-width="1.5"/>
<circle cx="533.4" cy="795.3" r="4" fill="none" stroke="#ff9020" stroke-width="1.2"/><path d="M530.9 795.3h5" stroke="#ff9020" stroke-width="1.2"/>
<circle cx="502.5" cy="799.5" r="4" fill="none" stroke="#ffff00" stroke-width="1.2"/><path d="M500.0 799.5h5" stroke="#ffff00" stroke-width="1.2"/>
<path d="M570.0 799.5h7" stroke="#ff9020" stroke-width="1.5"/><path d="M573.5 796.0v7" stroke="#ff9020" stroke-width="1.5"/>
<circle cx="597.4" cy="733.7" r="4" fill="none" stroke="#ffc000" stroke-width="1.2"/><path d="M594.9 733.7h5" stroke="#ffc000" stroke-width="1.2"/><path d="M597.4 731.2v5" stroke="#ffc000" stroke-width="1.2"/>
<circle cx="599.5" cy="746.4" r="4" fill="none" stroke="#ff9020" stroke-width="1.2"/><path d="M597.0 746.4h5" stroke="#ff9020" stroke-width="1.2"/><path d="M599.5 743.9v5" stroke="#ff9020" stroke-width="1.2"/>
<circle cx="619.6" cy="747.4" r="4" fill="none" stroke="#ffff00" stroke-width="1.2"/><path d="M617.1 747.4h5" stroke="#ffff00" stroke-width="1.2"/>
<path d="M619.9 746.4h7" stroke="#00e8e8" stroke-width="1.5"/>
<circle cx="632.5" cy="757.4" r="4" fill="none" stroke="#ff9020" stroke-width="1.2"/><path d="M630.0 757.4h5" stroke="#ff9020" stroke-width="1.2"/><path d="M632.5 754.9v5" stroke="#ff9020" stroke-width="1.2"/>
<circle cx="611.5" cy="771.4" r="4" fill="none" stroke="#ff9020" stroke-width="1.2"/><path d="M609.0 771.4h5" stroke="#ff9020" stroke-width="1.2"/><path d="M611.5 768.9v5" stroke="#ff9020" stroke-width="1.2"/>
<circle cx="597.4" cy="780.4" r="4" fill="none" stroke="#ff9020" stroke-width="1.2"/><path d="M594.9 780.4h5" stroke="#ff9020" stroke-width="1.2"/><path d="M597.4 777.9v5" stroke="#ff9020" stroke-width="1.2"/>
<circle cx="610.5" cy="801.9" r="4" fill="none" stroke="#ff9020" stroke-width="1.2"/><path d="M608.0 801.9h5" stroke="#ff9020" stroke-width="1.2"/><path d="M610.5 799.4v5" stroke="#ff9020" stroke-width="1.2"/>
<path d="M626.9 794.2h7" stroke="#ffc000" stroke-width="1.5"/>
<circle cx="637.5" cy="743.6" r="4" fill="none" stroke="#ffff00" stroke-width="1.2"/><path d="M635.0 743.6h5" stroke="#ffff00" stroke-width="1.2"/>
<circle cx="659.4" cy="679.4" r="4" fill="none" stroke="#ff9020" stroke-width="1.2"/><path d="M656.9 679.4h5" stroke="#ff9020" stroke-width="1.2"/><path d="M659.4 676.9v5" stroke="#ff9020" stroke-width="1.2"/>
<path d="M665.0 690.3h7" stroke="#ffff00" stroke-width="1.5"/>
<path d="M692.4 681.5h7" stroke="#ffc000" stroke-width="1.5"/>
<circle cx="707.5" cy="690.3" r="4" fill="none" stroke="#ffff00" stroke-width="1.2"/><path d="M705.0 690.3h5" stroke="#ffff00" stroke-width="1.2"/>
<path d="M669.9 719.4h7" stroke="#ffff00" stroke-width="1.5"/><path d="M673.4 715.9v7" stroke="#ffff00" stroke-width="1.5"/>
<circle cx="698.3" cy="717.3" r="4" fill="none" stroke="#ffc000" stroke-width="1.2"/><path d="M695.8 717.3h5" stroke="#ffc000" stroke-width="1.2"/>
<circle cx="666.4" cy="736.3" r="4" fill="none" stroke="#ffc000" stroke-width="1.2"/><path d="M663.9 736.3h5" stroke="#ffc000" stroke-width="1.2"/><path d="M666.4 733.8v5" stroke="#ffc000" stroke-width="1.2"/>
<circle cx="702.5" cy="742.4" r="4" fill="none" stroke="#ffc000" stroke-width="1.2"/><path d="M700.0 742.4h5" stroke="#ffc000" stroke-width="1.2"/><path d="M702.5 739.9v5" stroke="#ffc000" stroke-width="1.2"/>
<path d="M651.8 743.2h7" stroke="#ffff00" stroke-width="1.5"/>
<path d="M650.2 723.0h7" stroke="#ffff00" stroke-width="1.5"/>
<circle cx="656.4" cy="758.2" r="4" fill="none" stroke="#ffc000" stroke-width="1.2"/><path d="M653.9 758.2h5" stroke="#ffc000" stroke-width="1.2"/>
<circle cx="676.4" cy="755.1" r="4" fill="none" stroke="#ffc000" stroke-width="1.2"/><path d="M673.9 755.1h5" stroke="#ffc000" stroke-width="1.2"/><path d="M676.4 752.6v5" stroke="#ffc000" stroke-width="1.2"/>
<circle cx="673.6" cy="759.4" r="4" fill="none" stroke="#ffc000" stroke-width="1.2"/><path d="M671.1 759.4h5" stroke="#ffc000" stroke-width="1.2"/><path d="M673.6 756.9v5" stroke="#ffc000" stroke-width="1.2"/>
<circle cx="667.3" cy="763.6" r="4" fill="none" stroke="#ffc000" stroke-width="1.2"/><path d="M664.8 763.6h5" stroke="#ffc000" stroke-width="1.2"/>
<circle cx="667.3" cy="766.4" r="4" fill="none" stroke="#ffc000" stroke-width="1.2"/><path d="M664.8 766.4h5" stroke="#ffc000" stroke-width="1.2"/><path d="M667.3 763.9v5" stroke="#ffc000" stroke-width="1.2"/>
<path d="M642.0 766.4h7" stroke="#ffc000" stroke-width="1.5"/>
<path d="M639.9 775.5h7" stroke="#ffc000" stroke-width="1.5"/>
<path d="M731.9 757.5h7" stroke="#ff9020" stroke-width="1.5"/>
</g>
<polyline fill="none" stroke="#ff70c0" stroke-width="1.0" points="940.0,771.2 943.0,777.1 944.9,769.3 947.9,777.1 953.8,769.3 955.8,777.1 957.7,770.2 960.7,771.2 962.7,777.1"/>
<polyline fill="none" stroke="#ff70c0" stroke-width="1.0" points="1048.7,769.3 1049.7,773.2 1053.6,769.3 1056.6,777.1 1058.6,759.4 1060.5,753.5 1062.5,761.4 1064.5,777.1 1083.2,769.3 1084.7,777.1"/>
<polyline fill="none" stroke="#90c8ff" stroke-width="1.0" points="1005.0,777.1 1006.0,769.3 1008.0,764.3 1009.0,766.3 1010.9,769.3 1013.4,777.1 1028.7,777.1 1030.6,769.3 1033.1,769.3 1034.6,773.2"/>
<polyline fill="none" stroke="#90c8ff" stroke-width="1.0" points="1030.0,769.3 1033.0,769.3 1034.9,773.2 1048.7,769.3 1050.7,761.4 1053.2,763.3 1055.6,769.3 1064.5,769.3 1076.3,772.2 1079.3,771.2 1081.7,763.3 1083.7,769.3"/>
<polyline fill="none" stroke="#ff0000" stroke-width="1.2" points="867.9,777.1 869.7,770.6 871.0,768.1 872.2,771.8"/>
<polyline fill="none" stroke="#ff0000" stroke-width="1.5" points="1019.3,766.3 1020.3,761.4 1022.8,761.4 1022.3,767.3"/>
<polyline fill="none" stroke="#00ff00" stroke-width="1.2" points="866.1,774.3 867.9,769.4 870.4,761.4 871.0,766.9 872.8,769.4 874.0,774.3"/>
<polyline fill="none" stroke="#00ff00" stroke-width="1.2" points="940.0,769.3 959.7,769.3 961.2,777.1"/>
<polyline fill="none" stroke="#00ff00" stroke-width="1.2" points="1004.5,769.3 1006.0,761.4 1009.0,761.4 1010.9,769.3 1011.9,761.4 1013.4,761.4 1015.9,777.1 1018.8,769.3 1019.8,761.4 1022.8,761.4 1023.3,769.3 1024.7,777.1 1029.2,777.1 1030.6,761.4 1033.1,761.4 1034.6,769.3 1036.1,777.1"/>
<polyline fill="none" stroke="#00ff00" stroke-width="1.2" points="1030.0,761.4 1033.0,761.4 1034.4,769.3 1035.9,777.1 1051.2,777.1 1052.2,769.3 1054.6,769.3 1057.1,777.1 1078.3,777.1 1080.2,769.3 1081.7,762.4 1083.7,769.3 1085.2,769.3 1088.1,769.3"/>
<polyline fill="none" stroke="#ffffff" stroke-width="1.2" points="822.4,777.1 822.4,761.5 825.7,761.5 826.9,777.1 827.9,777.1 829.5,769.4 832.2,769.4 834.7,777.1 844.5,777.1 846.4,769.4 849.4,769.4 850.7,774.3 851.9,769.4 855.0,769.4 856.8,777.1 866.1,777.1 866.4,765.7 868.5,757.1 869.1,744.8 870.6,738.0 871.6,746.0 871.8,753.4 873.8,753.4 875.0,765.7 875.3,777.1 888.8,777.1 891.3,769.4 894.3,769.4 896.2,777.1 898.7,769.4 901.1,769.4 903.0,777.1 904.8,769.4 907.9,769.4 909.7,777.1 912.2,769.4 915.3,769.4 917.7,777.1 925.7,777.1 927.6,769.4 930.6,769.4 933.1,777.1 936.2,777.1 938.0,770.6 940.5,763.2 944.2,753.4 946.0,761.4 948.5,761.4 950.3,753.4 955.0,753.4"/>
<polyline fill="none" stroke="#ffffff" stroke-width="1.2" points="940.0,763.3 941.5,759.4 944.4,753.5 945.4,760.4 948.9,760.4 950.3,753.5 955.0,753.4"/>
<polyline fill="none" stroke="#ffffff" stroke-width="1.2" points="955.0,753.4 956.7,753.5 958.2,761.4 959.2,765.3 960.2,761.4 961.2,765.3 962.7,768.8 968.6,768.8 969.6,777.1 987.3,777.1 989.3,769.3 992.2,769.3 993.7,777.1 994.7,769.3 998.6,769.3 999.6,777.1 1004.0,777.1 1005.0,753.5 1008.0,753.5 1008.5,746.6 1009.5,753.5 1010.4,755.5 1011.4,753.5 1013.4,760.4 1014.9,767.3 1016.4,777.1 1018.3,777.1 1019.3,753.5 1022.3,753.5 1022.8,760.4 1023.7,760.4 1024.7,777.1 1028.7,777.1 1030.1,758.4 1030.6,746.6 1033.1,746.6 1034.6,759.4 1036.1,777.1 1038.5,777.1 1040.0,773.2"/>
<polyline fill="none" stroke="#ffffff" stroke-width="1.2" points="1030.0,777.1 1031.0,746.6 1033.4,746.6 1034.9,759.4 1036.4,777.1 1038.9,777.1 1040.3,769.3 1043.3,769.3 1044.8,777.1 1047.7,777.1 1048.7,765.3 1049.2,753.5 1051.2,753.5 1052.7,746.6 1053.6,753.5 1054.6,759.4 1055.6,753.5 1057.1,759.4 1058.6,753.5 1060.0,746.6 1061.5,753.5 1064.0,753.5 1065.0,767.3 1066.5,769.3 1067.4,777.1 1068.4,777.1 1069.4,769.3 1077.3,769.3 1079.3,762.4 1081.2,746.6 1082.2,753.5 1083.7,756.5 1085.2,753.5 1088.1,753.5 1088.6,777.1"/>
<line x1="822.5" y1="777.5" x2="1088.5" y2="777.5" stroke="#c8c8c8" stroke-width="1.2"/>
<line x1="1088.5" y1="542.5" x2="1088.5" y2="777.5" stroke="#c8c8c8" stroke-width="1.2"/>
<line x1="1084.0" y1="777.5" x2="1088.5" y2="777.5" stroke="#c8c8c8" stroke-width="1"/>
<line x1="1084.0" y1="738.3" x2="1088.5" y2="738.3" stroke="#c8c8c8" stroke-width="1"/>
<line x1="1084.0" y1="699.2" x2="1088.5" y2="699.2" stroke="#c8c8c8" stroke-width="1"/>
<line x1="1084.0" y1="660.0" x2="1088.5" y2="660.0" stroke="#c8c8c8" stroke-width="1"/>
<line x1="1084.0" y1="620.8" x2="1088.5" y2="620.8" stroke="#c8c8c8" stroke-width="1"/>
<line x1="1084.0" y1="581.7" x2="1088.5" y2="581.7" stroke="#c8c8c8" stroke-width="1"/>
<line x1="1084.0" y1="542.5" x2="1088.5" y2="542.5" stroke="#c8c8c8" stroke-width="1"/>
<text x="1092" y="703.7" class="gl">10</text>
<text x="1092" y="625.3" class="gl">20</text>
<text x="1092" y="547.0" class="gl">30</text>
<line x1="1088.5" y1="777.5" x2="1088.5" y2="780.5" stroke="#c8c8c8" stroke-width="1"/>
<text x="1091.0" y="793" class="gl" text-anchor="middle" letter-spacing="0.8">0</text>
<line x1="1044.2" y1="777.5" x2="1044.2" y2="780.5" stroke="#c8c8c8" stroke-width="1"/>
<text x="1048.2" y="793" class="gl" text-anchor="middle" letter-spacing="0.8">10</text>
<line x1="999.8" y1="777.5" x2="999.8" y2="780.5" stroke="#c8c8c8" stroke-width="1"/>
<text x="1003.8" y="793" class="gl" text-anchor="middle" letter-spacing="0.8">20</text>
<line x1="955.5" y1="777.5" x2="955.5" y2="780.5" stroke="#c8c8c8" stroke-width="1"/>
<text x="959.5" y="793" class="gl" text-anchor="middle" letter-spacing="0.8">30</text>
<line x1="911.2" y1="777.5" x2="911.2" y2="780.5" stroke="#c8c8c8" stroke-width="1"/>
<text x="915.2" y="793" class="gl" text-anchor="middle" letter-spacing="0.8">40</text>
<line x1="866.8" y1="777.5" x2="866.8" y2="780.5" stroke="#c8c8c8" stroke-width="1"/>
<text x="870.8" y="793" class="gl" text-anchor="middle" letter-spacing="0.8">50</text>
<line x1="822.5" y1="777.5" x2="822.5" y2="780.5" stroke="#c8c8c8" stroke-width="1"/>
<text x="826.5" y="793" class="gl" text-anchor="middle" letter-spacing="0.8">60</text>
<text x="1100" y="792.5" class="gl" letter-spacing="0.4">min</text>
</svg>
<div class="box" style="left:812px;top:8px;width:320px;height:320px"></div>
<div class="box" style="left:812px;top:333px;width:320px;height:115px"></div>
<div class="box" style="left:812px;top:453px;width:320px;height:350px"></div>
<div class="btn b" style="left:819px;top:16px;width:58px;height:18px;background:#5e0000">STRIKE</div>
<div class="btn b" style="left:883px;top:16px;width:58px;height:18px;background:#333">NOISE</div>
<div class="btn b" style="left:994px;top:16px;width:128px;height:18px;background:#333;text-align:left"><span style="position:absolute;left:3px;letter-spacing:1.1px">Bng 147°</span><span style="position:absolute;right:3px;color:#00ff00;letter-spacing:1.1px">316mi</span></div>
<div class="btn s" style="left:821px;top:64px;width:82px;height:16px;background:#5a5a5a">Strikes/min</div>
<div class="btn s" style="left:931px;top:64px;width:82px;height:16px;background:#5a5a5a">Close/min</div>
<div class="btn s" style="left:1041px;top:64px;width:82px;height:16px;background:#5a5a5a">Noises/min</div>
<div class="big" style="left:842px;top:86.5px;color:#fff">1</div>
<div class="big" style="left:953px;top:86.5px;color:#fff">0</div>
<div class="big" style="left:1063px;top:86.5px;color:#c0c0c0">0</div>
<div class="t r" style="left:794px;top:132px;width:110px">Total Strikes</div>
<div class="t r" style="left:795px;top:150px;width:110px;letter-spacing:1px">207</div>
<div class="t r" style="left:905px;top:132px;width:110px">Total Close</div>
<div class="t r" style="left:906px;top:150px;width:110px;letter-spacing:1px">0</div>
<div class="t r" style="left:1015px;top:132px;width:110px">Total Noises</div>
<div class="t r" style="left:1016px;top:150px;width:110px;letter-spacing:1px">86</div>
<div class="t" style="left:821px;top:204.5px;color:#c8c8c8">Lightning type distribution</div>
<div style="position:absolute;left:821px;top:217px;width:303px;height:1px;background:#909090"></div>
<div class="t b" style="left:821px;top:225.6px;color:#fff">Cloud-ground</div>
<div class="t b" style="left:912px;top:225.6px;color:#fff">+</div>
<div class="bar" style="left:925px;top:227.6px"><div style="width:11px;background:#ff0000"></div></div>
<div class="t b" style="left:979px;top:225.6px;color:#fff;letter-spacing:1.3px">22%</div>
<div style="position:absolute;left:1016px;top:231.1px;width:6px;height:2px;background:#fff"></div>
<div class="bar" style="left:1028px;top:227.6px"><div style="width:12px;background:#8cc8ff"></div></div>
<div class="t b" style="left:1083px;top:225.6px;color:#fff;letter-spacing:1.3px">25%</div>
<div class="t b" style="left:821px;top:249.6px;color:#d8d0c0">Count</div>
<div class="t b" style="left:925px;top:249.6px;color:#fff">45</div>
<div class="t b" style="left:1028px;top:249.6px;color:#fff">51</div>
<div class="t b" style="left:821px;top:279.8px;color:#fff">Intracloud</div>
<div class="t b" style="left:912px;top:279.8px;color:#fff">+</div>
<div class="bar" style="left:925px;top:281.8px"><div style="width:9px;background:#e860a8"></div></div>
<div class="t b" style="left:979px;top:279.8px;color:#fff;letter-spacing:1.3px">19%</div>
<div style="position:absolute;left:1016px;top:285.3px;width:6px;height:2px;background:#fff"></div>
<div class="bar" style="left:1028px;top:281.8px"><div style="width:17px;background:#00ff00"></div></div>
<div class="t b" style="left:1083px;top:279.8px;color:#fff;letter-spacing:1.3px">35%</div>
<div class="t b" style="left:821px;top:303.8px;color:#d8d0c0">Count</div>
<div class="t b" style="left:925px;top:303.8px;color:#fff">39</div>
<div class="t b" style="left:1028px;top:303.8px;color:#fff">72</div>
<div class="date" style="left:821px;top:339px">1/31/2026 6:24:56 PM</div>
<div style="position:absolute;left:821px;top:358px;width:302px;height:1px;background:#909090"></div>
<div class="t" style="left:821px;top:377.0px">Squelch</div>
<div class="t" style="left:909px;top:377.0px">0</div>
<div class="t" style="left:981px;top:377.0px">Upload</div>
<div class="t" style="left:1061px;top:377.0px;color:#c8c8c8">Disabled</div>
<div class="t" style="left:821px;top:396.9px">Persistence</div>
<div class="t" style="left:909px;top:396.9px">90 min</div>
<div class="t" style="left:981px;top:396.9px">Capture</div>
<div class="t" style="left:1061px;top:396.9px;color:#00ee00">Active</div>
<div class="t" style="left:821px;top:416.8px">Range</div>
<div class="t" style="left:909px;top:416.8px">313 mi</div>
<div class="t" style="left:981px;top:416.8px">Receiver</div>
<div class="t" style="left:1061px;top:416.8px;color:#00ee00">Enabled</div>
<div class="t" style="left:821px;top:464.0px;color:#d8d8d0">Uptime</div>
<div class="t" style="left:910px;top:464.0px">486:10</div>
<div class="t" style="left:981px;top:464.0px;color:#d8d8d0">Peak time</div>
<div class="t" style="left:1061px;top:464.0px">Plot</div>
<div class="t" style="left:821px;top:487.0px;color:#d8d8d0">Peak rate</div>
<div class="t" style="left:910px;top:487.0px">5/min</div>
<div class="t" style="left:981px;top:487.0px;color:#d8d8d0">5:36 PM</div>
<div class="t" style="left:1061px;top:487.0px">Strike</div>
<div class="t" style="left:822px;top:517px;color:#d8d8d0">Trend graph</div>
<div class="t" style="left:908px;top:517px">60 min</div>
<div style="position:absolute;left:9px;top:759px;width:244px;height:44px;background:#000;border:1px solid #a8a8a8;box-sizing:border-box"></div>
<div class="lg" style="left:13px;top:762px;color:#d8d8d8">Symbols</div>
<div class="lg" style="left:53px;top:762px;color:#fff">-CG</div>
<div class="lg" style="left:78px;top:762px;color:#fff">-IC</div>
<div class="lg" style="left:99px;top:762px;color:#fff">+CG</div>
<div class="lg" style="left:124px;top:762px;color:#fff">+IC</div>
<div class="lg" style="left:153px;top:762px;color:#d8d8d8">Strike age color codes</div>
<div class="lg" style="left:13px;top:775px;color:#d8d8d8">Recent</div>
<div class="lg" style="left:13px;top:788px;color:#d8d8d8">Old</div>
<div class="lg" style="left:153px;top:775px;color:#e8e800">15+</div>
<div class="lg" style="left:188px;top:775px;color:#f0b800">30+</div>
<div class="lg" style="left:223px;top:775px;color:#ff9800">45+</div>
<div class="lg" style="left:153px;top:788px;color:#ff7800">60+</div>
<div class="lg" style="left:188px;top:788px;color:#ff5c00">75+</div>
<div class="lg" style="left:223px;top:788px;color:#ff3c00">90+</div>
<svg width="260" height="812" style="position:absolute;left:0;top:0"><circle cx="60.5" cy="780.6" r="4" fill="none" stroke="#00e0e0" stroke-width="1.2"/><path d="M58.0 780.6h5" stroke="#00e0e0" stroke-width="1.2"/><path d="M81.9 780.6h7" stroke="#00e0e0" stroke-width="1.5"/><circle cx="110.2" cy="780.6" r="4" fill="none" stroke="#00e0e0" stroke-width="1.2"/><path d="M107.7 780.6h5" stroke="#00e0e0" stroke-width="1.2"/><path d="M110.2 778.1v5" stroke="#00e0e0" stroke-width="1.2"/><path d="M131.9 780.6h7" stroke="#00e0e0" stroke-width="1.5"/><path d="M135.4 777.1v7" stroke="#00e0e0" stroke-width="1.5"/><circle cx="60.5" cy="793.4" r="4" fill="none" stroke="#ffff00" stroke-width="1.2"/><path d="M58.0 793.4h5" stroke="#ffff00" stroke-width="1.2"/><path d="M81.9 793.4h7" stroke="#ffff00" stroke-width="1.5"/><circle cx="110.2" cy="793.4" r="4" fill="none" stroke="#ffff00" stroke-width="1.2"/><path d="M107.7 793.4h5" stroke="#ffff00" stroke-width="1.2"/><path d="M110.2 790.9v5" stroke="#ffff00" stroke-width="1.2"/><path d="M131.9 793.4h7" stroke="#ffff00" stroke-width="1.5"/><path d="M135.4 789.9v7" stroke="#ffff00" stroke-width="1.5"/></svg>
<div style="position:absolute;left:685px;top:792px;width:121px;height:14px;background:#000"></div>
<div class="lg" style="left:689px;top:793px;color:#e8e8e8;font-size:10.5px;line-height:11px;letter-spacing:0;transform:scaleX(0.9);transform-origin:0 0">©2005 Astrogenic Systems</div>
</body></html>
